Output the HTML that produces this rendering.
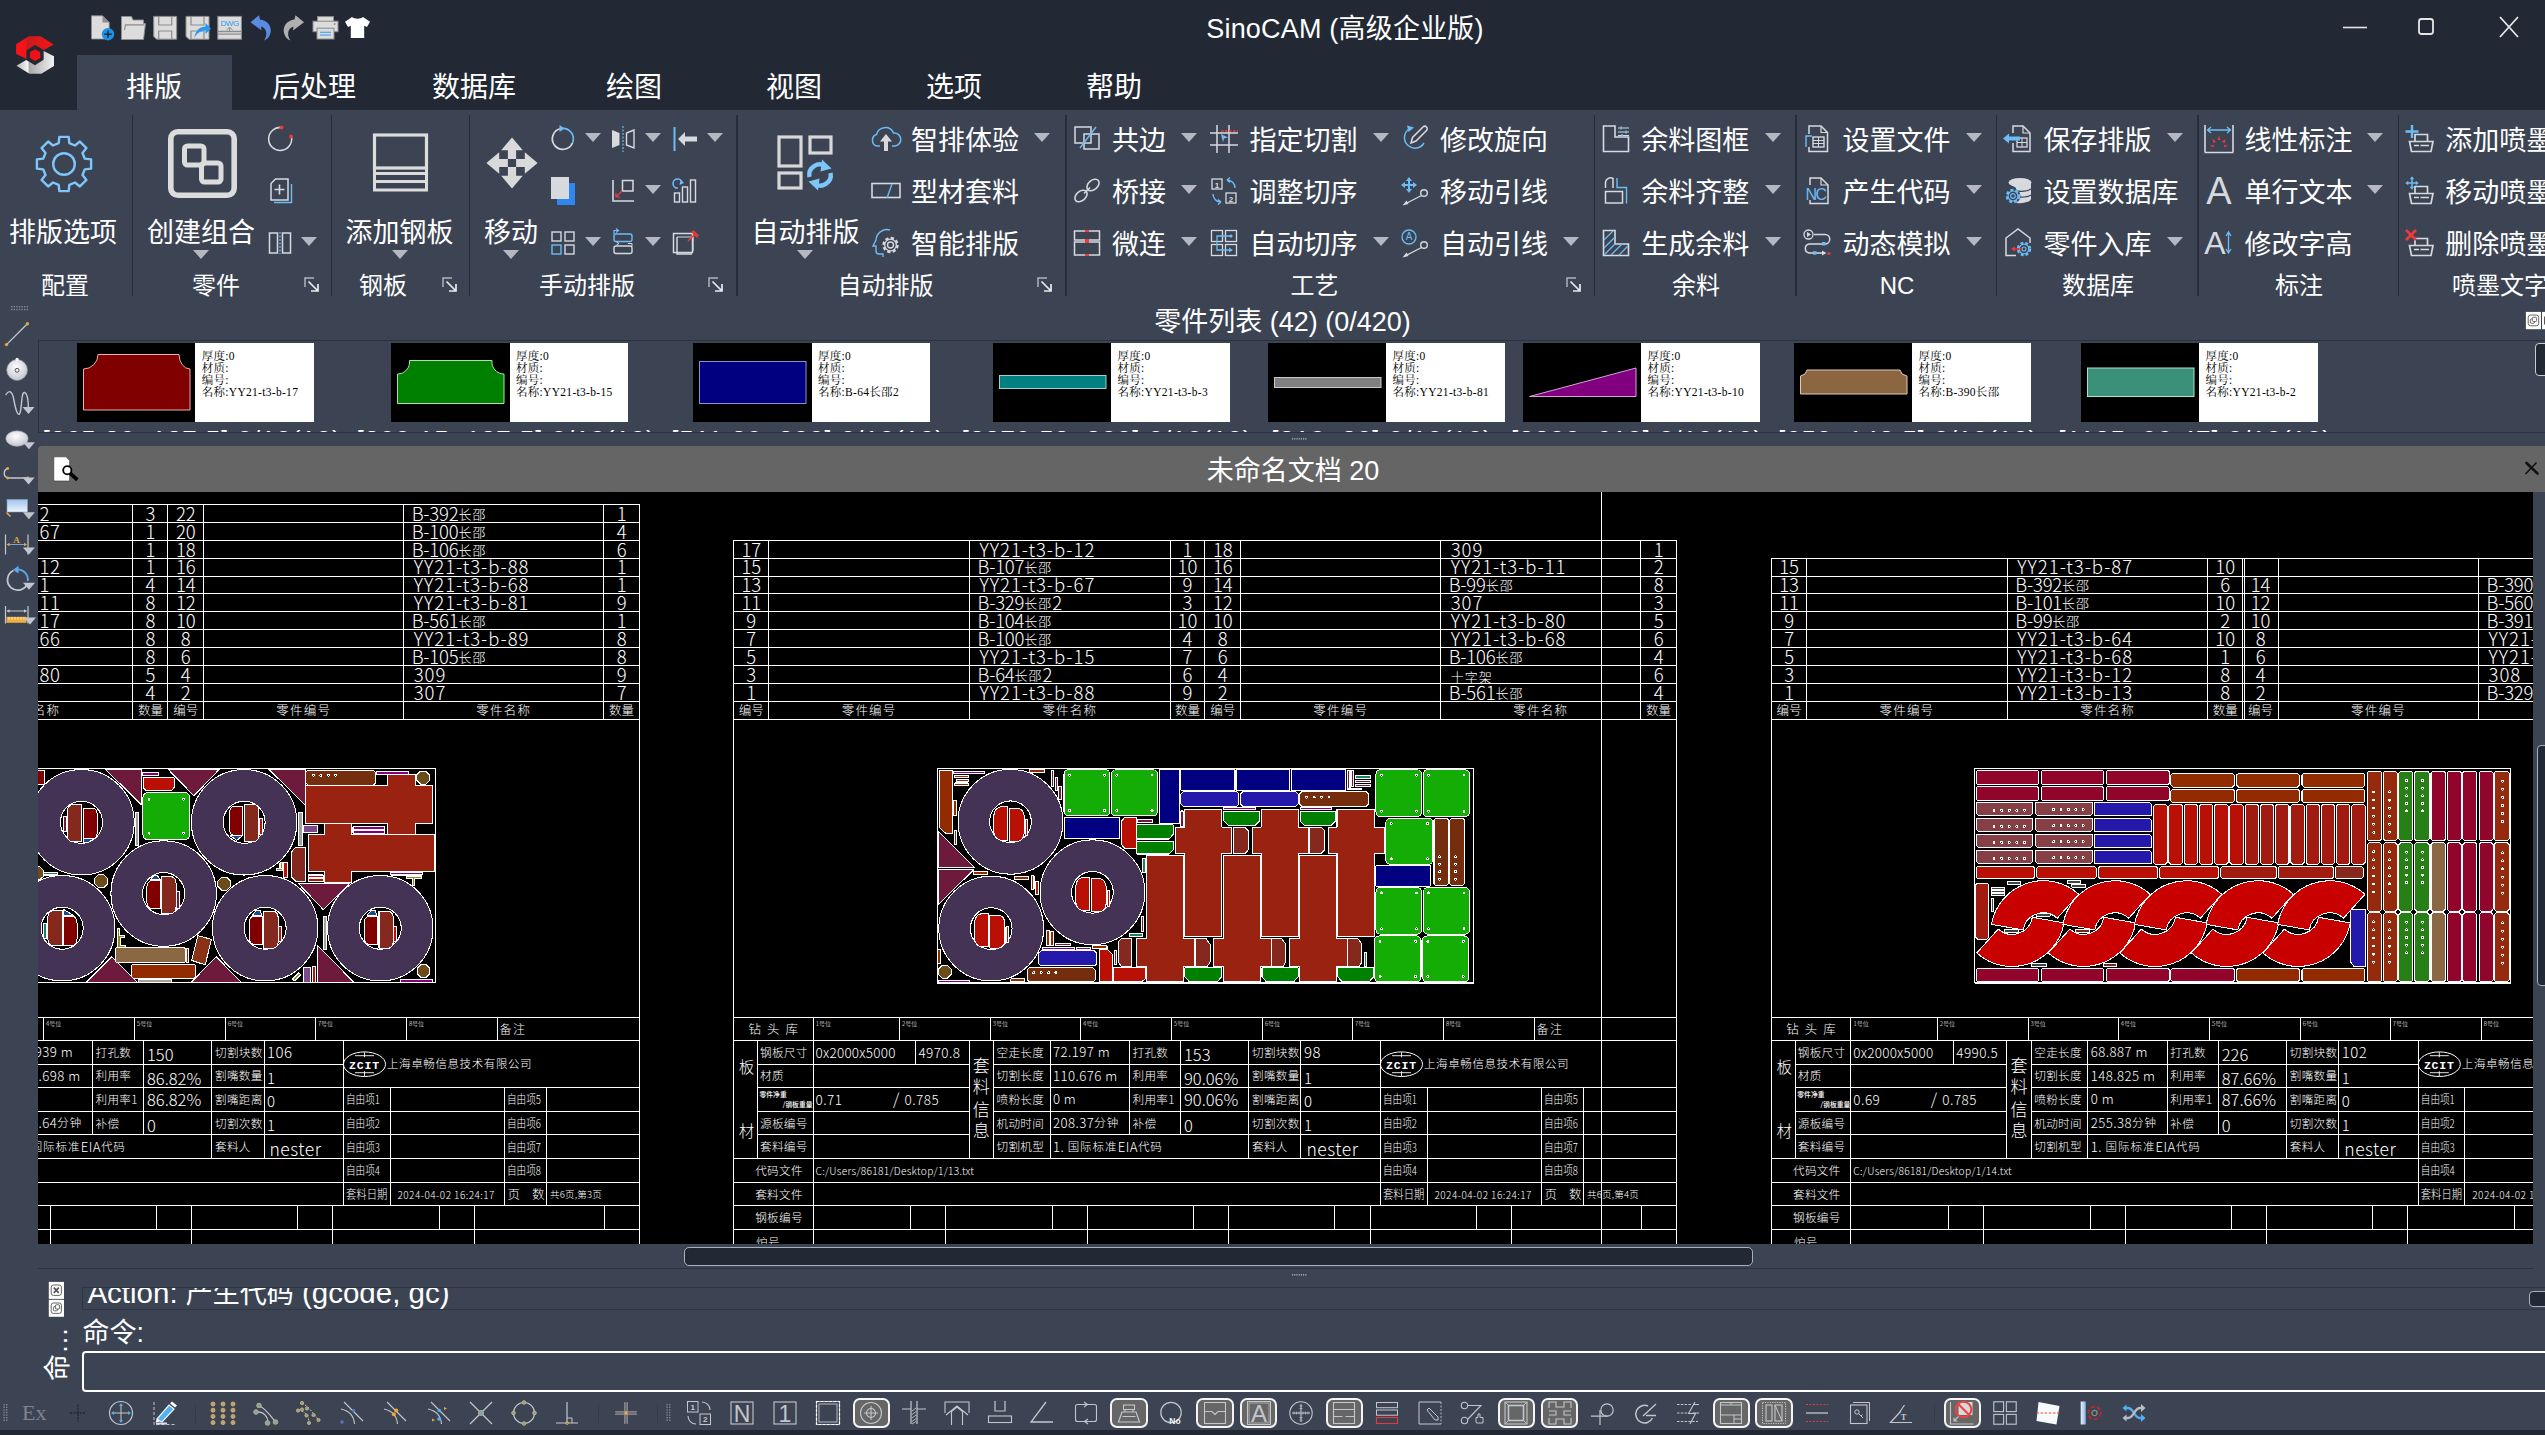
<!DOCTYPE html>
<html lang="zh"><head><meta charset="utf-8"><title>SinoCAM</title>
<style>
html,body{margin:0;padding:0;}
body{width:2545px;height:1435px;overflow:hidden;background:#3c4454;position:relative;font-family:"Liberation Sans","Noto Sans CJK SC",sans-serif;}
div,svg{position:absolute;box-sizing:border-box;}
.t{white-space:nowrap;color:#fff;}
svg{overflow:hidden;}
</style></head><body>
<!-- top -->
<div style="left:0px;top:0px;width:2545px;height:110px;background:#222934"></div>
<div style="left:0px;top:110px;width:2545px;height:190px;background:#3c4454"></div>
<div style="left:77px;top:55px;width:155px;height:56px;background:#3c4454"></div>
<svg style="left:0px;top:20px;" width="70" height="70" viewBox="0 0 70 70"><defs><linearGradient id="lgw" x1="0" y1="0" x2="1" y2="0"><stop offset="0" stop-color="#f2f2f2"/><stop offset="0.65" stop-color="#a9a9a9"/><stop offset="0.7" stop-color="#f4f4f4"/><stop offset="1" stop-color="#b5b5b5"/></linearGradient>
    <linearGradient id="lgr" x1="0" y1="0" x2="1" y2="0"><stop offset="0" stop-color="#ff1218"/><stop offset="0.27" stop-color="#f01418"/><stop offset="0.3" stop-color="#c81c1c"/><stop offset="1" stop-color="#fa1216"/></linearGradient></defs>
    <g transform="scale(0.07668711656441718)"><polygon points="210,315 375,212 530,212 700,318 572,392 458,325 345,395 345,510 210,440" fill="url(#lgr)"/><polygon points="210,315 375,212 530,212 700,318 572,392 458,325 345,395 345,510 210,440" fill="url(#lgw)" transform="rotate(180 457 457)"/><polygon points="457,380 525,420 525,495 457,535 390,495 390,420" fill="#f01015"/></g></svg>
<svg style="left:0px;top:0px;" width="400" height="50" viewBox="0 0 400 50"><path d="M91.5,15.8 H102.5 L109.2,22.5 V39 H91.5 Z" fill="#dcdcdc" stroke="#8c8c8c" stroke-width="0.8"/><path d="M102.5,15.8 V22.5 H109.2 Z" fill="#8c8c8c"/><circle cx="108" cy="34.2" r="6.2" fill="#1a93ea"/><path d="M104.2,34.2 H111.8 M108,30.4 V38" stroke="#222934" stroke-width="1.5"/><path d="M121.5,16.5 H131.5 L133,20 H143.5 V23.5 H145.5 L143.5,39.5 H121.5 Z" fill="#dcdcdc" stroke="#8c8c8c" stroke-width="0.9"/><path d="M124.5,30 L125.5,24.8 H144.5" fill="none" stroke="#8c8c8c" stroke-width="1.2"/><path d="M153.7,16.4 H176.7 V39.2 H156.7 L153.7,36.5 Z" fill="#dcdcdc" stroke="#8c8c8c" stroke-width="1"/><path d="M158.7,16.4 V25 H171.7 V16.4 M158.7,39.2 V31 H171.7 V39.2" fill="none" stroke="#8c8c8c" stroke-width="1.2"/><path d="M186,16.4 H209 V39.2 H189 L186,36.5 Z" fill="#dcdcdc" stroke="#8c8c8c" stroke-width="1"/><path d="M191,16.4 V25 H204 V16.4 M191,39.2 V31 H204 V39.2" fill="none" stroke="#8c8c8c" stroke-width="1.2"/><path d="M194,38 C196,30 200,26.5 205.5,26.5 V23 L211,28.5 L205.5,34 V30.5 C201,30.5 197,33 194,38 Z" fill="#2a98f0"/><rect x="217.8" y="16.4" width="23.6" height="22.8" fill="#dcdcdc" stroke="#8c8c8c" stroke-width="1"/><path d="M217.8,31.5 H241.4 M217.8,34.2 H241.4" stroke="#8c8c8c" stroke-width="1.3"/><text x="229.6" y="26" font-size="8" fill="#2a98f0" text-anchor="middle" font-family="Liberation Sans,sans-serif" letter-spacing="-0.5">DWG</text><path d="M229.6,27.5 V31 M226.5,30 L229.6,27.3 L232.7,30" stroke="#8c8c8c" stroke-width="1" fill="none"/><path d="M250.5,22.2 L259,15.3 L260,19.6 C268,20.5 272,27 270.5,33 C269.5,37 267,39.5 264,40.6 C267.5,36 267.5,28.5 261,26.6 L261.5,30.6 Z" fill="#5b8be0"/><path d="M304,22.2 L295.5,15.3 L294.5,19.6 C286.5,20.5 282.5,27 284,33 C285,37 287.5,39.5 290.5,40.6 C287,36 287,28.5 293.5,26.6 L293,30.6 Z" fill="#b0b0b0"/><rect x="317.5" y="16.6" width="16" height="5" fill="#dcdcdc" stroke="#8c8c8c" stroke-width="1"/><rect x="313" y="21.2" width="25" height="10.5" fill="#dcdcdc" stroke="#8c8c8c" stroke-width="1"/><rect x="317" y="28.2" width="17" height="10.8" fill="#dcdcdc" stroke="#8c8c8c" stroke-width="1"/><path d="M320,32.3 H331 M320,35 H331" stroke="#2a98f0" stroke-width="1.1"/><circle cx="334.6" cy="24" r="0.9" fill="#8c8c8c"/><path d="M352,17 C354.5,19.3 360.5,19.3 363,17 L370,21.8 L367,27 L364.2,25.8 V38 H350.8 V25.8 L348,27 L345,21.8 Z" fill="#ffffff"/></svg>
<div class="t" style="left:1045.0px;top:10.5px;width:600px;text-align:center;font-size:27px;line-height:37px;color:#ffffff;letter-spacing:0.2px">SinoCAM (高级企业版)</div>
<svg style="left:2330px;top:10px;" width="215" height="40" viewBox="0 0 215 40"><path d="M 13,17.5 H 37" stroke="#e6e6e6" stroke-width="1.6" fill="none" /><rect x="89" y="9" width="14" height="15" rx="2.5" stroke="#e6e6e6" stroke-width="1.8" fill="none"/><path d="M 170,7 L 188,27 M 188,7 L 170,27" stroke="#e6e6e6" stroke-width="1.8" fill="none" /></svg>
<div class="t" style="left:-146.0px;top:67.5px;width:600px;text-align:center;font-size:28px;line-height:39px;color:#ffffff;">排版</div>
<div class="t" style="left:14.0px;top:67.5px;width:600px;text-align:center;font-size:28px;line-height:39px;color:#ffffff;">后处理</div>
<div class="t" style="left:174.0px;top:67.5px;width:600px;text-align:center;font-size:28px;line-height:39px;color:#ffffff;">数据库</div>
<div class="t" style="left:334.0px;top:67.5px;width:600px;text-align:center;font-size:28px;line-height:39px;color:#ffffff;">绘图</div>
<div class="t" style="left:494.0px;top:67.5px;width:600px;text-align:center;font-size:28px;line-height:39px;color:#ffffff;">视图</div>
<div class="t" style="left:654.0px;top:67.5px;width:600px;text-align:center;font-size:28px;line-height:39px;color:#ffffff;">选项</div>
<div class="t" style="left:814.0px;top:67.5px;width:600px;text-align:center;font-size:28px;line-height:39px;color:#ffffff;">帮助</div>
<div style="left:131.9px;top:115px;width:1.5px;height:181px;background:#262c38"></div>
<div style="left:330.5px;top:115px;width:1.5px;height:181px;background:#262c38"></div>
<div style="left:468.5px;top:115px;width:1.5px;height:181px;background:#262c38"></div>
<div style="left:736.1px;top:115px;width:1.5px;height:181px;background:#262c38"></div>
<div style="left:1065.3px;top:115px;width:1.5px;height:181px;background:#262c38"></div>
<div style="left:1593.8px;top:115px;width:1.5px;height:181px;background:#262c38"></div>
<div style="left:1795.1px;top:115px;width:1.5px;height:181px;background:#262c38"></div>
<div style="left:1995.8px;top:115px;width:1.5px;height:181px;background:#262c38"></div>
<div style="left:2197.0px;top:115px;width:1.5px;height:181px;background:#262c38"></div>
<div style="left:2397.9px;top:115px;width:1.5px;height:181px;background:#262c38"></div>
<div class="t" style="left:-235.0px;top:269.2px;width:600px;text-align:center;font-size:24px;line-height:33px;color:#ffffff;">配置</div>
<div class="t" style="left:-84.0px;top:269.2px;width:600px;text-align:center;font-size:24px;line-height:33px;color:#ffffff;">零件</div>
<div class="t" style="left:83.0px;top:269.2px;width:600px;text-align:center;font-size:24px;line-height:33px;color:#ffffff;">钢板</div>
<div class="t" style="left:287.0px;top:269.2px;width:600px;text-align:center;font-size:24px;line-height:33px;color:#ffffff;">手动排版</div>
<div class="t" style="left:585.5px;top:269.2px;width:600px;text-align:center;font-size:24px;line-height:33px;color:#ffffff;">自动排版</div>
<div class="t" style="left:1014.5px;top:269.2px;width:600px;text-align:center;font-size:24px;line-height:33px;color:#ffffff;">工艺</div>
<div class="t" style="left:1396.0px;top:269.2px;width:600px;text-align:center;font-size:24px;line-height:33px;color:#ffffff;">余料</div>
<div class="t" style="left:1597.0px;top:269.2px;width:600px;text-align:center;font-size:24px;line-height:33px;color:#ffffff;">NC</div>
<div class="t" style="left:1798.0px;top:269.2px;width:600px;text-align:center;font-size:24px;line-height:33px;color:#ffffff;">数据库</div>
<div class="t" style="left:1999.0px;top:269.2px;width:600px;text-align:center;font-size:24px;line-height:33px;color:#ffffff;">标注</div>
<div class="t" style="left:2452px;top:269.2px;font-size:24px;line-height:33px;color:#ffffff;">喷墨文字</div>
<svg style="left:303.5px;top:277px;" width="16" height="16" viewBox="0 0 16 16"><path d="M 1,10 V 1 H 10" stroke="#aeb3bd" stroke-width="1.5" fill="none" /><path d="M 4.5,4.5 L 14,14 M 14,7 V 14 H 7" stroke="#e8eaee" stroke-width="1.7" fill="none" /></svg>
<svg style="left:442px;top:277px;" width="16" height="16" viewBox="0 0 16 16"><path d="M 1,10 V 1 H 10" stroke="#aeb3bd" stroke-width="1.5" fill="none" /><path d="M 4.5,4.5 L 14,14 M 14,7 V 14 H 7" stroke="#e8eaee" stroke-width="1.7" fill="none" /></svg>
<svg style="left:708.4px;top:277px;" width="16" height="16" viewBox="0 0 16 16"><path d="M 1,10 V 1 H 10" stroke="#aeb3bd" stroke-width="1.5" fill="none" /><path d="M 4.5,4.5 L 14,14 M 14,7 V 14 H 7" stroke="#e8eaee" stroke-width="1.7" fill="none" /></svg>
<svg style="left:1037.2px;top:277px;" width="16" height="16" viewBox="0 0 16 16"><path d="M 1,10 V 1 H 10" stroke="#aeb3bd" stroke-width="1.5" fill="none" /><path d="M 4.5,4.5 L 14,14 M 14,7 V 14 H 7" stroke="#e8eaee" stroke-width="1.7" fill="none" /></svg>
<svg style="left:1566.4px;top:277px;" width="16" height="16" viewBox="0 0 16 16"><path d="M 1,10 V 1 H 10" stroke="#aeb3bd" stroke-width="1.5" fill="none" /><path d="M 4.5,4.5 L 14,14 M 14,7 V 14 H 7" stroke="#e8eaee" stroke-width="1.7" fill="none" /></svg>
<div class="t" style="left:-237.0px;top:215.2px;width:600px;text-align:center;font-size:27px;line-height:37px;color:#ffffff;">排版选项</div>
<div class="t" style="left:-99.0px;top:215.2px;width:600px;text-align:center;font-size:27px;line-height:37px;color:#ffffff;">创建组合</div>
<div class="t" style="left:99.5px;top:215.2px;width:600px;text-align:center;font-size:27px;line-height:37px;color:#ffffff;">添加钢板</div>
<div class="t" style="left:211.0px;top:215.2px;width:600px;text-align:center;font-size:27px;line-height:37px;color:#ffffff;">移动</div>
<div class="t" style="left:505.5px;top:215.2px;width:600px;text-align:center;font-size:27px;line-height:37px;color:#ffffff;">自动排版</div>
<svg style="left:193.0px;top:250.0px" width="16" height="9"><path d="M0,0 H16 L8.0,9 Z" fill="#b4b8c2"/></svg>
<svg style="left:391.5px;top:250.0px" width="16" height="9"><path d="M0,0 H16 L8.0,9 Z" fill="#b4b8c2"/></svg>
<svg style="left:503.0px;top:250.0px" width="16" height="9"><path d="M0,0 H16 L8.0,9 Z" fill="#b4b8c2"/></svg>
<svg style="left:797.0px;top:250.0px" width="16" height="9"><path d="M0,0 H16 L8.0,9 Z" fill="#b4b8c2"/></svg>
<svg style="left:32px;top:131.5px;" width="64" height="64" viewBox="-32 -32 64 64"><polygon points="-5.32,-20.83 -4.65,-27.10 4.65,-27.10 5.32,-20.83 10.97,-18.49 15.88,-22.45 22.45,-15.88 18.49,-10.97 20.83,-5.32 27.10,-4.65 27.10,4.65 20.83,5.32 18.49,10.97 22.45,15.88 15.88,22.45 10.97,18.49 5.32,20.83 4.65,27.10 -4.65,27.10 -5.32,20.83 -10.97,18.49 -15.88,22.45 -22.45,15.88 -18.49,10.97 -20.83,5.32 -27.10,4.65 -27.10,-4.65 -20.83,-5.32 -18.49,-10.97 -22.45,-15.88 -15.88,-22.45 -10.97,-18.49" fill="none" stroke="#7cc6fa" stroke-width="2.4" stroke-linejoin="round"/><circle r="10.8" fill="none" stroke="#7cc6fa" stroke-width="2.4"/></svg>
<svg style="left:165px;top:126px;" width="76" height="76" viewBox="0 0 76 76"><rect x="5.8" y="5.8" width="63.4" height="63.4" rx="7" stroke="#dcdcdc" stroke-width="5.6" fill="none"/><rect x="19.5" y="20" width="19.5" height="19" rx="3" stroke="#dcdcdc" stroke-width="5" fill="none"/><rect x="36.5" y="37" width="19.5" height="19" rx="3" stroke="#dcdcdc" stroke-width="5" fill="none"/></svg>
<svg style="left:370px;top:130px;" width="60" height="66" viewBox="0 0 60 66"><rect x="4.5" y="5" width="52" height="33" rx="0" stroke="#dcdcdc" stroke-width="3.2" fill="none"/><path d="M 4.5,43.5 H 56.5 M 4.5,51.5 H 56.5 M 4.5,60 H 56.5 M 4.5,38 V 61.5 M 56.5,38 V 61.5" stroke="#dcdcdc" stroke-width="3" fill="none" /></svg>
<svg style="left:482px;top:133px;" width="60" height="60" viewBox="-30 -30 60 60"><path d="M0,-25.6 L10.8,-12.8 H4.1 V-4.1 H-4.1 V-12.8 H-10.8 Z" fill="#d9d9d9" transform="rotate(0)"/><path d="M0,-25.6 L10.8,-12.8 H4.1 V-4.1 H-4.1 V-12.8 H-10.8 Z" fill="#d9d9d9" transform="rotate(90)"/><path d="M0,-25.6 L10.8,-12.8 H4.1 V-4.1 H-4.1 V-12.8 H-10.8 Z" fill="#d9d9d9" transform="rotate(180)"/><path d="M0,-25.6 L10.8,-12.8 H4.1 V-4.1 H-4.1 V-12.8 H-10.8 Z" fill="#d9d9d9" transform="rotate(270)"/></svg>
<svg style="left:776px;top:134px;" width="62" height="60" viewBox="0 0 62 60"><rect x="3" y="3" width="22" height="29" rx="0" stroke="#d8d8d8" stroke-width="3.2" fill="none"/><rect x="34" y="3" width="21" height="16" rx="0" stroke="#d8d8d8" stroke-width="3.2" fill="none"/><rect x="3" y="39" width="22" height="15" rx="0" stroke="#d8d8d8" stroke-width="3.2" fill="none"/><g transform="translate(44,41)"><path d="M -10.5,2 A 10.5 10.5 0 0 1 6,-8.6" stroke="#7cc6fa" stroke-width="4.4" fill="none"/><path d="M 2,-15.5 L 11.5,-6.5 L 0.5,-3.5 Z" fill="#7cc6fa"/><path d="M 10.5,-2 A 10.5 10.5 0 0 1 -6,8.6" stroke="#7cc6fa" stroke-width="4.4" fill="none"/><path d="M -2,15.5 L -11.5,6.5 L -0.5,3.5 Z" fill="#7cc6fa"/></g></svg>
<svg style="left:264.0px;top:123.0px" width="32" height="32" viewBox="-16.0 -16.0 32 32"><path d="M 1.5,-11.5 A 11.5 11.5 0 1 0 11.5,-2" stroke="#d6d9de" stroke-width="1.6" fill="none" /><circle cx="1.5" cy="-11.5" r="2" stroke="#f03a3a" stroke-width="0" fill="#f03a3a"/><circle cx="11" cy="-2.5" r="2" stroke="#f03a3a" stroke-width="0" fill="#f03a3a"/></svg>
<svg style="left:264.0px;top:175.0px" width="32" height="32" viewBox="-16.0 -16.0 32 32"><path d="M -6,11.5 H 11.5 V -7" stroke="#6cbcf5" stroke-width="1.4" fill="none" /><path d="M -9,-7.5 L -4.5,-12 H 8 V 9 H -9 Z" stroke="#d6d9de" stroke-width="1.5" fill="none" /><path d="M -5.5,-1.5 H 4.5 M -0.5,-6.5 V 3.5" stroke="#d6d9de" stroke-width="1.6" fill="none" /></svg>
<svg style="left:264.0px;top:227.0px" width="32" height="32" viewBox="-16.0 -16.0 32 32"><rect x="-10.5" y="-10" width="8" height="20" rx="0" stroke="#d6d9de" stroke-width="1.5" fill="none"/><rect x="2.5" y="-10" width="8" height="20" rx="0" stroke="#d6d9de" stroke-width="1.5" fill="none"/><path d="M 0,-11 V 11" stroke="#6cbcf5" stroke-width="1.2" fill="none" stroke-dasharray="2 1.5"/></svg>
<svg style="left:301.3px;top:237.0px" width="16" height="9"><path d="M0,0 H16 L8.0,9 Z" fill="#b4b8c2"/></svg>
<svg style="left:546.7px;top:123.0px" width="32" height="32" viewBox="-16.0 -16.0 32 32"><path d="M -2,-10.5 A 10.5 10.5 0 1 0 9.5,4" stroke="#d6d9de" stroke-width="1.7" fill="none" /><path d="M 9.5,4 A 10.5 10.5 0 0 0 -2,-10.5" stroke="#6cbcf5" stroke-width="1.7" fill="none" /><path d="M -3.5,-14 L 1.5,-10.5 L -3.5,-7 Z" fill="#6cbcf5"/></svg>
<svg style="left:546.7px;top:175.0px" width="32" height="32" viewBox="-16.0 -16.0 32 32"><rect x="-6" y="-8" width="18" height="22" fill="#2f86f0"/><rect x="-12" y="-14" width="18" height="22" fill="#d6d9de"/></svg>
<svg style="left:546.7px;top:227.0px" width="32" height="32" viewBox="-16.0 -16.0 32 32"><rect x="-11" y="-11" width="9" height="9" rx="0" stroke="#d6d9de" stroke-width="1.4" fill="none"/><rect x="2" y="-11" width="9" height="9" rx="0" stroke="#d6d9de" stroke-width="1.4" fill="none"/><rect x="-11" y="2" width="9" height="9" rx="0" stroke="#6cbcf5" stroke-width="1.4" fill="none"/><rect x="2" y="2" width="9" height="9" rx="0" stroke="#d6d9de" stroke-width="1.4" fill="none"/></svg>
<svg style="left:607.2px;top:123.0px" width="32" height="32" viewBox="-16.0 -16.0 32 32"><path d="M -11,-9 L -3.5,-6 V 6 L -11,9 Z" fill="#d6d9de"/><path d="M 11,-9 L 3.5,-6 V 6 L 11,9 Z" stroke="#d6d9de" stroke-width="1.4" fill="none" /><path d="M 0,-13 V 13" stroke="#6cbcf5" stroke-width="1.2" fill="none" stroke-dasharray="2 1.5"/></svg>
<svg style="left:607.2px;top:175.0px" width="32" height="32" viewBox="-16.0 -16.0 32 32"><path d="M -10,-11 V 10 H 11" stroke="#d6d9de" stroke-width="1.6" fill="none" /><rect x="-0.5" y="-10.5" width="10.5" height="10.5" rx="0" stroke="#d6d9de" stroke-width="1.5" fill="none"/><path d="M -1,0 L -7,6 M -7,2 V 6 H -3" stroke="#f03a3a" stroke-width="1.2" fill="none" /></svg>
<svg style="left:607.2px;top:227.0px" width="32" height="32" viewBox="-16.0 -16.0 32 32"><rect x="-9" y="-9" width="18" height="7.5" rx="2" stroke="#6cbcf5" stroke-width="1.4" fill="none"/><rect x="-9" y="3" width="18" height="7.5" rx="2" stroke="#d6d9de" stroke-width="1.4" fill="none"/><path d="M -5,-12.5 H -9 V -9 M -7,-14.5 L -4.5,-12.5 L -7,-10.5" stroke="#6cbcf5" stroke-width="1.2" fill="none" /><path d="M 5,0.5 H 9 V 3 M -4,0.5 L -6.5,-1 M -4,0.5 L-6.5,2" stroke="#d6d9de" stroke-width="1.0" fill="none" /></svg>
<svg style="left:669.0px;top:123.0px" width="32" height="32" viewBox="-16.0 -16.0 32 32"><path d="M -10.5,-12 V 12" stroke="#6cbcf5" stroke-width="2" fill="none" /><path d="M -7,0 L 0,-7 V -2.5 H 12 V 2.5 H 0 V 7 Z" fill="#d6d9de"/></svg>
<svg style="left:669.0px;top:175.0px" width="32" height="32" viewBox="-16.0 -16.0 32 32"><rect x="-10.5" y="2" width="5" height="9" rx="0" stroke="#d6d9de" stroke-width="1.4" fill="none"/><rect x="-2.5" y="-4" width="5" height="15" rx="0" stroke="#d6d9de" stroke-width="1.4" fill="none"/><rect x="5.5" y="-11" width="5" height="22" rx="0" stroke="#d6d9de" stroke-width="1.4" fill="none"/><path d="M -3,-8 A 4.5 4.5 0 1 0 -7,-3" stroke="#6cbcf5" stroke-width="1.6" fill="none" /><path d="M -4.5,-11.5 L -1,-8 L -5.5,-6 Z" fill="#6cbcf5"/></svg>
<svg style="left:669.0px;top:227.0px" width="32" height="32" viewBox="-16.0 -16.0 32 32"><path d="M -8,-6 V 11 H 7" stroke="#d6d9de" stroke-width="1.5" fill="none" /><rect x="-11.5" y="-9.5" width="19" height="19" rx="0" stroke="#d6d9de" stroke-width="1.5" fill="none"/><path d="M -8,-6 H 8 V 8" stroke="#d6d9de" stroke-width="1.2" fill="none" /><path d="M 3,-2 L 9,-8 M 6.5,-11.5 L 12.5,-5.5 M 8,-12.5 L 13.5,-7" stroke="#f03a3a" stroke-width="1.6" fill="none" /></svg>
<svg style="left:584.6px;top:133.0px" width="16" height="9"><path d="M0,0 H16 L8.0,9 Z" fill="#b4b8c2"/></svg>
<svg style="left:584.6px;top:237.0px" width="16" height="9"><path d="M0,0 H16 L8.0,9 Z" fill="#b4b8c2"/></svg>
<svg style="left:645.4px;top:133.0px" width="16" height="9"><path d="M0,0 H16 L8.0,9 Z" fill="#b4b8c2"/></svg>
<svg style="left:645.4px;top:185.0px" width="16" height="9"><path d="M0,0 H16 L8.0,9 Z" fill="#b4b8c2"/></svg>
<svg style="left:645.4px;top:237.0px" width="16" height="9"><path d="M0,0 H16 L8.0,9 Z" fill="#b4b8c2"/></svg>
<svg style="left:706.5px;top:133.0px" width="16" height="9"><path d="M0,0 H16 L8.0,9 Z" fill="#b4b8c2"/></svg>
<svg style="left:870.0px;top:123.0px" width="32" height="32" viewBox="-16.0 -16.0 32 32"><path d="M -6,7 H -9 A 6 6 0 0 1 -9.5,-4.5 A 9 9 0 0 1 7.5,-6 A 6.5 6.5 0 0 1 9,7 H 6" stroke="#6cbcf5" stroke-width="1.5" fill="none" /><path d="M 0,-5 L 6,2.5 H 2 V 12 H -2 V 2.5 H -6 Z" fill="#d6d9de"/></svg>
<svg style="left:870.0px;top:175.0px" width="32" height="32" viewBox="-16.0 -16.0 32 32"><rect x="-14" y="-7.5" width="28" height="14" rx="0" stroke="#d6d9de" stroke-width="1.6" fill="none"/><path d="M 6,-7 L 1,7" stroke="#6cbcf5" stroke-width="1.4" fill="none" /></svg>
<svg style="left:870.0px;top:227.0px" width="32" height="32" viewBox="-16.0 -16.0 32 32"><path d="M 4,-13 A 11 11 0 0 0 -10,-3 L -13,3 H -10 V 8 A 3 3 0 0 0 -7,11 H -3 V 14" stroke="#6cbcf5" stroke-width="1.4" fill="none" /><circle cx="4.5" cy="2" r="3" stroke="#d6d9de" stroke-width="1.4" fill="none"/><circle cx="4.5" cy="2" r="7" stroke="#d6d9de" stroke-width="2.4" fill="none" stroke-dasharray="3.2 2.3"/><circle cx="4.5" cy="2" r="5.8" stroke="#d6d9de" stroke-width="1.3" fill="none"/></svg>
<div class="t" style="left:911px;top:123.0px;font-size:27px;line-height:37px;color:#ffffff;">智排体验</div>
<svg style="left:1034.4px;top:133.0px" width="16" height="9"><path d="M0,0 H16 L8.0,9 Z" fill="#b4b8c2"/></svg>
<div class="t" style="left:911px;top:175.0px;font-size:27px;line-height:37px;color:#ffffff;">型材套料</div>
<div class="t" style="left:911px;top:227.0px;font-size:27px;line-height:37px;color:#ffffff;">智能排版</div>
<svg style="left:1070.6px;top:123.0px" width="32" height="32" viewBox="-16.0 -16.0 32 32"><rect x="-12" y="-12" width="16" height="16" rx="0" stroke="#d6d9de" stroke-width="1.5" fill="none"/><rect x="-3" y="-5" width="15" height="15" rx="0" stroke="#d6d9de" stroke-width="1.5" fill="none"/><path d="M 9,-12 L -7,9" stroke="#6cbcf5" stroke-width="1.4" fill="none" /></svg>
<svg style="left:1070.6px;top:175.0px" width="32" height="32" viewBox="-16.0 -16.0 32 32"><ellipse cx="-6" cy="5" rx="7" ry="4.6" transform="rotate(-40 -6 5)" stroke="#d6d9de" stroke-width="1.6" fill="none"/><ellipse cx="6" cy="-6" rx="7" ry="4.6" transform="rotate(-40 6 -6)" stroke="#d6d9de" stroke-width="1.6" fill="none"/><path d="M -3,2.5 L 3,-3.5" stroke="#d6d9de" stroke-width="1.6" fill="none" /></svg>
<svg style="left:1070.6px;top:227.0px" width="32" height="32" viewBox="-16.0 -16.0 32 32"><rect x="-12.5" y="-12" width="25" height="9" rx="0" stroke="#d6d9de" stroke-width="1.5" fill="none"/><rect x="-12.5" y="-1" width="25" height="13" rx="0" stroke="#d6d9de" stroke-width="1.5" fill="none"/><path d="M -2,-12 H 2 M -2,-3 H 2 M -2,-1 H 2 M -2,12 H 2" stroke="#f03a3a" stroke-width="2.2" fill="none" /></svg>
<div class="t" style="left:1112px;top:123.0px;font-size:27px;line-height:37px;color:#ffffff;">共边</div>
<svg style="left:1181.2px;top:133.0px" width="16" height="9"><path d="M0,0 H16 L8.0,9 Z" fill="#b4b8c2"/></svg>
<div class="t" style="left:1112px;top:175.0px;font-size:27px;line-height:37px;color:#ffffff;">桥接</div>
<svg style="left:1181.2px;top:185.0px" width="16" height="9"><path d="M0,0 H16 L8.0,9 Z" fill="#b4b8c2"/></svg>
<div class="t" style="left:1112px;top:227.0px;font-size:27px;line-height:37px;color:#ffffff;">微连</div>
<svg style="left:1181.2px;top:237.0px" width="16" height="9"><path d="M0,0 H16 L8.0,9 Z" fill="#b4b8c2"/></svg>
<svg style="left:1208.0px;top:123.0px" width="32" height="32" viewBox="-16.0 -16.0 32 32"><path d="M -7,-14 V 14 M 5,-14 V 14 M -14,-6 H 14 M -14,6 H 14" stroke="#d6d9de" stroke-width="1.5" fill="none" /><path d="M -3,-8 H 14" stroke="#f03a3a" stroke-width="1.3" fill="none" stroke-dasharray="2.5 1.5"/><path d="M -3,-5 L 4,-1.5 L 0,-0.5 L -1,3.5 Z" fill="#6cbcf5"/></svg>
<svg style="left:1208.0px;top:175.0px" width="32" height="32" viewBox="-16.0 -16.0 32 32"><rect x="-12" y="-12" width="10" height="10" rx="0" stroke="#d6d9de" stroke-width="1.3" fill="none"/><rect x="2" y="2" width="10" height="10" rx="0" stroke="#d6d9de" stroke-width="1.3" fill="none"/><text x="-7" y="-3.5" font-size="8" fill="#d6d9de" text-anchor="middle" font-family="Liberation Sans,sans-serif" font-weight="bold">1</text><text x="7" y="10.5" font-size="8" fill="#d6d9de" text-anchor="middle" font-family="Liberation Sans,sans-serif" font-weight="bold">2</text><path d="M 3,-11 A 8 8 0 0 1 11,-3 M 3,-11 l 3,-2.5 M 3,-11 l 3,2.5" stroke="#6cbcf5" stroke-width="1.4" fill="none" /><path d="M -3,11 A 8 8 0 0 1 -11,3 M -3,11 l -3,-2.5 M -3,11 l -3,2.5" stroke="#6cbcf5" stroke-width="1.4" fill="none" /></svg>
<svg style="left:1208.0px;top:227.0px" width="32" height="32" viewBox="-16.0 -16.0 32 32"><rect x="-12.5" y="-12.5" width="11" height="11" rx="0" stroke="#d6d9de" stroke-width="1.3" fill="none"/><rect x="1.5" y="-12.5" width="11" height="11" rx="0" stroke="#d6d9de" stroke-width="1.3" fill="none"/><rect x="-12.5" y="1.5" width="11" height="11" rx="0" stroke="#d6d9de" stroke-width="1.3" fill="none"/><rect x="1.5" y="1.5" width="11" height="11" rx="0" stroke="#d6d9de" stroke-width="1.3" fill="none"/><path d="M 7,-7 H -7 V 7 H 6" stroke="#6cbcf5" stroke-width="1.3" fill="none" /><circle cx="7" cy="-7" r="1.6" stroke="#6cbcf5" stroke-width="0" fill="#6cbcf5"/><path d="M 5,4.5 L 9,7 L 5,9.5 Z" fill="#6cbcf5"/></svg>
<div class="t" style="left:1249.5px;top:123.0px;font-size:27px;line-height:37px;color:#ffffff;">指定切割</div>
<svg style="left:1372.6px;top:133.0px" width="16" height="9"><path d="M0,0 H16 L8.0,9 Z" fill="#b4b8c2"/></svg>
<div class="t" style="left:1249.5px;top:175.0px;font-size:27px;line-height:37px;color:#ffffff;">调整切序</div>
<div class="t" style="left:1249.5px;top:227.0px;font-size:27px;line-height:37px;color:#ffffff;">自动切序</div>
<svg style="left:1372.6px;top:237.0px" width="16" height="9"><path d="M0,0 H16 L8.0,9 Z" fill="#b4b8c2"/></svg>
<svg style="left:1399.3px;top:123.0px" width="32" height="32" viewBox="-16.0 -16.0 32 32"><path d="M 9,4 A 10.5 10.5 0 1 1 -6,-10" stroke="#6cbcf5" stroke-width="1.5" fill="none" /><path d="M -8,-13.5 L -1,-11.5 L -6.5,-7 Z" fill="#6cbcf5"/><path d="M -4,4 L -2.5,-1.5 L 8,-12 A 2.4 2.4 0 0 1 11.5,-8.5 L 1,2 Z" stroke="#d6d9de" stroke-width="1.5" fill="none" /></svg>
<svg style="left:1399.3px;top:175.0px" width="32" height="32" viewBox="-16.0 -16.0 32 32"><circle cx="9" cy="2" r="3.3" stroke="#d6d9de" stroke-width="1.4" fill="none"/><path d="M 6.5,4.5 L -10,13" stroke="#d6d9de" stroke-width="1.4" fill="none" /><path d="M -12.5,14.5 L -8.5,9.5 L -6.5,13 Z" fill="#d6d9de"/><path d="M -6,-14 l 3,4 h-2 v3 h3 v-2 l4,3 l-4,3 v-2 h-3 v3 h2 l-3,4 l-3,-4 h2 v-3 h-3 v2 l-4,-3 l4,-3 v2 h3 v-3 h-2 Z" fill="#6cbcf5"/></svg>
<svg style="left:1399.3px;top:227.0px" width="32" height="32" viewBox="-16.0 -16.0 32 32"><circle cx="9" cy="2" r="3.3" stroke="#d6d9de" stroke-width="1.4" fill="none"/><path d="M 6.5,4.5 L -10,13" stroke="#d6d9de" stroke-width="1.4" fill="none" /><path d="M -12.5,14.5 L -8.5,9.5 L -6.5,13 Z" fill="#d6d9de"/><circle cx="-6" cy="-6" r="7" stroke="#6cbcf5" stroke-width="1.3" fill="none"/><text x="-6" y="-2.6" font-size="10" fill="#6cbcf5" text-anchor="middle" font-family="Liberation Sans,sans-serif">A</text></svg>
<div class="t" style="left:1440px;top:123.0px;font-size:27px;line-height:37px;color:#ffffff;">修改旋向</div>
<div class="t" style="left:1440px;top:175.0px;font-size:27px;line-height:37px;color:#ffffff;">移动引线</div>
<div class="t" style="left:1440px;top:227.0px;font-size:27px;line-height:37px;color:#ffffff;">自动引线</div>
<svg style="left:1563.1px;top:237.0px" width="16" height="9"><path d="M0,0 H16 L8.0,9 Z" fill="#b4b8c2"/></svg>
<svg style="left:1600.0px;top:123.0px" width="32" height="32" viewBox="-16.0 -16.0 32 32"><path d="M -12.5,-13 H -1 V -2 H 12.5 V 12.5 H -12.5 Z" stroke="#d6d9de" stroke-width="1.6" fill="none" /><path d="M 2,-11 H 13 M 2,-7 H 13 M 2,-3.5 H 13" stroke="#d6d9de" stroke-width="1.2" fill="none" /><path d="M 5,-12.5 v3 M 10,-8.5 v3 M 6,-5 v3" stroke="#6cbcf5" stroke-width="1.6" fill="none" /></svg>
<svg style="left:1600.0px;top:175.0px" width="32" height="32" viewBox="-16.0 -16.0 32 32"><path d="M -10.5,-3 V -8 A 5 5 0 0 1 -3,-12.5 V -3" stroke="#d6d9de" stroke-width="1.5" fill="none" /><rect x="-10.5" y="0.5" width="17" height="11.5" rx="0" stroke="#d6d9de" stroke-width="1.5" fill="none"/><path d="M 1,-13 V -3.5 H 10.5 V 12.5" stroke="#6cbcf5" stroke-width="1.4" fill="none" /></svg>
<svg style="left:1600.0px;top:227.0px" width="32" height="32" viewBox="-16.0 -16.0 32 32"><path d="M -12.5,-12.5 H -1 V 1 H 12.5 V 12.5 H -12.5 Z" stroke="#d6d9de" stroke-width="1.6" fill="none" /><path d="M -12,-3 L -3,-12 M -12,5 L -1.5,-5.5 M -12,12 L -1,1 M -5,12 L 6,1 M 3,12 L 12,3" stroke="#6cbcf5" stroke-width="1.3" fill="none" /></svg>
<div class="t" style="left:1641.2px;top:123.0px;font-size:27px;line-height:37px;color:#ffffff;">余料图框</div>
<svg style="left:1764.7px;top:133.0px" width="16" height="9"><path d="M0,0 H16 L8.0,9 Z" fill="#b4b8c2"/></svg>
<div class="t" style="left:1641.2px;top:175.0px;font-size:27px;line-height:37px;color:#ffffff;">余料齐整</div>
<svg style="left:1764.7px;top:185.0px" width="16" height="9"><path d="M0,0 H16 L8.0,9 Z" fill="#b4b8c2"/></svg>
<div class="t" style="left:1641.2px;top:227.0px;font-size:27px;line-height:37px;color:#ffffff;">生成余料</div>
<svg style="left:1764.7px;top:237.0px" width="16" height="9"><path d="M0,0 H16 L8.0,9 Z" fill="#b4b8c2"/></svg>
<svg style="left:1800.8px;top:123.0px" width="32" height="32" viewBox="-16.0 -16.0 32 32"><path d="M -8,-5 V -13 H 4 L 10.5,-6.5 V 12.5 H -8 V 8" stroke="#d6d9de" stroke-width="1.5" fill="none" /><path d="M 4,-13 V -6.5 H 10.5" stroke="#d6d9de" stroke-width="1.2" fill="none" /><rect x="-4" y="-2" width="11" height="10" rx="0" stroke="#d6d9de" stroke-width="1.4" fill="none"/><path d="M -4,1.5 H 7 M -4,4.5 H 7 M 1.5,-2 V 8" stroke="#d6d9de" stroke-width="1.0" fill="none" /><path d="M -11,8 V -3 H -5" stroke="#6cbcf5" stroke-width="1.4" fill="none" /></svg>
<svg style="left:1800.8px;top:175.0px" width="32" height="32" viewBox="-16.0 -16.0 32 32"><path d="M -7,-6 V -13 H 4 L 11,-6 V 12.5 H -7 V 9" stroke="#d6d9de" stroke-width="1.5" fill="none" /><path d="M 4,-13 V -6 H 11" stroke="#d6d9de" stroke-width="1.2" fill="none" /><text x="-1.5" y="8.5" font-size="16" fill="#6cbcf5" text-anchor="middle" font-family="Liberation Sans,sans-serif" letter-spacing="-1.5">NC</text></svg>
<svg style="left:1800.8px;top:227.0px" width="32" height="32" viewBox="-16.0 -16.0 32 32"><circle cx="-8.5" cy="-8.5" r="4.5" stroke="#d6d9de" stroke-width="1.3" fill="none"/><path d="M -10,-11 L -6,-8.5 L -10,-6 Z" fill="#d6d9de"/><path d="M -3,-8.5 H 8 A 4.6 4.6 0 0 1 8,1 H -8 A 4.6 4.6 0 0 0 -8,10 H 5" stroke="#d6d9de" stroke-width="1.5" fill="none" /><path d="M 5,7.5 L 9.5,10 L 5,12.5 Z" fill="#d6d9de"/><circle cx="12" cy="10.5" r="1.5" stroke="#f03a3a" stroke-width="0" fill="#f03a3a"/><rect x="5" y="-1" width="3.5" height="3.5" fill="#6cbcf5"/><rect x="-4" y="8.2" width="3.5" height="3.5" fill="#6cbcf5"/></svg>
<div class="t" style="left:1842.5px;top:123.0px;font-size:27px;line-height:37px;color:#ffffff;">设置文件</div>
<svg style="left:1965.6px;top:133.0px" width="16" height="9"><path d="M0,0 H16 L8.0,9 Z" fill="#b4b8c2"/></svg>
<div class="t" style="left:1842.5px;top:175.0px;font-size:27px;line-height:37px;color:#ffffff;">产生代码</div>
<svg style="left:1965.6px;top:185.0px" width="16" height="9"><path d="M0,0 H16 L8.0,9 Z" fill="#b4b8c2"/></svg>
<div class="t" style="left:1842.5px;top:227.0px;font-size:27px;line-height:37px;color:#ffffff;">动态模拟</div>
<svg style="left:1965.6px;top:237.0px" width="16" height="9"><path d="M0,0 H16 L8.0,9 Z" fill="#b4b8c2"/></svg>
<svg style="left:2002.0px;top:123.0px" width="32" height="32" viewBox="-16.0 -16.0 32 32"><path d="M -5,-6 V -13 H 5 L 12,-6 V 12.5 H -5 V 4" stroke="#d6d9de" stroke-width="1.5" fill="none" /><path d="M 5,-13 V -6 H 12" stroke="#d6d9de" stroke-width="1.2" fill="none" /><rect x="-1" y="-1" width="10" height="9" rx="0" stroke="#d6d9de" stroke-width="1.3" fill="none"/><path d="M -1,3.5 H 9 M 4,-1 V 8" stroke="#d6d9de" stroke-width="1.0" fill="none" /><path d="M -15,-0.5 L -9,-5.5 V -2.5 H 2 V 1.5 H -9 V 4.5 Z" fill="#6cbcf5"/></svg>
<svg style="left:2002.0px;top:175.0px" width="32" height="32" viewBox="-16.0 -16.0 32 32"><path d="M -9,-8 A 12 4.5 0 0 1 13,-8 V 8 A 12 4.5 0 0 1 -2,12 L -2,-3 Z" fill="#d6d9de"/><ellipse cx="2" cy="-8.5" rx="11.5" ry="4.5" fill="#d6d9de"/><path d="M -2,0 A 12 4 0 0 0 13,-2 M 0,6 A 12 4 0 0 0 13,4" stroke="#3c4454" stroke-width="1.4" fill="none" /><circle cx="-5" cy="5" r="7.5" fill="#3c4454"/><circle cx="-5" cy="5" r="6" stroke="#6cbcf5" stroke-width="2.6" fill="none" stroke-dasharray="3 2"/><circle cx="-5" cy="5" r="5" stroke="#6cbcf5" stroke-width="1.2" fill="none"/><circle cx="-5" cy="5" r="2.3" stroke="#6cbcf5" stroke-width="1.2" fill="none"/></svg>
<svg style="left:2002.0px;top:227.0px" width="32" height="32" viewBox="-16.0 -16.0 32 32"><path d="M 12,0 V -5 L 0,-14 L -12,-5 V 12.5 H -2" stroke="#d6d9de" stroke-width="1.5" fill="none" /><circle cx="6" cy="6" r="6" stroke="#6cbcf5" stroke-width="2.4" fill="none" stroke-dasharray="2.8 2"/><circle cx="6" cy="6" r="4.8" stroke="#6cbcf5" stroke-width="1.2" fill="none"/><circle cx="6" cy="6" r="2" stroke="#6cbcf5" stroke-width="1.1" fill="none"/><path d="M 4,6 H -4" stroke="#f03a3a" stroke-width="1.4" fill="none" /><path d="M -7,6 L -3,3.5 V 8.5 Z" fill="#f03a3a"/></svg>
<div class="t" style="left:2043.6px;top:123.0px;font-size:27px;line-height:37px;color:#ffffff;">保存排版</div>
<svg style="left:2166.7px;top:133.0px" width="16" height="9"><path d="M0,0 H16 L8.0,9 Z" fill="#b4b8c2"/></svg>
<div class="t" style="left:2043.6px;top:175.0px;font-size:27px;line-height:37px;color:#ffffff;">设置数据库</div>
<div class="t" style="left:2043.6px;top:227.0px;font-size:27px;line-height:37px;color:#ffffff;">零件入库</div>
<svg style="left:2166.7px;top:237.0px" width="16" height="9"><path d="M0,0 H16 L8.0,9 Z" fill="#b4b8c2"/></svg>
<svg style="left:2203.0px;top:123.0px" width="32" height="32" viewBox="-16.0 -16.0 32 32"><path d="M -14,-14 V 13 M 14,-14 V 13 M -14.5,13.5 H 14.5" stroke="#d6d9de" stroke-width="1.6" fill="none" /><path d="M -11,-9 H 11 M -8,-12 L -11.5,-9 L -8,-6 M 8,-12 L 11.5,-9 L 8,-6" stroke="#6cbcf5" stroke-width="1.4" fill="none" /><path d="M 0,-3 l1.5,4 h-3 Z M -6.5,0 l3.5,2.5 l-2.5,1.8 Z M 6.5,0 l-3.5,2.5 l2.5,1.8 Z M -9,6.5 l4,-0.5 l-0.5,2.5 Z M 9,6.5 l-4,-0.5 l0.5,2.5 Z" fill="#f03a3a"/></svg>
<svg style="left:2203.0px;top:175.0px" width="32" height="32" viewBox="-16.0 -16.0 32 32"><text x="0" y="12.5" font-size="38" fill="#d6d9de" text-anchor="middle" font-family="Liberation Sans,sans-serif">A</text></svg>
<svg style="left:2203.0px;top:227.0px" width="32" height="32" viewBox="-16.0 -16.0 32 32"><text x="-4" y="11" font-size="32" fill="#d6d9de" text-anchor="middle" font-family="Liberation Sans,sans-serif">A</text><path d="M 9.5,-10 V 9 M 7,-7 L 9.5,-11 L 12,-7 M 7,6 L 9.5,10 L 12,6" stroke="#6cbcf5" stroke-width="1.3" fill="none" /></svg>
<div class="t" style="left:2244.5px;top:123.0px;font-size:27px;line-height:37px;color:#ffffff;">线性标注</div>
<svg style="left:2367.3px;top:133.0px" width="16" height="9"><path d="M0,0 H16 L8.0,9 Z" fill="#b4b8c2"/></svg>
<div class="t" style="left:2244.5px;top:175.0px;font-size:27px;line-height:37px;color:#ffffff;">单行文本</div>
<svg style="left:2367.3px;top:185.0px" width="16" height="9"><path d="M0,0 H16 L8.0,9 Z" fill="#b4b8c2"/></svg>
<div class="t" style="left:2244.5px;top:227.0px;font-size:27px;line-height:37px;color:#ffffff;">修改字高</div>
<svg style="left:2404.2px;top:123.0px" width="32" height="32" viewBox="-16.0 -16.0 32 32"><path d="M -10.5,2.5 H 13 L 11,12.5 H -8.5 Z" stroke="#d6d9de" stroke-width="1.7" fill="none" /><path d="M -5,2.5 V -4.5 H 7.5 V 2.5" stroke="#d6d9de" stroke-width="1.7" fill="none" /><path d="M -6,6.5 H -1 M 0.5,6.5 H 9" stroke="#d6d9de" stroke-width="1.3" fill="none" /><path d="M -14.5,-7.5 H -1.5 M -8,-14 V -1" stroke="#6cbcf5" stroke-width="2.4" fill="none" /></svg>
<svg style="left:2404.2px;top:175.0px" width="32" height="32" viewBox="-16.0 -16.0 32 32"><path d="M -10.5,2.5 H 13 L 11,12.5 H -8.5 Z" stroke="#d6d9de" stroke-width="1.7" fill="none" /><path d="M -5,2.5 V -4.5 H 7.5 V 2.5" stroke="#d6d9de" stroke-width="1.7" fill="none" /><path d="M -6,6.5 H -1 M 0.5,6.5 H 9" stroke="#d6d9de" stroke-width="1.3" fill="none" /><path transform="translate(-8,-8) scale(0.75)" d="M 0,-9 l 3,4 h-2 v4 h4 v-2 l4,3 l-4,3 v-2 h-4 v4 h2 l-3,4 l-3,-4 h2 v-4 h-4 v2 l-4,-3 l4,-3 v2 h4 v-4 h-2 Z" fill="#6cbcf5"/></svg>
<svg style="left:2404.2px;top:227.0px" width="32" height="32" viewBox="-16.0 -16.0 32 32"><path d="M -10.5,2.5 H 13 L 11,12.5 H -8.5 Z" stroke="#d6d9de" stroke-width="1.7" fill="none" /><path d="M -5,2.5 V -4.5 H 7.5 V 2.5" stroke="#d6d9de" stroke-width="1.7" fill="none" /><path d="M -6,6.5 H -1 M 0.5,6.5 H 9" stroke="#d6d9de" stroke-width="1.3" fill="none" /><path d="M -14,-13 L -4,-3 M -4,-13 L -14,-3" stroke="#f03a3a" stroke-width="2.6" fill="none" /></svg>
<div class="t" style="left:2445.3px;top:123.0px;font-size:27px;line-height:37px;color:#ffffff;">添加喷墨</div>
<div class="t" style="left:2445.3px;top:175.0px;font-size:27px;line-height:37px;color:#ffffff;">移动喷墨</div>
<div class="t" style="left:2445.3px;top:227.0px;font-size:27px;line-height:37px;color:#ffffff;">删除喷墨</div>
<!-- mid -->
<div class="t" style="left:982.5px;top:304.0px;width:600px;text-align:center;font-size:27px;line-height:37px;color:#ffffff;">零件列表 (42) (0/420)</div>
<svg style="left:10.5px;top:306px;" width="20" height="6" viewBox="0 0 20 6"><rect x="0.0" y="0.0" width="1.5" height="1.4" fill="#7d8594"/><rect x="0.0" y="2.8" width="1.5" height="1.4" fill="#7d8594"/><rect x="2.6" y="0.0" width="1.5" height="1.4" fill="#7d8594"/><rect x="2.6" y="2.8" width="1.5" height="1.4" fill="#7d8594"/><rect x="5.2" y="0.0" width="1.5" height="1.4" fill="#7d8594"/><rect x="5.2" y="2.8" width="1.5" height="1.4" fill="#7d8594"/><rect x="7.800000000000001" y="0.0" width="1.5" height="1.4" fill="#7d8594"/><rect x="7.800000000000001" y="2.8" width="1.5" height="1.4" fill="#7d8594"/><rect x="10.4" y="0.0" width="1.5" height="1.4" fill="#7d8594"/><rect x="10.4" y="2.8" width="1.5" height="1.4" fill="#7d8594"/><rect x="13.0" y="0.0" width="1.5" height="1.4" fill="#7d8594"/><rect x="13.0" y="2.8" width="1.5" height="1.4" fill="#7d8594"/><rect x="15.600000000000001" y="0.0" width="1.5" height="1.4" fill="#7d8594"/><rect x="15.600000000000001" y="2.8" width="1.5" height="1.4" fill="#7d8594"/></svg>
<svg style="left:2525px;top:310px;" width="20" height="22" viewBox="0 0 20 22"><rect x="0.9" y="1.9" width="15.1" height="17.3" fill="#fff"/><rect x="3.2" y="5" width="10.5" height="10.8" rx="2.4" fill="none" stroke="#5a5550" stroke-width="0.9"/><rect x="5.3" y="9" width="4.3" height="4.3" rx="1.2" fill="none" stroke="#5a5550" stroke-width="0.9"/><rect x="7.3" y="7.2" width="4.3" height="4.3" rx="1.2" fill="#fff" stroke="#5a5550" stroke-width="0.9"/><rect x="17" y="1.9" width="3" height="17.3" fill="#fff"/><rect x="19" y="6.5" width="1" height="8" fill="#5a5550"/></svg>
<div style="left:37.5px;top:340px;width:2510px;height:92.5px;border:1.3px solid #2b323f;border-right:none"></div>
<div style="left:2535.2px;top:343.2px;width:14px;height:33px;background:#222934;border:1.3px solid #c8ccd2;border-radius:4px"></div>
<div style="left:76.7px;top:343px;width:118.5px;height:79px;background:#000"></div>
<svg style="left:76.7px;top:343px;" width="118.5" height="79" viewBox="0 0 118.5 79"><path d="M 6.5,67 V 26 A 14.5 14.5 0 0 0 21,11.5 H 102 A 11 14.5 0 0 0 113,26 V 67 Z" fill="#800000" stroke="#e8b0b0" stroke-width="1"/></svg>
<div style="left:195.2px;top:343px;width:118.5px;height:79px;background:#fff"></div>
<div class="t" style="left:201.7px;top:349.5px;font-size:11.5px;line-height:12px;color:#000;font-family:'Liberation Serif','Noto Serif CJK SC',serif;letter-spacing:0.3px">厚度:0</div>
<div class="t" style="left:201.7px;top:361.5px;font-size:11.5px;line-height:12px;color:#000;font-family:'Liberation Serif','Noto Serif CJK SC',serif;letter-spacing:0.3px">材质:</div>
<div class="t" style="left:201.7px;top:373.5px;font-size:11.5px;line-height:12px;color:#000;font-family:'Liberation Serif','Noto Serif CJK SC',serif;letter-spacing:0.3px">编号:</div>
<div class="t" style="left:201.7px;top:385.5px;font-size:11.5px;line-height:12px;color:#000;font-family:'Liberation Serif','Noto Serif CJK SC',serif;letter-spacing:0.3px">名称:YY21-t3-b-17</div>
<div style="left:391px;top:343px;width:118.5px;height:79px;background:#000"></div>
<svg style="left:391px;top:343px;" width="118.5" height="79" viewBox="0 0 118.5 79"><path d="M 6.5,60.5 V 31 A 12 12 0 0 0 18.5,17.5 H 101 A 12 12 0 0 0 113,31 V 60.5 Z" fill="#008000" stroke="#b0e0b0" stroke-width="1"/></svg>
<div style="left:509.5px;top:343px;width:118.5px;height:79px;background:#fff"></div>
<div class="t" style="left:516px;top:349.5px;font-size:11.5px;line-height:12px;color:#000;font-family:'Liberation Serif','Noto Serif CJK SC',serif;letter-spacing:0.3px">厚度:0</div>
<div class="t" style="left:516px;top:361.5px;font-size:11.5px;line-height:12px;color:#000;font-family:'Liberation Serif','Noto Serif CJK SC',serif;letter-spacing:0.3px">材质:</div>
<div class="t" style="left:516px;top:373.5px;font-size:11.5px;line-height:12px;color:#000;font-family:'Liberation Serif','Noto Serif CJK SC',serif;letter-spacing:0.3px">编号:</div>
<div class="t" style="left:516px;top:385.5px;font-size:11.5px;line-height:12px;color:#000;font-family:'Liberation Serif','Noto Serif CJK SC',serif;letter-spacing:0.3px">名称:YY21-t3-b-15</div>
<div style="left:693px;top:343px;width:118.5px;height:79px;background:#000"></div>
<svg style="left:693px;top:343px;" width="118.5" height="79" viewBox="0 0 118.5 79"><rect x="6.5" y="18.5" width="106.5" height="42" fill="#000080" stroke="#9090d0" stroke-width="1"/></svg>
<div style="left:811.5px;top:343px;width:118.5px;height:79px;background:#fff"></div>
<div class="t" style="left:818px;top:349.5px;font-size:11.5px;line-height:12px;color:#000;font-family:'Liberation Serif','Noto Serif CJK SC',serif;letter-spacing:0.3px">厚度:0</div>
<div class="t" style="left:818px;top:361.5px;font-size:11.5px;line-height:12px;color:#000;font-family:'Liberation Serif','Noto Serif CJK SC',serif;letter-spacing:0.3px">材质:</div>
<div class="t" style="left:818px;top:373.5px;font-size:11.5px;line-height:12px;color:#000;font-family:'Liberation Serif','Noto Serif CJK SC',serif;letter-spacing:0.3px">编号:</div>
<div class="t" style="left:818px;top:385.5px;font-size:11.5px;line-height:12px;color:#000;font-family:'Liberation Serif','Noto Serif CJK SC',serif;letter-spacing:0.3px">名称:B-64长邵2</div>
<div style="left:992.5px;top:343px;width:118.5px;height:79px;background:#000"></div>
<svg style="left:992.5px;top:343px;" width="118.5" height="79" viewBox="0 0 118.5 79"><rect x="6.5" y="32.5" width="106.5" height="13" fill="#008080" stroke="#a0d0d0" stroke-width="1"/></svg>
<div style="left:1111.0px;top:343px;width:118.5px;height:79px;background:#fff"></div>
<div class="t" style="left:1117.5px;top:349.5px;font-size:11.5px;line-height:12px;color:#000;font-family:'Liberation Serif','Noto Serif CJK SC',serif;letter-spacing:0.3px">厚度:0</div>
<div class="t" style="left:1117.5px;top:361.5px;font-size:11.5px;line-height:12px;color:#000;font-family:'Liberation Serif','Noto Serif CJK SC',serif;letter-spacing:0.3px">材质:</div>
<div class="t" style="left:1117.5px;top:373.5px;font-size:11.5px;line-height:12px;color:#000;font-family:'Liberation Serif','Noto Serif CJK SC',serif;letter-spacing:0.3px">编号:</div>
<div class="t" style="left:1117.5px;top:385.5px;font-size:11.5px;line-height:12px;color:#000;font-family:'Liberation Serif','Noto Serif CJK SC',serif;letter-spacing:0.3px">名称:YY21-t3-b-3</div>
<div style="left:1267.5px;top:343px;width:118.5px;height:79px;background:#000"></div>
<svg style="left:1267.5px;top:343px;" width="118.5" height="79" viewBox="0 0 118.5 79"><rect x="6.5" y="34.5" width="106.5" height="10" fill="#808080" stroke="#c8c8c8" stroke-width="1"/></svg>
<div style="left:1386.0px;top:343px;width:118.5px;height:79px;background:#fff"></div>
<div class="t" style="left:1392.5px;top:349.5px;font-size:11.5px;line-height:12px;color:#000;font-family:'Liberation Serif','Noto Serif CJK SC',serif;letter-spacing:0.3px">厚度:0</div>
<div class="t" style="left:1392.5px;top:361.5px;font-size:11.5px;line-height:12px;color:#000;font-family:'Liberation Serif','Noto Serif CJK SC',serif;letter-spacing:0.3px">材质:</div>
<div class="t" style="left:1392.5px;top:373.5px;font-size:11.5px;line-height:12px;color:#000;font-family:'Liberation Serif','Noto Serif CJK SC',serif;letter-spacing:0.3px">编号:</div>
<div class="t" style="left:1392.5px;top:385.5px;font-size:11.5px;line-height:12px;color:#000;font-family:'Liberation Serif','Noto Serif CJK SC',serif;letter-spacing:0.3px">名称:YY21-t3-b-81</div>
<div style="left:1522.5px;top:343px;width:118.5px;height:79px;background:#000"></div>
<svg style="left:1522.5px;top:343px;" width="118.5" height="79" viewBox="0 0 118.5 79"><path d="M 6.5,53.5 H 113 V 25 Z" fill="#800080" stroke="#d8a0d8" stroke-width="1"/></svg>
<div style="left:1641.0px;top:343px;width:118.5px;height:79px;background:#fff"></div>
<div class="t" style="left:1647.5px;top:349.5px;font-size:11.5px;line-height:12px;color:#000;font-family:'Liberation Serif','Noto Serif CJK SC',serif;letter-spacing:0.3px">厚度:0</div>
<div class="t" style="left:1647.5px;top:361.5px;font-size:11.5px;line-height:12px;color:#000;font-family:'Liberation Serif','Noto Serif CJK SC',serif;letter-spacing:0.3px">材质:</div>
<div class="t" style="left:1647.5px;top:373.5px;font-size:11.5px;line-height:12px;color:#000;font-family:'Liberation Serif','Noto Serif CJK SC',serif;letter-spacing:0.3px">编号:</div>
<div class="t" style="left:1647.5px;top:385.5px;font-size:11.5px;line-height:12px;color:#000;font-family:'Liberation Serif','Noto Serif CJK SC',serif;letter-spacing:0.3px">名称:YY21-t3-b-10</div>
<div style="left:1793.5px;top:343px;width:118.5px;height:79px;background:#000"></div>
<svg style="left:1793.5px;top:343px;" width="118.5" height="79" viewBox="0 0 118.5 79"><path d="M 6.5,51 V 33 L 11,31 L 13,27 H 106 L 108,31 L 113,33 V 51 Z" fill="#8b6640" stroke="#e0cdb4" stroke-width="1"/></svg>
<div style="left:1912.0px;top:343px;width:118.5px;height:79px;background:#fff"></div>
<div class="t" style="left:1918.5px;top:349.5px;font-size:11.5px;line-height:12px;color:#000;font-family:'Liberation Serif','Noto Serif CJK SC',serif;letter-spacing:0.3px">厚度:0</div>
<div class="t" style="left:1918.5px;top:361.5px;font-size:11.5px;line-height:12px;color:#000;font-family:'Liberation Serif','Noto Serif CJK SC',serif;letter-spacing:0.3px">材质:</div>
<div class="t" style="left:1918.5px;top:373.5px;font-size:11.5px;line-height:12px;color:#000;font-family:'Liberation Serif','Noto Serif CJK SC',serif;letter-spacing:0.3px">编号:</div>
<div class="t" style="left:1918.5px;top:385.5px;font-size:11.5px;line-height:12px;color:#000;font-family:'Liberation Serif','Noto Serif CJK SC',serif;letter-spacing:0.3px">名称:B-390长邵</div>
<div style="left:2080.5px;top:343px;width:118.5px;height:79px;background:#000"></div>
<svg style="left:2080.5px;top:343px;" width="118.5" height="79" viewBox="0 0 118.5 79"><rect x="6.5" y="25" width="106.5" height="28.5" fill="#3a9079" stroke="#b4dcd0" stroke-width="1"/></svg>
<div style="left:2199.0px;top:343px;width:118.5px;height:79px;background:#fff"></div>
<div class="t" style="left:2205.5px;top:349.5px;font-size:11.5px;line-height:12px;color:#000;font-family:'Liberation Serif','Noto Serif CJK SC',serif;letter-spacing:0.3px">厚度:0</div>
<div class="t" style="left:2205.5px;top:361.5px;font-size:11.5px;line-height:12px;color:#000;font-family:'Liberation Serif','Noto Serif CJK SC',serif;letter-spacing:0.3px">材质:</div>
<div class="t" style="left:2205.5px;top:373.5px;font-size:11.5px;line-height:12px;color:#000;font-family:'Liberation Serif','Noto Serif CJK SC',serif;letter-spacing:0.3px">编号:</div>
<div class="t" style="left:2205.5px;top:385.5px;font-size:11.5px;line-height:12px;color:#000;font-family:'Liberation Serif','Noto Serif CJK SC',serif;letter-spacing:0.3px">名称:YY21-t3-b-2</div>
<div style="left:38px;top:341px;width:2500px;height:90.5px;overflow:hidden"><div class="t" style="left:-46px;width:400px;text-align:center;top:84px;font-size:26px;line-height:30px;letter-spacing:0.9px">[265.89×187.5] 0/10(10)</div><div class="t" style="left:268px;width:400px;text-align:center;top:84px;font-size:26px;line-height:30px;letter-spacing:0.9px">[290.15×187.5] 0/10(10)</div><div class="t" style="left:570px;width:400px;text-align:center;top:84px;font-size:26px;line-height:30px;letter-spacing:0.9px">[511.29×300] 0/10(10)</div><div class="t" style="left:869px;width:400px;text-align:center;top:84px;font-size:26px;line-height:30px;letter-spacing:0.9px">[2879.53×200] 0/10(10)</div><div class="t" style="left:1144px;width:400px;text-align:center;top:84px;font-size:26px;line-height:30px;letter-spacing:0.9px">[310×20] 0/10(10)</div><div class="t" style="left:1399px;width:400px;text-align:center;top:84px;font-size:26px;line-height:30px;letter-spacing:0.9px">[2200×610] 0/10(10)</div><div class="t" style="left:1670px;width:400px;text-align:center;top:84px;font-size:26px;line-height:30px;letter-spacing:0.9px">[650×142.5] 0/10(10)</div><div class="t" style="left:1957px;width:400px;text-align:center;top:84px;font-size:26px;line-height:30px;letter-spacing:0.9px">[1185×96.47] 0/10(10)</div></div>
<svg style="left:1291.5px;top:437.5px;" width="18" height="3" viewBox="0 0 18 3"><rect x="0.0" y="0" width="1.2" height="1.6" fill="#9aa1ad"/><rect x="2.2" y="0" width="1.2" height="1.6" fill="#9aa1ad"/><rect x="4.4" y="0" width="1.2" height="1.6" fill="#9aa1ad"/><rect x="6.6000000000000005" y="0" width="1.2" height="1.6" fill="#9aa1ad"/><rect x="8.8" y="0" width="1.2" height="1.6" fill="#9aa1ad"/><rect x="11.0" y="0" width="1.2" height="1.6" fill="#9aa1ad"/><rect x="13.200000000000001" y="0" width="1.2" height="1.6" fill="#9aa1ad"/></svg>
<div style="left:38px;top:446px;width:2507px;height:46px;background:#656565;border-top-left-radius:4px;z-index:2"></div>
<div class="t" style="left:993.0px;top:452.5px;width:600px;text-align:center;font-size:27px;line-height:37px;color:#ffffff;z-index:3">未命名文档 20</div>
<svg style="left:50px;top:452px;z-index:3" width="34" height="34" viewBox="0 0 34 34"><path d="M3.8,4.8 H16 L19.6,8.5 V29 H3.8 Z" fill="#fff" stroke="#333" stroke-width="0.6"/><circle cx="17.3" cy="18.3" r="4.1" fill="#fff" stroke="#000" stroke-width="1.8"/><path d="M20.3,21.3 L27.4,27.8" stroke="#000" stroke-width="3.6"/></svg>
<svg style="left:2522px;top:458px;z-index:3" width="20" height="20" viewBox="0 0 20 20"><path d="M3.5,16 L14.5,4.5" stroke="#111" stroke-width="1.6"/><path d="M4.5,5 L15.5,15.5" stroke="#111" stroke-width="2.6" stroke-linecap="round"/></svg>
<svg style="left:0px;top:300px;" width="38" height="340" viewBox="0 300 38 340"><defs><radialGradient id="gc" cx="0.45" cy="0.35" r="0.8"><stop offset="0" stop-color="#ffffff"/><stop offset="1" stop-color="#b4b8c2"/></radialGradient><linearGradient id="gb" x1="0" y1="0" x2="0" y2="1"><stop offset="0" stop-color="#9fc3ee"/><stop offset="1" stop-color="#eef3fa"/></linearGradient></defs><path d="M6.5,344.6 L27.4,323.7" stroke="#c4c7cc" stroke-width="1.3" fill="none" /><circle cx="6.5" cy="344.6" r="1.7" stroke="#e8a540" stroke-width="0" fill="#e8a540"/><circle cx="27.4" cy="323.7" r="1.7" stroke="#e8a540" stroke-width="0" fill="#e8a540"/><circle cx="17.1" cy="370" r="10.4" fill="url(#gc)" stroke="#8d929c" stroke-width="0.6"/><circle cx="17.1" cy="370.3" r="2" stroke="#555" stroke-width="1" fill="#e8e8e8"/><circle cx="17.1" cy="359.4" r="1.6" stroke="#fff" stroke-width="0" fill="#fff"/><path d="M5.6,395 C 9,389.5 12,391 13.5,398 C 15.5,409 17.5,416 19.5,414 C 22,411 21,391.5 24.5,392.5 C 27.5,393.5 28.5,402 28.3,408" stroke="#c4c7cc" stroke-width="1.4" fill="none" /><path d="M22.5,407.0 H34.5 L28.5,414.0 Z" fill="#c2c6cf"/><ellipse cx="17" cy="438.6" rx="11.2" ry="7.8" fill="url(#gc)" stroke="#8d929c" stroke-width="0.6"/><path d="M22.9,442.3 H34.9 L28.9,449.3 Z" fill="#c2c6cf"/><path d="M7.7,468.5 A 5 5 0 0 0 7.7,478 H 28" stroke="#c4c7cc" stroke-width="1.4" fill="none" /><circle cx="7.7" cy="468.5" r="1.4" stroke="#e8a540" stroke-width="0" fill="#e8a540"/><circle cx="7.7" cy="478" r="1.4" stroke="#e8a540" stroke-width="0" fill="#e8a540"/><circle cx="27.8" cy="478" r="1.4" stroke="#e8a540" stroke-width="0" fill="#e8a540"/><path d="M22.6,477.5 H34.6 L28.6,484.5 Z" fill="#c2c6cf"/><rect x="7" y="499.4" width="20.6" height="12.6" fill="url(#gb)" stroke="#8a9bb4" stroke-width="0.6"/><path d="M6.5,512.5 L10.5,516.5" stroke="#e8a540" stroke-width="1.6" fill="none" /><path d="M22.9,512.3 H34.9 L28.9,519.3 Z" fill="#c2c6cf"/><path d="M5.5,534.5 V554.6 M28,534.5 V554.6" stroke="#c4c7cc" stroke-width="1.2" fill="none" /><path d="M7,544.5 H26.5" stroke="#7aa0d8" stroke-width="1" fill="none" /><path d="M6.5,544.5 l3,-1.8 v3.6 Z M27,544.5 l-3,-1.8 v3.6 Z" fill="#e8a540"/><text x="16.5" y="542.5" font-size="9" fill="#e8a540" text-anchor="middle" font-weight="bold" font-family="Liberation Serif,serif">A</text><path d="M22.9,547.5 H34.9 L28.9,554.5 Z" fill="#c2c6cf"/><path d="M 13.5,570.5 A 10.3 10.3 0 1 0 27.6,583" stroke="#c4c7cc" stroke-width="1.8" fill="none" /><path d="M 27.8,581 A 10.4 10.4 0 0 0 17,569.4" stroke="#5aaaf0" stroke-width="1.8" fill="none" /><path d="M13,569.8 L18.5,565.8 V573.5 Z" fill="#5aaaf0"/><path d="M23.0,582.8 H35.0 L29,589.8 Z" fill="#c2c6cf"/><path d="M5.5,606 V623.5 M28,606 V623.5" stroke="#c4c7cc" stroke-width="1.2" fill="none" /><path d="M7,611 H26.5" stroke="#c4c7cc" stroke-width="1" fill="none" /><path d="M6.5,611 l3,-1.8 v3.6 Z M27,611 l-3,-1.8 v3.6 Z" fill="#c4c7cc"/><rect x="6.5" y="616.8" width="20" height="6" fill="#f0b040"/><path d="M9,617 v2.5 M12,617 v2.5 M15,617 v2.5 M18,617 v2.5 M21,617 v2.5 M24,617 v2.5" stroke="#fff" stroke-width="0.7" fill="none" /><path d="M24.0,617.5 H36.0 L30,624.5 Z" fill="#c2c6cf"/></svg>
<!-- canvas -->
<svg style="left:38px;top:491px;background:#000" width="2495" height="753" viewBox="38 491 2495 753"><g shape-rendering="crispEdges"><g transform="translate(30,750) scale(0.24752)" stroke="#fff" stroke-width="4.161" stroke-linejoin="round"><path fill-rule="evenodd" d="M-5,292 a213,213 0 1,0 426,0 a213,213 0 1,0 -426,0 Z M123,292 a85,85 0 1,0 170,0 a85,85 0 1,0 -170,0 Z" fill="#443355"/><path fill-rule="evenodd" d="M652,292 a213,213 0 1,0 426,0 a213,213 0 1,0 -426,0 Z M780,292 a85,85 0 1,0 170,0 a85,85 0 1,0 -170,0 Z" fill="#443355"/><path fill-rule="evenodd" d="M327,580 a213,213 0 1,0 426,0 a213,213 0 1,0 -426,0 Z M455,580 a85,85 0 1,0 170,0 a85,85 0 1,0 -170,0 Z" fill="#443355"/><path fill-rule="evenodd" d="M-83,720 a213,213 0 1,0 426,0 a213,213 0 1,0 -426,0 Z M45,720 a85,85 0 1,0 170,0 a85,85 0 1,0 -170,0 Z" fill="#443355"/><path fill-rule="evenodd" d="M737,720 a213,213 0 1,0 426,0 a213,213 0 1,0 -426,0 Z M865,720 a85,85 0 1,0 170,0 a85,85 0 1,0 -170,0 Z" fill="#443355"/><path fill-rule="evenodd" d="M1202,720 a213,213 0 1,0 426,0 a213,213 0 1,0 -426,0 Z M1330,720 a85,85 0 1,0 170,0 a85,85 0 1,0 -170,0 Z" fill="#443355"/><path d="M210,222 V370 H166 Q152,366 150,344 V248 Q152,226 166,222 Z" fill="#85291f" /><path d="M215,235 V360 H256 Q270,356 272,334 V261 Q270,239 256,235 Z" fill="#800000" /><rect x="135" y="270" width="12" height="60" fill="#6e1a3c"/><polygon points="215.0,356.0 262.0,356.0 235.0,374.0 215.0,374.0" fill="#1c4a90"/><path d="M860,228 V345 H821 Q807,341 805,319 V254 Q807,232 821,228 Z" fill="#800000" /><path d="M866,220 V370 H909 Q923,366 925,344 V246 Q923,224 909,220 Z" fill="#85291f" /><rect x="928" y="278" width="12" height="62" fill="#b81004"/><polygon points="810.0,347.0 858.0,347.0 835.0,365.0" fill="#1c4a90"/><path d="M528,528 V640 H488 Q474,636 472,614 V554 Q474,532 488,528 Z" fill="#800000" /><path d="M533,512 V660 H574 Q588,656 590,634 V538 Q588,516 574,512 Z" fill="#85291f" /><rect x="593" y="572" width="12" height="68" fill="#6e1a3c"/><polygon points="485.0,525.0 527.0,525.0 515.0,508.0 500.0,508.0" fill="#1c4a90"/><path d="M130,650 V790 H88 Q74,786 72,764 V676 Q74,654 88,650 Z" fill="#85291f" /><path d="M137,672 V790 H174 Q188,786 190,764 V698 Q188,676 174,672 Z" fill="#800000" /><rect x="55" y="700" width="11" height="60" fill="#1a8060"/><polygon points="137.0,645.0 137.0,670.0 178.0,670.0" fill="#1c4a90"/><path d="M938,672 V785 H901 Q887,781 885,759 V698 Q887,676 901,672 Z" fill="#800000" /><path d="M943,652 V800 H987 Q1001,796 1003,774 V678 Q1001,656 987,652 Z" fill="#85291f" /><rect x="1005" y="712" width="12" height="63" fill="#b81004"/><polygon points="898.0,668.0 937.0,668.0 930.0,650.0 912.0,650.0" fill="#1c4a90"/><path d="M1403,672 V785 H1366 Q1352,781 1350,759 V698 Q1352,676 1366,672 Z" fill="#800000" /><path d="M1410,652 V800 H1452 Q1466,796 1468,774 V678 Q1466,656 1452,652 Z" fill="#85291f" /><rect x="1470" y="712" width="12" height="63" fill="#b81004"/><polygon points="1362.0,668.0 1402.0,668.0 1395.0,650.0 1377.0,650.0" fill="#1c4a90"/><rect x="456" y="172" width="189" height="190" rx="20" fill="#14ad06"/><circle cx="481" cy="199" r="4.04" fill="#000"/><circle cx="620" cy="199" r="4.04" fill="#000"/><circle cx="481" cy="336" r="4.04" fill="#000"/><circle cx="620" cy="336" r="4.04" fill="#000"/><polygon points="458.0,112.0 582.0,112.0 582.0,152.0 570.0,165.0 470.0,165.0 458.0,152.0" fill="#b81004"/><polygon points="305.0,78.0 450.0,78.0 450.0,222.0" fill="#6e1a3c"/><polygon points="558.0,78.0 765.0,78.0 662.0,185.0" fill="#6e1a3c"/><polygon points="965.0,78.0 1112.0,78.0 1112.0,222.0" fill="#6e1a3c"/><polygon points="1085.0,540.0 1290.0,540.0 1185.0,645.0" fill="#6e1a3c"/><polygon points="225.0,940.0 435.0,940.0 330.0,835.0" fill="#6e1a3c"/><polygon points="650.0,940.0 855.0,940.0 752.0,835.0" fill="#6e1a3c"/><polygon points="1162.0,790.0 1162.0,940.0 1310.0,940.0" fill="#6e1a3c"/><rect x="455" y="92" width="63" height="12" fill="#800080"/><rect x="428" y="252" width="12" height="133" fill="#a0a0a0"/><rect x="1085" y="252" width="15" height="133" fill="#a0a0a0"/><rect x="1185" y="672" width="12" height="133" fill="#a0a0a0"/><rect x="1400" y="88" width="128" height="10" fill="#800080"/><rect x="1305" y="310" width="127" height="12" fill="#800080"/><rect x="1305" y="325" width="127" height="12" fill="#800080"/><rect x="1103" y="305" width="57" height="30" fill="#7a4a8a"/><rect x="1125" y="505" width="60" height="10" fill="#b81004"/><rect x="1125" y="520" width="60" height="10" fill="#b81004"/><rect x="1025" y="455" width="17" height="60" fill="#b81004"/><rect x="1458" y="495" width="127" height="10" fill="#800080"/><rect x="440" y="928" width="130" height="10" fill="#a0a0a0"/><rect x="1497" y="928" width="128" height="10" fill="#800080"/><rect x="1105" y="880" width="30" height="58" fill="#7a4a8a"/><rect x="1140" y="875" width="12" height="63" fill="#b81004"/><rect x="50" y="495" width="60" height="10" fill="#1a8060"/><rect x="32" y="82" width="26" height="58" fill="#800000"/><rect x="632" y="800" width="10" height="58" fill="#b81004"/><polygon points="1123.0,82.0 1387.0,82.0 1395.0,90.0 1395.0,134.0 1387.0,142.0 1123.0,142.0 1115.0,134.0 1115.0,90.0" fill="#742e0e"/><circle cx="1145" cy="102" r="4.04" fill="#000"/><circle cx="1175" cy="102" r="4.04" fill="#000"/><circle cx="1205" cy="102" r="4.04" fill="#000"/><circle cx="1235" cy="102" r="4.04" fill="#000"/><polygon points="1613.9,122.7 1598.7,137.9 1577.3,137.9 1562.1,122.7 1562.1,101.3 1577.3,86.1 1598.7,86.1 1613.9,101.3" fill="#6b4c1a"/><polygon points="312.9,540.7 297.7,555.9 276.3,555.9 261.1,540.7 261.1,519.3 276.3,504.1 297.7,504.1 312.9,519.3" fill="#6b4c1a"/><polygon points="810.9,550.7 795.7,565.9 774.3,565.9 759.1,550.7 759.1,529.3 774.3,514.1 795.7,514.1 810.9,529.3" fill="#6b4c1a"/><polygon points="1615.9,903.7 1600.7,918.9 1579.3,918.9 1564.1,903.7 1564.1,882.3 1579.3,867.1 1600.7,867.1 1615.9,882.3" fill="#6b4c1a"/><polygon points="55.9,508.7 40.7,523.9 19.3,523.9 4.1,508.7 4.1,487.3 19.3,472.1 40.7,472.1 55.9,487.3" fill="#6b4c1a"/><polygon points="1115.0,143.0 1445.0,143.0 1445.0,100.0 1557.0,100.0 1557.0,143.0 1625.0,143.0 1625.0,297.0 1557.0,297.0 1557.0,340.0 1445.0,340.0 1445.0,297.0 1115.0,297.0" fill="#992211"/><polygon points="1125.0,340.0 1190.0,340.0 1190.0,297.0 1300.0,297.0 1300.0,340.0 1635.0,340.0 1635.0,490.0 1300.0,490.0 1300.0,535.0 1190.0,535.0 1190.0,490.0 1125.0,490.0" fill="#992211"/><polygon points="1075.0,392.0 1115.0,392.0 1115.0,532.0 1075.0,532.0 1058.0,515.0 1058.0,410.0" fill="#85291f"/><polygon points="351.0,797.0 622.0,797.0 628.0,803.0 628.0,854.0 622.0,860.0 351.0,860.0 345.0,854.0 345.0,803.0" fill="#8b6844"/><polygon points="416.0,865.0 664.0,865.0 670.0,871.0 670.0,916.0 664.0,922.0 416.0,922.0 410.0,916.0 410.0,871.0" fill="#932b00"/><polygon points="678.0,750.0 733.0,765.0 708.0,868.0 653.0,850.0" fill="#8a3215"/><path d="M352,720 h10 v30 h18 v8 h-14 v30 h18 v8 h-32 Z" fill="#8a8a20" /><path d="M1010,455 h10 v25 h-10 Z M995,478 h25 v8 h-25 Z" fill="#8a8a20" /><path d="M1520,510 h60 v10 h-25 v28 h-10 v-28 h-25 Z" fill="#8a8a20" /><path d="M1060,925 l25,-25 l8,8 l-25,25 Z" fill="#8a8a20" /><rect x="-529" y="73" width="2167" height="867" fill="none"/></g><g transform="translate(920,755) scale(0.22396)" stroke="#fff" stroke-width="4.599" stroke-linejoin="round"><polygon points="88.0,68.0 147.0,68.0 147.0,350.0 115.0,350.0 88.0,325.0" fill="#932b00"/><polygon points="82.0,340.0 245.0,503.0 82.0,503.0" fill="#6e1a3c"/><polygon points="82.0,512.0 240.0,512.0 82.0,668.0" fill="#6e1a3c"/><rect x="150" y="72" width="140" height="12" fill="#800080"/><rect x="155" y="92" width="60" height="10" fill="#932b00"/><rect x="165" y="108" width="50" height="10" fill="#932b00"/><rect x="155" y="125" width="60" height="13" fill="#932b00"/><rect x="150" y="205" width="12" height="65" fill="#932b00"/><rect x="152" y="335" width="11" height="65" fill="#932b00"/><rect x="490" y="65" width="65" height="13" fill="#932b00"/><rect x="585" y="68" width="12" height="72" fill="#6e1a3c"/><rect x="603" y="100" width="12" height="60" fill="#6e1a3c"/><rect x="620" y="140" width="12" height="60" fill="#6e1a3c"/><rect x="240" y="522" width="60" height="12" fill="#932b00"/><rect x="420" y="542" width="65" height="12" fill="#932b00"/><rect x="497" y="540" width="12" height="60" fill="#932b00"/><rect x="517" y="565" width="12" height="60" fill="#932b00"/><rect x="80" y="870" width="12" height="60" fill="#932b00"/><rect x="82" y="1005" width="140" height="10" fill="#800080"/><rect x="405" y="1000" width="63" height="12" fill="#932b00"/><rect x="565" y="785" width="12" height="65" fill="#932b00"/><rect x="583" y="790" width="12" height="60" fill="#932b00"/><rect x="548" y="858" width="142" height="10" fill="#800080"/><rect x="605" y="842" width="65" height="10" fill="#6e1a3c"/><rect x="698" y="858" width="62" height="10" fill="#6e1a3c"/><rect x="770" y="852" width="65" height="12" fill="#932b00"/><rect x="1907" y="68" width="13" height="82" fill="#6e1a3c"/><rect x="1925" y="70" width="10" height="70" fill="#6e1a3c"/><rect x="1945" y="92" width="65" height="12" fill="#1a8060"/><rect x="1945" y="112" width="65" height="12" fill="#6e1a3c"/><rect x="1945" y="130" width="65" height="12" fill="#6e1a3c"/><rect x="1910" y="148" width="60" height="8" fill="#6e1a3c"/><rect x="1357" y="235" width="140" height="10" fill="#800080"/><rect x="1697" y="235" width="140" height="10" fill="#800080"/><rect x="970" y="290" width="70" height="12" fill="#6e1a3c"/><rect x="995" y="462" width="12" height="63" fill="#1a8060"/><rect x="990" y="720" width="10" height="70" fill="#6e1a3c"/><rect x="935" y="798" width="60" height="12" fill="#1a8060"/><rect x="1985" y="880" width="10" height="65" fill="#1a8060"/><rect x="1165" y="250" width="10" height="68" fill="#6e1a3c"/><rect x="868" y="875" width="10" height="60" fill="#6e1a3c"/><path fill-rule="evenodd" d="M170,298 a234,234 0 1,0 468,0 a234,234 0 1,0 -468,0 Z M311,298 a93,93 0 1,0 186,0 a93,93 0 1,0 -186,0 Z" fill="#443355"/><path d="M392,232 V380 H358 Q332,372 330,345 V268 Q332,240 358,232 Z" fill="#b81004" /><path d="M398,238 V385 H440 Q463,378 465,350 V272 Q463,246 440,238 Z" fill="#b81004" /><rect x="470" y="290" width="12" height="70" fill="#b81004"/><path fill-rule="evenodd" d="M536,613 a234,234 0 1,0 468,0 a234,234 0 1,0 -468,0 Z M677,613 a93,93 0 1,0 186,0 a93,93 0 1,0 -186,0 Z" fill="#443355"/><path d="M758,547 V695 H724 Q698,687 696,660 V583 Q698,555 724,547 Z" fill="#b81004" /><path d="M764,553 V700 H806 Q829,693 831,665 V587 Q829,561 806,553 Z" fill="#b81004" /><rect x="836" y="605" width="12" height="70" fill="#b81004"/><path fill-rule="evenodd" d="M84,775 a234,234 0 1,0 468,0 a234,234 0 1,0 -468,0 Z M225,775 a93,93 0 1,0 186,0 a93,93 0 1,0 -186,0 Z" fill="#443355"/><path d="M306,709 V857 H272 Q246,849 244,822 V745 Q246,717 272,709 Z" fill="#b81004" /><path d="M312,715 V862 H354 Q377,855 379,827 V749 Q377,723 354,715 Z" fill="#b81004" /><rect x="384" y="767" width="12" height="70" fill="#b81004"/><rect x="643" y="66" width="205" height="206" rx="20" fill="#14ad06"/><circle cx="667" cy="90" r="4.46" fill="#000"/><circle cx="824" cy="90" r="4.46" fill="#000"/><circle cx="667" cy="248" r="4.46" fill="#000"/><circle cx="824" cy="248" r="4.46" fill="#000"/><rect x="855" y="66" width="205" height="206" rx="20" fill="#14ad06"/><circle cx="879" cy="90" r="4.46" fill="#000"/><circle cx="1036" cy="90" r="4.46" fill="#000"/><circle cx="879" cy="248" r="4.46" fill="#000"/><circle cx="1036" cy="248" r="4.46" fill="#000"/><rect x="2036" y="66" width="204" height="209" rx="20" fill="#14ad06"/><circle cx="2060" cy="90" r="4.46" fill="#000"/><circle cx="2216" cy="90" r="4.46" fill="#000"/><circle cx="2060" cy="251" r="4.46" fill="#000"/><circle cx="2216" cy="251" r="4.46" fill="#000"/><rect x="2247" y="66" width="206" height="209" rx="20" fill="#14ad06"/><circle cx="2271" cy="90" r="4.46" fill="#000"/><circle cx="2429" cy="90" r="4.46" fill="#000"/><circle cx="2271" cy="251" r="4.46" fill="#000"/><circle cx="2429" cy="251" r="4.46" fill="#000"/><rect x="2080" y="282" width="210" height="206" rx="20" fill="#14ad06"/><circle cx="2104" cy="306" r="4.46" fill="#000"/><circle cx="2266" cy="306" r="4.46" fill="#000"/><circle cx="2104" cy="464" r="4.46" fill="#000"/><circle cx="2266" cy="464" r="4.46" fill="#000"/><rect x="2036" y="592" width="204" height="208" rx="20" fill="#14ad06"/><circle cx="2060" cy="616" r="4.46" fill="#000"/><circle cx="2216" cy="616" r="4.46" fill="#000"/><circle cx="2060" cy="776" r="4.46" fill="#000"/><circle cx="2216" cy="776" r="4.46" fill="#000"/><rect x="2247" y="592" width="206" height="208" rx="20" fill="#14ad06"/><circle cx="2271" cy="616" r="4.46" fill="#000"/><circle cx="2429" cy="616" r="4.46" fill="#000"/><circle cx="2271" cy="776" r="4.46" fill="#000"/><circle cx="2429" cy="776" r="4.46" fill="#000"/><rect x="2030" y="808" width="207" height="205" rx="20" fill="#14ad06"/><circle cx="2054" cy="832" r="4.46" fill="#000"/><circle cx="2213" cy="832" r="4.46" fill="#000"/><circle cx="2054" cy="989" r="4.46" fill="#000"/><circle cx="2213" cy="989" r="4.46" fill="#000"/><rect x="2244" y="808" width="206" height="205" rx="20" fill="#14ad06"/><circle cx="2268" cy="832" r="4.46" fill="#000"/><circle cx="2426" cy="832" r="4.46" fill="#000"/><circle cx="2268" cy="989" r="4.46" fill="#000"/><circle cx="2426" cy="989" r="4.46" fill="#000"/><rect x="1068" y="66" width="89" height="242" fill="#000080"/><rect x="1165" y="66" width="240" height="91" fill="#000080"/><rect x="1411" y="66" width="241" height="91" fill="#000080"/><rect x="1660" y="66" width="242" height="91" fill="#000080"/><rect x="647" y="277" width="243" height="95" fill="#000080"/><rect x="2036" y="495" width="242" height="90" fill="#000080"/><polygon points="1175.0,165.0 1414.0,165.0 1424.0,175.0 1424.0,218.0 1414.0,228.0 1175.0,228.0 1165.0,218.0 1165.0,175.0" fill="#2419ab"/><polygon points="1440.0,165.0 1678.0,165.0 1688.0,175.0 1688.0,218.0 1678.0,228.0 1440.0,228.0 1430.0,218.0 1430.0,175.0" fill="#2419ab"/><polygon points="540.0,875.0 780.0,875.0 790.0,885.0 790.0,932.0 780.0,942.0 540.0,942.0 530.0,932.0 530.0,885.0" fill="#2419ab"/><polygon points="1703.0,165.0 1993.0,165.0 2003.0,175.0 2003.0,218.0 1993.0,228.0 1703.0,228.0 1693.0,218.0 1693.0,175.0" fill="#742e0e"/><circle cx="1725" cy="188" r="4.46" fill="#000"/><circle cx="1760" cy="188" r="4.46" fill="#000"/><circle cx="1793" cy="188" r="4.46" fill="#000"/><circle cx="1826" cy="188" r="4.46" fill="#000"/><polygon points="488.0,950.0 772.0,950.0 782.0,960.0 782.0,1003.0 772.0,1013.0 488.0,1013.0 478.0,1003.0 478.0,960.0" fill="#742e0e"/><circle cx="507" cy="972" r="4.46" fill="#000"/><circle cx="541" cy="972" r="4.46" fill="#000"/><circle cx="574" cy="972" r="4.46" fill="#000"/><circle cx="607" cy="972" r="4.46" fill="#000"/><polygon points="2303.0,282.0 2351.0,282.0 2359.0,290.0 2359.0,575.0 2351.0,583.0 2303.0,583.0 2295.0,575.0 2295.0,290.0" fill="#742e0e"/><circle cx="2320" cy="455" r="4.46" fill="#000"/><circle cx="2320" cy="488" r="4.46" fill="#000"/><circle cx="2320" cy="521" r="4.46" fill="#000"/><circle cx="2320" cy="554" r="4.46" fill="#000"/><polygon points="2374.0,282.0 2422.0,282.0 2430.0,290.0 2430.0,575.0 2422.0,583.0 2374.0,583.0 2366.0,575.0 2366.0,290.0" fill="#742e0e"/><circle cx="2391" cy="455" r="4.46" fill="#000"/><circle cx="2391" cy="488" r="4.46" fill="#000"/><circle cx="2391" cy="521" r="4.46" fill="#000"/><circle cx="2391" cy="554" r="4.46" fill="#000"/><polygon points="1357.0,253.0 1515.0,253.0 1515.0,295.0 1497.0,313.0 1375.0,313.0 1357.0,295.0" fill="#008000"/><polygon points="1697.0,253.0 1855.0,253.0 1855.0,295.0 1837.0,313.0 1715.0,313.0 1697.0,295.0" fill="#008000"/><polygon points="968.0,312.0 1130.0,312.0 1130.0,355.0 1112.0,375.0 968.0,375.0" fill="#008000"/><polygon points="968.0,385.0 1130.0,385.0 1130.0,425.0 1112.0,442.0 968.0,442.0" fill="#008000"/><polygon points="1183.0,950.0 1347.0,950.0 1347.0,990.0 1327.0,1013.0 1203.0,1013.0 1183.0,990.0" fill="#008000"/><polygon points="1527.0,950.0 1688.0,950.0 1688.0,990.0 1668.0,1013.0 1547.0,1013.0 1527.0,990.0" fill="#008000"/><polygon points="1865.0,950.0 2025.0,950.0 2025.0,990.0 2005.0,1013.0 1885.0,1013.0 1865.0,990.0" fill="#008000"/><polygon points="915.0,278.0 965.0,278.0 965.0,418.0 915.0,418.0 900.0,400.0 900.0,295.0" fill="#b81004"/><polygon points="800.0,870.0 840.0,870.0 858.0,890.0 858.0,1013.0 800.0,1013.0" fill="#b81004"/><polygon points="865.0,950.0 1005.0,950.0 1005.0,1000.0 990.0,1013.0 865.0,1013.0" fill="#b81004"/><polygon points="1400.0,322.0 1450.0,322.0 1465.0,337.0 1465.0,425.0 1450.0,440.0 1400.0,440.0" fill="#85291f"/><polygon points="1740.0,322.0 1790.0,322.0 1805.0,337.0 1805.0,425.0 1790.0,440.0 1740.0,440.0" fill="#85291f"/><polygon points="1232.0,820.0 1277.0,820.0 1295.0,845.0 1295.0,925.0 1282.0,945.0 1232.0,945.0" fill="#85291f"/><polygon points="1570.0,820.0 1615.0,820.0 1633.0,845.0 1633.0,925.0 1620.0,945.0 1570.0,945.0" fill="#85291f"/><polygon points="1910.0,820.0 1955.0,820.0 1973.0,845.0 1973.0,925.0 1960.0,945.0 1910.0,945.0" fill="#85291f"/><polygon points="900.0,820.0 945.0,820.0 945.0,945.0 900.0,945.0 885.0,925.0 885.0,835.0" fill="#85291f"/><polygon points="1180.0,243.0 1348.0,243.0 1348.0,322.0 1393.0,322.0 1393.0,440.0 1348.0,440.0 1348.0,810.0 1180.0,810.0 1180.0,440.0 1140.0,440.0 1140.0,322.0 1180.0,322.0" fill="#992211"/><polygon points="1523.0,243.0 1691.0,243.0 1691.0,322.0 1736.0,322.0 1736.0,440.0 1691.0,440.0 1691.0,810.0 1523.0,810.0 1523.0,440.0 1483.0,440.0 1483.0,322.0 1523.0,322.0" fill="#992211"/><polygon points="1862.0,243.0 2030.0,243.0 2030.0,322.0 2075.0,322.0 2075.0,440.0 2030.0,440.0 2030.0,810.0 1862.0,810.0 1862.0,440.0 1822.0,440.0 1822.0,322.0 1862.0,322.0" fill="#992211"/><polygon points="1012.0,450.0 1178.0,450.0 1178.0,818.0 1225.0,818.0 1225.0,945.0 1178.0,945.0 1178.0,1013.0 1012.0,1013.0 1012.0,945.0 968.0,945.0 968.0,818.0 1012.0,818.0" fill="#992211"/><polygon points="1355.0,450.0 1521.0,450.0 1521.0,818.0 1568.0,818.0 1568.0,945.0 1521.0,945.0 1521.0,1013.0 1355.0,1013.0 1355.0,945.0 1311.0,945.0 1311.0,818.0 1355.0,818.0" fill="#992211"/><polygon points="1695.0,450.0 1861.0,450.0 1861.0,818.0 1908.0,818.0 1908.0,945.0 1861.0,945.0 1861.0,1013.0 1695.0,1013.0 1695.0,945.0 1651.0,945.0 1651.0,818.0 1695.0,818.0" fill="#992211"/><polygon points="138.6,979.9 121.9,996.6 98.1,996.6 81.4,979.9 81.4,956.1 98.1,939.4 121.9,939.4 138.6,956.1" fill="#6b4c1a"/><rect x="78" y="60" width="2395" height="958" fill="none"/></g><g transform="translate(1960,755) scale(0.22396)" stroke="#fff" stroke-width="4.599" stroke-linejoin="round"><polygon points="80.0,68.0 344.0,68.0 352.0,76.0 352.0,125.0 344.0,133.0 80.0,133.0 72.0,125.0 72.0,76.0" fill="#91052c"/><polygon points="370.0,68.0 634.0,68.0 642.0,76.0 642.0,125.0 634.0,133.0 370.0,133.0 362.0,125.0 362.0,76.0" fill="#91052c"/><polygon points="660.0,68.0 927.0,68.0 935.0,76.0 935.0,125.0 927.0,133.0 660.0,133.0 652.0,125.0 652.0,76.0" fill="#91052c"/><polygon points="80.0,140.0 344.0,140.0 352.0,148.0 352.0,197.0 344.0,205.0 80.0,205.0 72.0,197.0 72.0,148.0" fill="#91052c"/><polygon points="370.0,140.0 634.0,140.0 642.0,148.0 642.0,197.0 634.0,205.0 370.0,205.0 362.0,197.0 362.0,148.0" fill="#91052c"/><polygon points="660.0,140.0 927.0,140.0 935.0,148.0 935.0,197.0 927.0,205.0 660.0,205.0 652.0,197.0 652.0,148.0" fill="#91052c"/><polygon points="950.0,82.0 1217.0,82.0 1225.0,90.0 1225.0,135.0 1217.0,143.0 950.0,143.0 942.0,135.0 942.0,90.0" fill="#932b00"/><polygon points="1243.0,82.0 1507.0,82.0 1515.0,90.0 1515.0,135.0 1507.0,143.0 1243.0,143.0 1235.0,135.0 1235.0,90.0" fill="#932b00"/><polygon points="1535.0,82.0 1800.0,82.0 1808.0,90.0 1808.0,135.0 1800.0,143.0 1535.0,143.0 1527.0,135.0 1527.0,90.0" fill="#932b00"/><polygon points="950.0,152.0 1217.0,152.0 1225.0,160.0 1225.0,205.0 1217.0,213.0 950.0,213.0 942.0,205.0 942.0,160.0" fill="#932b00"/><polygon points="1243.0,152.0 1507.0,152.0 1515.0,160.0 1515.0,205.0 1507.0,213.0 1243.0,213.0 1235.0,205.0 1235.0,160.0" fill="#932b00"/><polygon points="1535.0,152.0 1800.0,152.0 1808.0,160.0 1808.0,205.0 1800.0,213.0 1535.0,213.0 1527.0,205.0 1527.0,160.0" fill="#932b00"/><polygon points="72.0,210.0 325.0,210.0 325.0,260.0 313.0,272.0 84.0,272.0 72.0,260.0" fill="#864045"/><polygon points="335.0,210.0 593.0,210.0 593.0,260.0 581.0,272.0 347.0,272.0 335.0,260.0" fill="#864045"/><circle cx="152" cy="247.0" r="4.46" fill="#000"/><circle cx="186" cy="247.0" r="4.46" fill="#000"/><circle cx="220" cy="247.0" r="4.46" fill="#000"/><circle cx="254" cy="247.0" r="4.46" fill="#000"/><circle cx="288" cy="247.0" r="4.46" fill="#000"/><circle cx="418" cy="244.0" r="4.46" fill="#000"/><circle cx="451" cy="244.0" r="4.46" fill="#000"/><circle cx="484" cy="244.0" r="4.46" fill="#000"/><circle cx="517" cy="244.0" r="4.46" fill="#000"/><circle cx="550" cy="244.0" r="4.46" fill="#000"/><polygon points="600.0,210.0 845.0,210.0 857.0,222.0 857.0,270.0 600.0,270.0" fill="#2419ab"/><polygon points="72.0,281.5 325.0,281.5 325.0,331.5 313.0,343.5 84.0,343.5 72.0,331.5" fill="#864045"/><polygon points="335.0,281.5 593.0,281.5 593.0,331.5 581.0,343.5 347.0,343.5 335.0,331.5" fill="#864045"/><circle cx="152" cy="318.5" r="4.46" fill="#000"/><circle cx="186" cy="318.5" r="4.46" fill="#000"/><circle cx="220" cy="318.5" r="4.46" fill="#000"/><circle cx="254" cy="318.5" r="4.46" fill="#000"/><circle cx="288" cy="318.5" r="4.46" fill="#000"/><circle cx="418" cy="315.5" r="4.46" fill="#000"/><circle cx="451" cy="315.5" r="4.46" fill="#000"/><circle cx="484" cy="315.5" r="4.46" fill="#000"/><circle cx="517" cy="315.5" r="4.46" fill="#000"/><circle cx="550" cy="315.5" r="4.46" fill="#000"/><polygon points="600.0,281.5 845.0,281.5 857.0,293.5 857.0,341.5 600.0,341.5" fill="#2419ab"/><polygon points="72.0,353.0 325.0,353.0 325.0,403.0 313.0,415.0 84.0,415.0 72.0,403.0" fill="#864045"/><polygon points="335.0,353.0 593.0,353.0 593.0,403.0 581.0,415.0 347.0,415.0 335.0,403.0" fill="#864045"/><circle cx="152" cy="390.0" r="4.46" fill="#000"/><circle cx="186" cy="390.0" r="4.46" fill="#000"/><circle cx="220" cy="390.0" r="4.46" fill="#000"/><circle cx="254" cy="390.0" r="4.46" fill="#000"/><circle cx="288" cy="390.0" r="4.46" fill="#000"/><circle cx="418" cy="387.0" r="4.46" fill="#000"/><circle cx="451" cy="387.0" r="4.46" fill="#000"/><circle cx="484" cy="387.0" r="4.46" fill="#000"/><circle cx="517" cy="387.0" r="4.46" fill="#000"/><circle cx="550" cy="387.0" r="4.46" fill="#000"/><polygon points="600.0,353.0 845.0,353.0 857.0,365.0 857.0,413.0 600.0,413.0" fill="#2419ab"/><polygon points="72.0,424.5 325.0,424.5 325.0,474.5 313.0,486.5 84.0,486.5 72.0,474.5" fill="#864045"/><polygon points="335.0,424.5 593.0,424.5 593.0,474.5 581.0,486.5 347.0,486.5 335.0,474.5" fill="#864045"/><circle cx="152" cy="461.5" r="4.46" fill="#000"/><circle cx="186" cy="461.5" r="4.46" fill="#000"/><circle cx="220" cy="461.5" r="4.46" fill="#000"/><circle cx="254" cy="461.5" r="4.46" fill="#000"/><circle cx="288" cy="461.5" r="4.46" fill="#000"/><circle cx="418" cy="458.5" r="4.46" fill="#000"/><circle cx="451" cy="458.5" r="4.46" fill="#000"/><circle cx="484" cy="458.5" r="4.46" fill="#000"/><circle cx="517" cy="458.5" r="4.46" fill="#000"/><circle cx="550" cy="458.5" r="4.46" fill="#000"/><polygon points="600.0,424.5 845.0,424.5 857.0,436.5 857.0,484.5 600.0,484.5" fill="#2419ab"/><polygon points="873.0,220.0 917.0,220.0 925.0,228.0 925.0,480.0 917.0,488.0 873.0,488.0 865.0,480.0 865.0,228.0" fill="#b81004"/><polygon points="941.0,220.0 985.0,220.0 993.0,228.0 993.0,480.0 985.0,488.0 941.0,488.0 933.0,480.0 933.0,228.0" fill="#b81004"/><polygon points="1009.0,220.0 1053.0,220.0 1061.0,228.0 1061.0,480.0 1053.0,488.0 1009.0,488.0 1001.0,480.0 1001.0,228.0" fill="#b81004"/><polygon points="1077.0,220.0 1121.0,220.0 1129.0,228.0 1129.0,480.0 1121.0,488.0 1077.0,488.0 1069.0,480.0 1069.0,228.0" fill="#b81004"/><polygon points="1145.0,220.0 1189.0,220.0 1197.0,228.0 1197.0,480.0 1189.0,488.0 1145.0,488.0 1137.0,480.0 1137.0,228.0" fill="#b81004"/><polygon points="1213.0,220.0 1257.0,220.0 1265.0,228.0 1265.0,480.0 1257.0,488.0 1213.0,488.0 1205.0,480.0 1205.0,228.0" fill="#b81004"/><polygon points="1281.0,220.0 1325.0,220.0 1333.0,228.0 1333.0,480.0 1325.0,488.0 1281.0,488.0 1273.0,480.0 1273.0,228.0" fill="#a21b10"/><polygon points="1349.0,220.0 1393.0,220.0 1401.0,228.0 1401.0,480.0 1393.0,488.0 1349.0,488.0 1341.0,480.0 1341.0,228.0" fill="#a21b10"/><polygon points="1417.0,220.0 1461.0,220.0 1469.0,228.0 1469.0,480.0 1461.0,488.0 1417.0,488.0 1409.0,480.0 1409.0,228.0" fill="#a21b10"/><polygon points="1485.0,220.0 1529.0,220.0 1537.0,228.0 1537.0,480.0 1529.0,488.0 1485.0,488.0 1477.0,480.0 1477.0,228.0" fill="#a21b10"/><polygon points="1553.0,220.0 1597.0,220.0 1605.0,228.0 1605.0,480.0 1597.0,488.0 1553.0,488.0 1545.0,480.0 1545.0,228.0" fill="#a21b10"/><polygon points="1621.0,220.0 1665.0,220.0 1673.0,228.0 1673.0,480.0 1665.0,488.0 1621.0,488.0 1613.0,480.0 1613.0,228.0" fill="#a21b10"/><polygon points="1689.0,220.0 1733.0,220.0 1741.0,228.0 1741.0,480.0 1733.0,488.0 1689.0,488.0 1681.0,480.0 1681.0,228.0" fill="#a21b10"/><polygon points="1757.0,220.0 1801.0,220.0 1809.0,228.0 1809.0,480.0 1801.0,488.0 1757.0,488.0 1749.0,480.0 1749.0,228.0" fill="#a21b10"/><polygon points="80.0,497.0 325.0,497.0 333.0,505.0 333.0,545.0 325.0,553.0 80.0,553.0 72.0,545.0 72.0,505.0" fill="#b81004"/><polygon points="351.0,497.0 600.0,497.0 608.0,505.0 608.0,545.0 600.0,553.0 351.0,553.0 343.0,545.0 343.0,505.0" fill="#b81004"/><polygon points="626.0,497.0 875.0,497.0 883.0,505.0 883.0,545.0 875.0,553.0 626.0,553.0 618.0,545.0 618.0,505.0" fill="#b81004"/><polygon points="900.0,497.0 1147.0,497.0 1155.0,505.0 1155.0,545.0 1147.0,553.0 900.0,553.0 892.0,545.0 892.0,505.0" fill="#b81004"/><polygon points="1173.0,497.0 1405.0,497.0 1413.0,505.0 1413.0,545.0 1405.0,553.0 1173.0,553.0 1165.0,545.0 1165.0,505.0" fill="#a21b10"/><polygon points="1428.0,497.0 1660.0,497.0 1668.0,505.0 1668.0,545.0 1660.0,553.0 1428.0,553.0 1420.0,545.0 1420.0,505.0" fill="#a21b10"/><polygon points="1683.0,497.0 1792.0,497.0 1800.0,505.0 1800.0,545.0 1792.0,553.0 1683.0,553.0 1675.0,545.0 1675.0,505.0" fill="#85291f"/><polygon points="80.0,952.0 344.0,952.0 352.0,960.0 352.0,1005.0 344.0,1013.0 80.0,1013.0 72.0,1005.0 72.0,960.0" fill="#91052c"/><polygon points="370.0,952.0 634.0,952.0 642.0,960.0 642.0,1005.0 634.0,1013.0 370.0,1013.0 362.0,1005.0 362.0,960.0" fill="#91052c"/><polygon points="660.0,952.0 927.0,952.0 935.0,960.0 935.0,1005.0 927.0,1013.0 660.0,1013.0 652.0,1005.0 652.0,960.0" fill="#91052c"/><polygon points="950.0,952.0 1217.0,952.0 1225.0,960.0 1225.0,1005.0 1217.0,1013.0 950.0,1013.0 942.0,1005.0 942.0,960.0" fill="#91052c"/><polygon points="1243.0,952.0 1507.0,952.0 1515.0,960.0 1515.0,1005.0 1507.0,1013.0 1243.0,1013.0 1235.0,1005.0 1235.0,960.0" fill="#932b00"/><polygon points="1535.0,952.0 1800.0,952.0 1808.0,960.0 1808.0,1005.0 1800.0,1013.0 1535.0,1013.0 1527.0,1005.0 1527.0,960.0" fill="#932b00"/><polygon points="78.0,572.0 120.0,572.0 128.0,580.0 128.0,814.0 120.0,822.0 78.0,822.0 70.0,814.0 70.0,580.0" fill="#a21b10"/><polygon points="1745.0,688.0 1812.0,688.0 1812.0,945.0 1760.0,945.0 1745.0,925.0" fill="#2419ab"/><rect x="140" y="590" width="60" height="10" fill="#3c4444"/><rect x="140" y="605" width="60" height="10" fill="#3c4444"/><rect x="140" y="618" width="60" height="10" fill="#3c4444"/><rect x="210" y="565" width="60" height="12" fill="#3c4444"/><rect x="478" y="562" width="62" height="12" fill="#3c4444"/><rect x="500" y="578" width="62" height="12" fill="#3c4444"/><rect x="140" y="640" width="10" height="60" fill="#3c4444"/><rect x="340" y="708" width="62" height="12" fill="#3c4444"/><rect x="198" y="780" width="64" height="14" fill="#3c4444"/><rect x="320" y="932" width="65" height="12" fill="#3c4444"/><rect x="515" y="780" width="65" height="14" fill="#6e2a1e"/><rect x="640" y="932" width="60" height="12" fill="#6e2a1e"/><path d="M464.7,749.7 A235.7755775577558,235.7755775577558 0 0 1 74.8,883.9 L170.9,777.2 A92.09983498349835,92.09983498349835 0 0 0 323.2,724.7 Z" fill="#c80000"/><path d="M140.3,756.2 A235.7755775577558,235.7755775577558 0 0 1 530.3,621.9 L434.2,728.7 A92.09983498349835,92.09983498349835 0 0 0 281.8,781.1 Z" fill="#c80000"/><path d="M784.2,749.7 A235.7755775577558,235.7755775577558 0 0 1 394.2,883.9 L490.4,777.2 A92.09983498349835,92.09983498349835 0 0 0 642.7,724.7 Z" fill="#c80000"/><path d="M459.8,756.2 A235.7755775577558,235.7755775577558 0 0 1 849.8,621.9 L753.6,728.7 A92.09983498349835,92.09983498349835 0 0 0 601.3,781.1 Z" fill="#c80000"/><path d="M1103.7,749.7 A235.7755775577558,235.7755775577558 0 0 1 713.7,883.9 L809.9,777.2 A92.09983498349835,92.09983498349835 0 0 0 962.2,724.7 Z" fill="#c80000"/><path d="M779.3,756.2 A235.7755775577558,235.7755775577558 0 0 1 1169.2,621.9 L1073.1,728.7 A92.09983498349835,92.09983498349835 0 0 0 920.8,781.1 Z" fill="#c80000"/><path d="M1423.2,749.7 A235.7755775577558,235.7755775577558 0 0 1 1033.2,883.9 L1129.3,777.2 A92.09983498349835,92.09983498349835 0 0 0 1281.7,724.7 Z" fill="#c80000"/><path d="M1098.8,756.2 A235.7755775577558,235.7755775577558 0 0 1 1488.7,621.9 L1392.6,728.7 A92.09983498349835,92.09983498349835 0 0 0 1240.3,781.1 Z" fill="#c80000"/><path d="M1742.6,749.7 A235.7755775577558,235.7755775577558 0 0 1 1352.7,883.9 L1448.8,777.2 A92.09983498349835,92.09983498349835 0 0 0 1601.1,724.7 Z" fill="#c80000"/><path d="M1418.2,756.2 A235.7755775577558,235.7755775577558 0 0 1 1808.2,621.9 L1712.1,728.7 A92.09983498349835,92.09983498349835 0 0 0 1559.7,781.1 Z" fill="#c80000"/><polygon points="1826.0,72.0 1875.0,72.0 1883.0,80.0 1883.0,375.0 1875.0,383.0 1826.0,383.0 1818.0,375.0 1818.0,80.0" fill="#962a0c"/><circle cx="1847.5" cy="165" r="4.46" fill="#000"/><circle cx="1847.5" cy="201" r="4.46" fill="#000"/><circle cx="1847.5" cy="237" r="4.46" fill="#000"/><circle cx="1847.5" cy="273" r="4.46" fill="#000"/><circle cx="1847.5" cy="309" r="4.46" fill="#000"/><circle cx="1847.5" cy="345" r="4.46" fill="#000"/><polygon points="1826.0,392.0 1875.0,392.0 1883.0,400.0 1883.0,689.0 1875.0,697.0 1826.0,697.0 1818.0,689.0 1818.0,400.0" fill="#962a0c"/><circle cx="1847.5" cy="432" r="4.46" fill="#000"/><circle cx="1847.5" cy="468" r="4.46" fill="#000"/><circle cx="1847.5" cy="504" r="4.46" fill="#000"/><circle cx="1847.5" cy="540" r="4.46" fill="#000"/><circle cx="1847.5" cy="576" r="4.46" fill="#000"/><circle cx="1847.5" cy="612" r="4.46" fill="#000"/><polygon points="1826.0,705.0 1875.0,705.0 1883.0,713.0 1883.0,1005.0 1875.0,1013.0 1826.0,1013.0 1818.0,1005.0 1818.0,713.0" fill="#962a0c"/><circle cx="1847.5" cy="745" r="4.46" fill="#000"/><circle cx="1847.5" cy="781" r="4.46" fill="#000"/><circle cx="1847.5" cy="817" r="4.46" fill="#000"/><circle cx="1847.5" cy="853" r="4.46" fill="#000"/><circle cx="1847.5" cy="889" r="4.46" fill="#000"/><circle cx="1847.5" cy="925" r="4.46" fill="#000"/><polygon points="1898.0,72.0 1944.0,72.0 1952.0,80.0 1952.0,375.0 1944.0,383.0 1898.0,383.0 1890.0,375.0 1890.0,80.0" fill="#962a0c"/><circle cx="1918.0" cy="165" r="4.46" fill="#000"/><circle cx="1918.0" cy="201" r="4.46" fill="#000"/><circle cx="1918.0" cy="237" r="4.46" fill="#000"/><circle cx="1918.0" cy="273" r="4.46" fill="#000"/><circle cx="1918.0" cy="309" r="4.46" fill="#000"/><circle cx="1918.0" cy="345" r="4.46" fill="#000"/><polygon points="1898.0,392.0 1944.0,392.0 1952.0,400.0 1952.0,689.0 1944.0,697.0 1898.0,697.0 1890.0,689.0 1890.0,400.0" fill="#962a0c"/><circle cx="1918.0" cy="432" r="4.46" fill="#000"/><circle cx="1918.0" cy="468" r="4.46" fill="#000"/><circle cx="1918.0" cy="504" r="4.46" fill="#000"/><circle cx="1918.0" cy="540" r="4.46" fill="#000"/><circle cx="1918.0" cy="576" r="4.46" fill="#000"/><circle cx="1918.0" cy="612" r="4.46" fill="#000"/><polygon points="1898.0,705.0 1944.0,705.0 1952.0,713.0 1952.0,1005.0 1944.0,1013.0 1898.0,1013.0 1890.0,1005.0 1890.0,713.0" fill="#962a0c"/><circle cx="1918.0" cy="745" r="4.46" fill="#000"/><circle cx="1918.0" cy="781" r="4.46" fill="#000"/><circle cx="1918.0" cy="817" r="4.46" fill="#000"/><circle cx="1918.0" cy="853" r="4.46" fill="#000"/><circle cx="1918.0" cy="889" r="4.46" fill="#000"/><circle cx="1918.0" cy="925" r="4.46" fill="#000"/><polygon points="1968.0,72.0 2014.0,72.0 2022.0,80.0 2022.0,375.0 2014.0,383.0 1968.0,383.0 1960.0,375.0 1960.0,80.0" fill="#268015"/><circle cx="1994.0" cy="114" r="4.46" fill="#000"/><circle cx="1994.0" cy="148" r="4.46" fill="#000"/><circle cx="1994.0" cy="182" r="4.46" fill="#000"/><circle cx="1994.0" cy="216" r="4.46" fill="#000"/><circle cx="1994.0" cy="250" r="4.46" fill="#000"/><polygon points="1968.0,392.0 2014.0,392.0 2022.0,400.0 2022.0,689.0 2014.0,697.0 1968.0,697.0 1960.0,689.0 1960.0,400.0" fill="#268015"/><circle cx="1994.0" cy="434" r="4.46" fill="#000"/><circle cx="1994.0" cy="468" r="4.46" fill="#000"/><circle cx="1994.0" cy="502" r="4.46" fill="#000"/><circle cx="1994.0" cy="536" r="4.46" fill="#000"/><circle cx="1994.0" cy="570" r="4.46" fill="#000"/><polygon points="1968.0,705.0 2014.0,705.0 2022.0,713.0 2022.0,1005.0 2014.0,1013.0 1968.0,1013.0 1960.0,1005.0 1960.0,713.0" fill="#268015"/><circle cx="1994.0" cy="747" r="4.46" fill="#000"/><circle cx="1994.0" cy="781" r="4.46" fill="#000"/><circle cx="1994.0" cy="815" r="4.46" fill="#000"/><circle cx="1994.0" cy="849" r="4.46" fill="#000"/><circle cx="1994.0" cy="883" r="4.46" fill="#000"/><polygon points="2038.0,72.0 2087.0,72.0 2095.0,80.0 2095.0,375.0 2087.0,383.0 2038.0,383.0 2030.0,375.0 2030.0,80.0" fill="#268015"/><circle cx="2065.5" cy="114" r="4.46" fill="#000"/><circle cx="2065.5" cy="148" r="4.46" fill="#000"/><circle cx="2065.5" cy="182" r="4.46" fill="#000"/><circle cx="2065.5" cy="216" r="4.46" fill="#000"/><circle cx="2065.5" cy="250" r="4.46" fill="#000"/><polygon points="2038.0,392.0 2087.0,392.0 2095.0,400.0 2095.0,689.0 2087.0,697.0 2038.0,697.0 2030.0,689.0 2030.0,400.0" fill="#268015"/><circle cx="2065.5" cy="434" r="4.46" fill="#000"/><circle cx="2065.5" cy="468" r="4.46" fill="#000"/><circle cx="2065.5" cy="502" r="4.46" fill="#000"/><circle cx="2065.5" cy="536" r="4.46" fill="#000"/><circle cx="2065.5" cy="570" r="4.46" fill="#000"/><polygon points="2038.0,705.0 2087.0,705.0 2095.0,713.0 2095.0,1005.0 2087.0,1013.0 2038.0,1013.0 2030.0,1005.0 2030.0,713.0" fill="#268015"/><circle cx="2065.5" cy="747" r="4.46" fill="#000"/><circle cx="2065.5" cy="781" r="4.46" fill="#000"/><circle cx="2065.5" cy="815" r="4.46" fill="#000"/><circle cx="2065.5" cy="849" r="4.46" fill="#000"/><circle cx="2065.5" cy="883" r="4.46" fill="#000"/><polygon points="2111.0,72.0 2159.0,72.0 2167.0,80.0 2167.0,375.0 2159.0,383.0 2111.0,383.0 2103.0,375.0 2103.0,80.0" fill="#91052c"/><polygon points="2111.0,392.0 2159.0,392.0 2167.0,400.0 2167.0,689.0 2159.0,697.0 2111.0,697.0 2103.0,689.0 2103.0,400.0" fill="#8b6844"/><polygon points="2111.0,705.0 2159.0,705.0 2167.0,713.0 2167.0,1005.0 2159.0,1013.0 2111.0,1013.0 2103.0,1005.0 2103.0,713.0" fill="#8b6844"/><polygon points="2183.0,72.0 2230.0,72.0 2238.0,80.0 2238.0,375.0 2230.0,383.0 2183.0,383.0 2175.0,375.0 2175.0,80.0" fill="#91052c"/><polygon points="2183.0,392.0 2230.0,392.0 2238.0,400.0 2238.0,689.0 2230.0,697.0 2183.0,697.0 2175.0,689.0 2175.0,400.0" fill="#91052c"/><polygon points="2183.0,705.0 2230.0,705.0 2238.0,713.0 2238.0,1005.0 2230.0,1013.0 2183.0,1013.0 2175.0,1005.0 2175.0,713.0" fill="#91052c"/><polygon points="2253.0,72.0 2300.0,72.0 2308.0,80.0 2308.0,375.0 2300.0,383.0 2253.0,383.0 2245.0,375.0 2245.0,80.0" fill="#91052c"/><polygon points="2253.0,392.0 2300.0,392.0 2308.0,400.0 2308.0,689.0 2300.0,697.0 2253.0,697.0 2245.0,689.0 2245.0,400.0" fill="#91052c"/><polygon points="2253.0,705.0 2300.0,705.0 2308.0,713.0 2308.0,1005.0 2300.0,1013.0 2253.0,1013.0 2245.0,1005.0 2245.0,713.0" fill="#91052c"/><polygon points="2326.0,72.0 2372.0,72.0 2380.0,80.0 2380.0,375.0 2372.0,383.0 2326.0,383.0 2318.0,375.0 2318.0,80.0" fill="#91052c"/><polygon points="2326.0,392.0 2372.0,392.0 2380.0,400.0 2380.0,689.0 2372.0,697.0 2326.0,697.0 2318.0,689.0 2318.0,400.0" fill="#91052c"/><polygon points="2326.0,705.0 2372.0,705.0 2380.0,713.0 2380.0,1005.0 2372.0,1013.0 2326.0,1013.0 2318.0,1005.0 2318.0,713.0" fill="#91052c"/><polygon points="2393.0,72.0 2444.0,72.0 2452.0,80.0 2452.0,375.0 2444.0,383.0 2393.0,383.0 2385.0,375.0 2385.0,80.0" fill="#962a0c"/><circle cx="2422.5" cy="117" r="4.46" fill="#000"/><circle cx="2422.5" cy="153" r="4.46" fill="#000"/><circle cx="2422.5" cy="189" r="4.46" fill="#000"/><circle cx="2422.5" cy="225" r="4.46" fill="#000"/><circle cx="2422.5" cy="261" r="4.46" fill="#000"/><circle cx="2422.5" cy="297" r="4.46" fill="#000"/><polygon points="2393.0,392.0 2444.0,392.0 2452.0,400.0 2452.0,689.0 2444.0,697.0 2393.0,697.0 2385.0,689.0 2385.0,400.0" fill="#962a0c"/><circle cx="2422.5" cy="437" r="4.46" fill="#000"/><circle cx="2422.5" cy="473" r="4.46" fill="#000"/><circle cx="2422.5" cy="509" r="4.46" fill="#000"/><circle cx="2422.5" cy="545" r="4.46" fill="#000"/><circle cx="2422.5" cy="581" r="4.46" fill="#000"/><circle cx="2422.5" cy="617" r="4.46" fill="#000"/><polygon points="2393.0,705.0 2444.0,705.0 2452.0,713.0 2452.0,1005.0 2444.0,1013.0 2393.0,1013.0 2385.0,1005.0 2385.0,713.0" fill="#962a0c"/><circle cx="2422.5" cy="750" r="4.46" fill="#000"/><circle cx="2422.5" cy="786" r="4.46" fill="#000"/><circle cx="2422.5" cy="822" r="4.46" fill="#000"/><circle cx="2422.5" cy="858" r="4.46" fill="#000"/><circle cx="2422.5" cy="894" r="4.46" fill="#000"/><circle cx="2422.5" cy="930" r="4.46" fill="#000"/><rect x="65" y="60" width="2394" height="958" fill="none"/></g></g><path d="M-303.5,504.5L-303.5,1249.0M639.5,504.5L639.5,1249.0M733.5,540.7L733.5,1249.0M1676.5,540.7L1676.5,1249.0M1771.5,558.7L1771.5,1249.0M2714.5,558.7L2714.5,1249.0M1601.5,491.0L1601.5,1244.0M-303.2,504.5L639.4,504.5M-303.2,522.5L639.4,522.5M-303.2,540.5L639.4,540.5M-303.2,558.5L639.4,558.5M-303.2,576.5L639.4,576.5M-303.2,593.5L639.4,593.5M-303.2,611.5L639.4,611.5M-303.2,629.5L639.4,629.5M-303.2,647.5L639.4,647.5M-303.2,665.5L639.4,665.5M-303.2,683.5L639.4,683.5M-303.2,701.5L639.4,701.5M-303.2,719.5L639.4,719.5M-303.5,504.4L-303.5,719.2M-268.5,504.4L-268.5,719.2M-67.5,504.4L-67.5,719.2M132.5,504.4L132.5,719.2M167.5,504.4L167.5,719.2M203.5,504.4L203.5,719.2M403.5,504.4L403.5,719.2M603.5,504.4L603.5,719.2M639.5,504.4L639.5,719.2M733.8,540.5L1676.4,540.5M733.8,558.5L1676.4,558.5M733.8,576.5L1676.4,576.5M733.8,593.5L1676.4,593.5M733.8,611.5L1676.4,611.5M733.8,629.5L1676.4,629.5M733.8,647.5L1676.4,647.5M733.8,665.5L1676.4,665.5M733.8,683.5L1676.4,683.5M733.8,701.5L1676.4,701.5M733.8,719.5L1676.4,719.5M733.5,540.2L733.5,719.2M768.5,540.2L768.5,719.2M969.5,540.2L969.5,719.2M1170.5,540.2L1170.5,719.2M1204.5,540.2L1204.5,719.2M1240.5,540.2L1240.5,719.2M1440.5,540.2L1440.5,719.2M1640.5,540.2L1640.5,719.2M1676.5,540.2L1676.5,719.2M1771.6,558.5L2714.2,558.5M1771.6,576.5L2714.2,576.5M1771.6,593.5L2714.2,593.5M1771.6,611.5L2714.2,611.5M1771.6,629.5L2714.2,629.5M1771.6,647.5L2714.2,647.5M1771.6,665.5L2714.2,665.5M1771.6,683.5L2714.2,683.5M1771.6,701.5L2714.2,701.5M1771.6,719.5L2714.2,719.5M1771.5,558.1L1771.5,719.2M1806.5,558.1L1806.5,719.2M2007.5,558.1L2007.5,719.2M2207.5,558.1L2207.5,719.2M2242.5,558.1L2242.5,719.2M2278.5,558.1L2278.5,719.2M2478.5,558.1L2478.5,719.2M2678.5,558.1L2678.5,719.2M2714.5,558.1L2714.5,719.2M2244.5,558.1L2244.5,719.2M-303.2,1017.5L639.4,1017.5M-303.2,1040.5L639.4,1040.5M-303.2,1158.5L639.4,1158.5M-303.2,1182.5L639.4,1182.5M-303.2,1205.5L639.4,1205.5M-303.2,1229.5L639.4,1229.5M-279.4,1064.5L-67.8,1064.5M-279.4,1087.5L-67.8,1087.5M-279.4,1111.5L-67.8,1111.5M-279.4,1134.5L-67.8,1134.5M-43.6,1064.5L343.5,1064.5M-43.6,1087.5L639.4,1087.5M-43.6,1111.5L639.4,1111.5M-43.6,1134.5L639.4,1134.5M-279.5,1040.4L-279.5,1158.2M-223.5,1017.6L-223.5,1252.8M-121.5,1040.4L-121.5,1064.0M-67.5,1040.4L-67.5,1158.2M-43.5,1040.4L-43.5,1158.2M12.5,1040.4L12.5,1158.2M92.5,1040.4L92.5,1134.6M143.5,1040.4L143.5,1134.6M211.5,1040.4L211.5,1158.2M264.5,1040.4L264.5,1158.2M343.5,1040.4L343.5,1205.4M390.5,1087.2L390.5,1205.4M504.5,1087.2L504.5,1205.4M546.5,1087.2L546.5,1205.4M-137.5,1017.6L-137.5,1040.4M-46.5,1017.6L-46.5,1040.4M43.5,1017.6L43.5,1040.4M134.5,1017.6L134.5,1040.4M225.5,1017.6L225.5,1040.4M315.5,1017.6L315.5,1040.4M406.5,1017.6L406.5,1040.4M497.5,1017.6L497.5,1040.4M-126.5,1205.4L-126.5,1229.1M-91.5,1205.4L-91.5,1229.1M15.5,1205.4L15.5,1229.1M50.5,1205.4L50.5,1229.1M156.5,1205.4L156.5,1229.1M191.5,1205.4L191.5,1229.1M297.5,1205.4L297.5,1229.1M332.5,1205.4L332.5,1229.1M439.5,1205.4L439.5,1229.1M474.5,1205.4L474.5,1229.1M604.5,1205.4L604.5,1229.1M-91.5,1229.1L-91.5,1252.8M50.5,1229.1L50.5,1252.8M191.5,1229.1L191.5,1252.8M332.5,1229.1L332.5,1252.8M474.5,1229.1L474.5,1252.8M733.8,1017.5L1676.4,1017.5M733.8,1040.5L1676.4,1040.5M733.8,1158.5L1676.4,1158.5M733.8,1182.5L1676.4,1182.5M733.8,1205.5L1676.4,1205.5M733.8,1229.5L1676.4,1229.5M757.6,1064.5L969.2,1064.5M757.6,1087.5L969.2,1087.5M757.6,1111.5L969.2,1111.5M757.6,1134.5L969.2,1134.5M993.4,1064.5L1380.5,1064.5M993.4,1087.5L1676.4,1087.5M993.4,1111.5L1676.4,1111.5M993.4,1134.5L1676.4,1134.5M757.5,1040.4L757.5,1158.2M813.5,1017.6L813.5,1252.8M915.5,1040.4L915.5,1064.0M969.5,1040.4L969.5,1158.2M993.5,1040.4L993.5,1158.2M1050.5,1040.4L1050.5,1158.2M1129.5,1040.4L1129.5,1134.6M1180.5,1040.4L1180.5,1134.6M1248.5,1040.4L1248.5,1158.2M1300.5,1040.4L1300.5,1158.2M1380.5,1040.4L1380.5,1205.4M1427.5,1087.2L1427.5,1205.4M1541.5,1087.2L1541.5,1205.4M1583.5,1087.2L1583.5,1205.4M899.5,1017.6L899.5,1040.4M990.5,1017.6L990.5,1040.4M1080.5,1017.6L1080.5,1040.4M1171.5,1017.6L1171.5,1040.4M1262.5,1017.6L1262.5,1040.4M1352.5,1017.6L1352.5,1040.4M1443.5,1017.6L1443.5,1040.4M1534.5,1017.6L1534.5,1040.4M910.5,1205.4L910.5,1229.1M945.5,1205.4L945.5,1229.1M1052.5,1205.4L1052.5,1229.1M1087.5,1205.4L1087.5,1229.1M1193.5,1205.4L1193.5,1229.1M1228.5,1205.4L1228.5,1229.1M1334.5,1205.4L1334.5,1229.1M1370.5,1205.4L1370.5,1229.1M1476.5,1205.4L1476.5,1229.1M1511.5,1205.4L1511.5,1229.1M1641.5,1205.4L1641.5,1229.1M945.5,1229.1L945.5,1252.8M1087.5,1229.1L1087.5,1252.8M1228.5,1229.1L1228.5,1252.8M1370.5,1229.1L1370.5,1252.8M1511.5,1229.1L1511.5,1252.8M1771.6,1017.5L2714.2,1017.5M1771.6,1040.5L2714.2,1040.5M1771.6,1158.5L2714.2,1158.5M1771.6,1182.5L2714.2,1182.5M1771.6,1205.5L2714.2,1205.5M1771.6,1229.5L2714.2,1229.5M1795.4,1064.5L2007.0,1064.5M1795.4,1087.5L2007.0,1087.5M1795.4,1111.5L2007.0,1111.5M1795.4,1134.5L2007.0,1134.5M2031.2,1064.5L2418.3,1064.5M2031.2,1087.5L2714.2,1087.5M2031.2,1111.5L2714.2,1111.5M2031.2,1134.5L2714.2,1134.5M1795.5,1040.4L1795.5,1158.2M1850.5,1017.6L1850.5,1252.8M1953.5,1040.4L1953.5,1064.0M2006.5,1040.4L2006.5,1158.2M2031.5,1040.4L2031.5,1158.2M2087.5,1040.4L2087.5,1158.2M2167.5,1040.4L2167.5,1134.6M2218.5,1040.4L2218.5,1134.6M2286.5,1040.4L2286.5,1158.2M2338.5,1040.4L2338.5,1158.2M2418.5,1040.4L2418.5,1205.4M2464.5,1087.2L2464.5,1205.4M2578.5,1087.2L2578.5,1205.4M2621.5,1087.2L2621.5,1205.4M1937.5,1017.6L1937.5,1040.4M2028.5,1017.6L2028.5,1040.4M2118.5,1017.6L2118.5,1040.4M2209.5,1017.6L2209.5,1040.4M2300.5,1017.6L2300.5,1040.4M2390.5,1017.6L2390.5,1040.4M2481.5,1017.6L2481.5,1040.4M2572.5,1017.6L2572.5,1040.4M1948.5,1205.4L1948.5,1229.1M1983.5,1205.4L1983.5,1229.1M2090.5,1205.4L2090.5,1229.1M2125.5,1205.4L2125.5,1229.1M2231.5,1205.4L2231.5,1229.1M2266.5,1205.4L2266.5,1229.1M2372.5,1205.4L2372.5,1229.1M2407.5,1205.4L2407.5,1229.1M2514.5,1205.4L2514.5,1229.1M2549.5,1205.4L2549.5,1229.1M2678.5,1205.4L2678.5,1229.1M1983.5,1229.1L1983.5,1252.8M2125.5,1229.1L2125.5,1252.8M2266.5,1229.1L2266.5,1252.8M2407.5,1229.1L2407.5,1252.8M2549.5,1229.1L2549.5,1252.8" stroke="#fff" stroke-width="1" fill="none" shape-rendering="crispEdges"/><g fill="#fff" font-family="'Noto Sans CJK SC','Liberation Sans',sans-serif" font-weight="300"><text x="-285.7" y="710.5" font-size="12.5" text-anchor="middle" dy="0.35em" font-weight="300">编号</text><text x="-167.9" y="710.5" font-size="12.5" text-anchor="middle" dy="0.35em" font-weight="300" letter-spacing="1.2">零件编号</text><text x="32.8" y="710.5" font-size="12.5" text-anchor="middle" dy="0.35em" font-weight="300" letter-spacing="1.2">零件名称</text><text x="150.5" y="710.5" font-size="12.5" text-anchor="middle" dy="0.35em" font-weight="300">数量</text><text x="185.8" y="710.5" font-size="12.5" text-anchor="middle" dy="0.35em" font-weight="300">编号</text><text x="303.7" y="710.5" font-size="12.5" text-anchor="middle" dy="0.35em" font-weight="300" letter-spacing="1.2">零件编号</text><text x="503.7" y="710.5" font-size="12.5" text-anchor="middle" dy="0.35em" font-weight="300" letter-spacing="1.2">零件名称</text><text x="621.6" y="710.5" font-size="12.5" text-anchor="middle" dy="0.35em" font-weight="300">数量</text><text x="185.8" y="514.4" font-size="18.5" text-anchor="middle" dy="0.35em" font-weight="300">22</text><text x="411.7" y="514.4" font-size="18.5" text-anchor="start" dy="0.35em" font-weight="300" letter-spacing="-0.2">B-392<tspan font-size="13" letter-spacing="1" dy="-2">长邵</tspan></text><text x="621.6" y="514.4" font-size="18.5" text-anchor="middle" dy="0.35em" font-weight="300">1</text><text x="185.8" y="532.2" font-size="18.5" text-anchor="middle" dy="0.35em" font-weight="300">20</text><text x="411.7" y="532.2" font-size="18.5" text-anchor="start" dy="0.35em" font-weight="300" letter-spacing="-0.2">B-100<tspan font-size="13" letter-spacing="1" dy="-2">长邵</tspan></text><text x="621.6" y="532.2" font-size="18.5" text-anchor="middle" dy="0.35em" font-weight="300">4</text><text x="185.8" y="550.1" font-size="18.5" text-anchor="middle" dy="0.35em" font-weight="300">18</text><text x="411.7" y="550.1" font-size="18.5" text-anchor="start" dy="0.35em" font-weight="300" letter-spacing="-0.2">B-106<tspan font-size="13" letter-spacing="1" dy="-2">长邵</tspan></text><text x="621.6" y="550.1" font-size="18.5" text-anchor="middle" dy="0.35em" font-weight="300">6</text><text x="185.8" y="568.0" font-size="18.5" text-anchor="middle" dy="0.35em" font-weight="300">16</text><text x="413.7" y="568.0" font-size="18.5" text-anchor="start" dy="0.35em" font-weight="300" letter-spacing="1.0">YY21-t3-b-88</text><text x="621.6" y="568.0" font-size="18.5" text-anchor="middle" dy="0.35em" font-weight="300">1</text><text x="185.8" y="586.0" font-size="18.5" text-anchor="middle" dy="0.35em" font-weight="300">14</text><text x="413.7" y="586.0" font-size="18.5" text-anchor="start" dy="0.35em" font-weight="300" letter-spacing="1.0">YY21-t3-b-68</text><text x="621.6" y="586.0" font-size="18.5" text-anchor="middle" dy="0.35em" font-weight="300">1</text><text x="185.8" y="603.9" font-size="18.5" text-anchor="middle" dy="0.35em" font-weight="300">12</text><text x="413.7" y="603.9" font-size="18.5" text-anchor="start" dy="0.35em" font-weight="300" letter-spacing="1.0">YY21-t3-b-81</text><text x="621.6" y="603.9" font-size="18.5" text-anchor="middle" dy="0.35em" font-weight="300">9</text><text x="185.8" y="621.8" font-size="18.5" text-anchor="middle" dy="0.35em" font-weight="300">10</text><text x="411.7" y="621.8" font-size="18.5" text-anchor="start" dy="0.35em" font-weight="300" letter-spacing="-0.2">B-561<tspan font-size="13" letter-spacing="1" dy="-2">长邵</tspan></text><text x="621.6" y="621.8" font-size="18.5" text-anchor="middle" dy="0.35em" font-weight="300">1</text><text x="185.8" y="639.6" font-size="18.5" text-anchor="middle" dy="0.35em" font-weight="300">8</text><text x="413.7" y="639.6" font-size="18.5" text-anchor="start" dy="0.35em" font-weight="300" letter-spacing="1.0">YY21-t3-b-89</text><text x="621.6" y="639.6" font-size="18.5" text-anchor="middle" dy="0.35em" font-weight="300">8</text><text x="185.8" y="657.5" font-size="18.5" text-anchor="middle" dy="0.35em" font-weight="300">6</text><text x="411.7" y="657.5" font-size="18.5" text-anchor="start" dy="0.35em" font-weight="300" letter-spacing="-0.2">B-105<tspan font-size="13" letter-spacing="1" dy="-2">长邵</tspan></text><text x="621.6" y="657.5" font-size="18.5" text-anchor="middle" dy="0.35em" font-weight="300">8</text><text x="185.8" y="675.5" font-size="18.5" text-anchor="middle" dy="0.35em" font-weight="300">4</text><text x="413.7" y="675.5" font-size="18.5" text-anchor="start" dy="0.35em" font-weight="300" letter-spacing="1.0">309</text><text x="621.6" y="675.5" font-size="18.5" text-anchor="middle" dy="0.35em" font-weight="300">9</text><text x="185.8" y="693.4" font-size="18.5" text-anchor="middle" dy="0.35em" font-weight="300">2</text><text x="413.7" y="693.4" font-size="18.5" text-anchor="start" dy="0.35em" font-weight="300" letter-spacing="1.0">307</text><text x="621.6" y="693.4" font-size="18.5" text-anchor="middle" dy="0.35em" font-weight="300">7</text><text x="150.5" y="514.4" font-size="18.5" text-anchor="middle" dy="0.35em" font-weight="300">3</text><text x="39.5" y="514.4" font-size="18.5" text-anchor="start" dy="0.35em" font-weight="300" letter-spacing="0.5">2</text><text x="150.5" y="532.2" font-size="18.5" text-anchor="middle" dy="0.35em" font-weight="300">1</text><text x="39.5" y="532.2" font-size="18.5" text-anchor="start" dy="0.35em" font-weight="300" letter-spacing="0.5">67</text><text x="150.5" y="550.1" font-size="18.5" text-anchor="middle" dy="0.35em" font-weight="300">1</text><text x="150.5" y="568.0" font-size="18.5" text-anchor="middle" dy="0.35em" font-weight="300">1</text><text x="39.5" y="568.0" font-size="18.5" text-anchor="start" dy="0.35em" font-weight="300" letter-spacing="0.5">12</text><text x="150.5" y="586.0" font-size="18.5" text-anchor="middle" dy="0.35em" font-weight="300">4</text><text x="39.5" y="586.0" font-size="18.5" text-anchor="start" dy="0.35em" font-weight="300" letter-spacing="0.5">1</text><text x="150.5" y="603.9" font-size="18.5" text-anchor="middle" dy="0.35em" font-weight="300">8</text><text x="39.5" y="603.9" font-size="18.5" text-anchor="start" dy="0.35em" font-weight="300" letter-spacing="0.5">11</text><text x="150.5" y="621.8" font-size="18.5" text-anchor="middle" dy="0.35em" font-weight="300">8</text><text x="39.5" y="621.8" font-size="18.5" text-anchor="start" dy="0.35em" font-weight="300" letter-spacing="0.5">17</text><text x="150.5" y="639.6" font-size="18.5" text-anchor="middle" dy="0.35em" font-weight="300">8</text><text x="39.5" y="639.6" font-size="18.5" text-anchor="start" dy="0.35em" font-weight="300" letter-spacing="0.5">66</text><text x="150.5" y="657.5" font-size="18.5" text-anchor="middle" dy="0.35em" font-weight="300">8</text><text x="150.5" y="675.5" font-size="18.5" text-anchor="middle" dy="0.35em" font-weight="300">5</text><text x="39.5" y="675.5" font-size="18.5" text-anchor="start" dy="0.35em" font-weight="300" letter-spacing="0.5">80</text><text x="150.5" y="693.4" font-size="18.5" text-anchor="middle" dy="0.35em" font-weight="300">4</text><text x="751.3" y="710.5" font-size="12.5" text-anchor="middle" dy="0.35em" font-weight="300">编号</text><text x="869.1" y="710.5" font-size="12.5" text-anchor="middle" dy="0.35em" font-weight="300" letter-spacing="1.2">零件编号</text><text x="1069.8" y="710.5" font-size="12.5" text-anchor="middle" dy="0.35em" font-weight="300" letter-spacing="1.2">零件名称</text><text x="1187.5" y="710.5" font-size="12.5" text-anchor="middle" dy="0.35em" font-weight="300">数量</text><text x="1222.8" y="710.5" font-size="12.5" text-anchor="middle" dy="0.35em" font-weight="300">编号</text><text x="1340.7" y="710.5" font-size="12.5" text-anchor="middle" dy="0.35em" font-weight="300" letter-spacing="1.2">零件编号</text><text x="1540.7" y="710.5" font-size="12.5" text-anchor="middle" dy="0.35em" font-weight="300" letter-spacing="1.2">零件名称</text><text x="1658.6" y="710.5" font-size="12.5" text-anchor="middle" dy="0.35em" font-weight="300">数量</text><text x="751.3" y="550.1" font-size="18.5" text-anchor="middle" dy="0.35em" font-weight="300">17</text><text x="979.5" y="550.1" font-size="18.5" text-anchor="start" dy="0.35em" font-weight="300" letter-spacing="1.0">YY21-t3-b-12</text><text x="1187.5" y="550.1" font-size="18.5" text-anchor="middle" dy="0.35em" font-weight="300">1</text><text x="751.3" y="568.0" font-size="18.5" text-anchor="middle" dy="0.35em" font-weight="300">15</text><text x="977.5" y="568.0" font-size="18.5" text-anchor="start" dy="0.35em" font-weight="300" letter-spacing="-0.2">B-107<tspan font-size="13" letter-spacing="1" dy="-2">长邵</tspan></text><text x="1187.5" y="568.0" font-size="18.5" text-anchor="middle" dy="0.35em" font-weight="300">10</text><text x="751.3" y="586.0" font-size="18.5" text-anchor="middle" dy="0.35em" font-weight="300">13</text><text x="979.5" y="586.0" font-size="18.5" text-anchor="start" dy="0.35em" font-weight="300" letter-spacing="1.0">YY21-t3-b-67</text><text x="1187.5" y="586.0" font-size="18.5" text-anchor="middle" dy="0.35em" font-weight="300">9</text><text x="751.3" y="603.9" font-size="18.5" text-anchor="middle" dy="0.35em" font-weight="300">11</text><text x="977.5" y="603.9" font-size="18.5" text-anchor="start" dy="0.35em" font-weight="300" letter-spacing="-0.2">B-329<tspan font-size="13" letter-spacing="1" dy="-2">长邵</tspan><tspan dy="2">2</tspan></text><text x="1187.5" y="603.9" font-size="18.5" text-anchor="middle" dy="0.35em" font-weight="300">3</text><text x="751.3" y="621.8" font-size="18.5" text-anchor="middle" dy="0.35em" font-weight="300">9</text><text x="977.5" y="621.8" font-size="18.5" text-anchor="start" dy="0.35em" font-weight="300" letter-spacing="-0.2">B-104<tspan font-size="13" letter-spacing="1" dy="-2">长邵</tspan></text><text x="1187.5" y="621.8" font-size="18.5" text-anchor="middle" dy="0.35em" font-weight="300">10</text><text x="751.3" y="639.6" font-size="18.5" text-anchor="middle" dy="0.35em" font-weight="300">7</text><text x="977.5" y="639.6" font-size="18.5" text-anchor="start" dy="0.35em" font-weight="300" letter-spacing="-0.2">B-100<tspan font-size="13" letter-spacing="1" dy="-2">长邵</tspan></text><text x="1187.5" y="639.6" font-size="18.5" text-anchor="middle" dy="0.35em" font-weight="300">4</text><text x="751.3" y="657.5" font-size="18.5" text-anchor="middle" dy="0.35em" font-weight="300">5</text><text x="979.5" y="657.5" font-size="18.5" text-anchor="start" dy="0.35em" font-weight="300" letter-spacing="1.0">YY21-t3-b-15</text><text x="1187.5" y="657.5" font-size="18.5" text-anchor="middle" dy="0.35em" font-weight="300">7</text><text x="751.3" y="675.5" font-size="18.5" text-anchor="middle" dy="0.35em" font-weight="300">3</text><text x="977.5" y="675.5" font-size="18.5" text-anchor="start" dy="0.35em" font-weight="300" letter-spacing="-0.2">B-64<tspan font-size="13" letter-spacing="1" dy="-2">长邵</tspan><tspan dy="2">2</tspan></text><text x="1187.5" y="675.5" font-size="18.5" text-anchor="middle" dy="0.35em" font-weight="300">6</text><text x="751.3" y="693.4" font-size="18.5" text-anchor="middle" dy="0.35em" font-weight="300">1</text><text x="979.5" y="693.4" font-size="18.5" text-anchor="start" dy="0.35em" font-weight="300" letter-spacing="1.0">YY21-t3-b-88</text><text x="1187.5" y="693.4" font-size="18.5" text-anchor="middle" dy="0.35em" font-weight="300">9</text><text x="1222.8" y="550.1" font-size="18.5" text-anchor="middle" dy="0.35em" font-weight="300">18</text><text x="1450.7" y="550.1" font-size="18.5" text-anchor="start" dy="0.35em" font-weight="300" letter-spacing="1.0">309</text><text x="1658.6" y="550.1" font-size="18.5" text-anchor="middle" dy="0.35em" font-weight="300">1</text><text x="1222.8" y="568.0" font-size="18.5" text-anchor="middle" dy="0.35em" font-weight="300">16</text><text x="1450.7" y="568.0" font-size="18.5" text-anchor="start" dy="0.35em" font-weight="300" letter-spacing="1.0">YY21-t3-b-11</text><text x="1658.6" y="568.0" font-size="18.5" text-anchor="middle" dy="0.35em" font-weight="300">2</text><text x="1222.8" y="586.0" font-size="18.5" text-anchor="middle" dy="0.35em" font-weight="300">14</text><text x="1448.7" y="586.0" font-size="18.5" text-anchor="start" dy="0.35em" font-weight="300" letter-spacing="-0.2">B-99<tspan font-size="13" letter-spacing="1" dy="-2">长邵</tspan></text><text x="1658.6" y="586.0" font-size="18.5" text-anchor="middle" dy="0.35em" font-weight="300">8</text><text x="1222.8" y="603.9" font-size="18.5" text-anchor="middle" dy="0.35em" font-weight="300">12</text><text x="1450.7" y="603.9" font-size="18.5" text-anchor="start" dy="0.35em" font-weight="300" letter-spacing="1.0">307</text><text x="1658.6" y="603.9" font-size="18.5" text-anchor="middle" dy="0.35em" font-weight="300">3</text><text x="1222.8" y="621.8" font-size="18.5" text-anchor="middle" dy="0.35em" font-weight="300">10</text><text x="1450.7" y="621.8" font-size="18.5" text-anchor="start" dy="0.35em" font-weight="300" letter-spacing="1.0">YY21-t3-b-80</text><text x="1658.6" y="621.8" font-size="18.5" text-anchor="middle" dy="0.35em" font-weight="300">5</text><text x="1222.8" y="639.6" font-size="18.5" text-anchor="middle" dy="0.35em" font-weight="300">8</text><text x="1450.7" y="639.6" font-size="18.5" text-anchor="start" dy="0.35em" font-weight="300" letter-spacing="1.0">YY21-t3-b-68</text><text x="1658.6" y="639.6" font-size="18.5" text-anchor="middle" dy="0.35em" font-weight="300">6</text><text x="1222.8" y="657.5" font-size="18.5" text-anchor="middle" dy="0.35em" font-weight="300">6</text><text x="1448.7" y="657.5" font-size="18.5" text-anchor="start" dy="0.35em" font-weight="300" letter-spacing="-0.2">B-106<tspan font-size="13" letter-spacing="1" dy="-2">长邵</tspan></text><text x="1658.6" y="657.5" font-size="18.5" text-anchor="middle" dy="0.35em" font-weight="300">4</text><text x="1222.8" y="675.5" font-size="18.5" text-anchor="middle" dy="0.35em" font-weight="300">4</text><text x="1450.7" y="675.5" font-size="18.5" text-anchor="start" dy="0.35em" font-weight="300" letter-spacing="1.0"><tspan font-size="13" letter-spacing="1">十字架</tspan></text><text x="1658.6" y="675.5" font-size="18.5" text-anchor="middle" dy="0.35em" font-weight="300">6</text><text x="1222.8" y="693.4" font-size="18.5" text-anchor="middle" dy="0.35em" font-weight="300">2</text><text x="1448.7" y="693.4" font-size="18.5" text-anchor="start" dy="0.35em" font-weight="300" letter-spacing="-0.2">B-561<tspan font-size="13" letter-spacing="1" dy="-2">长邵</tspan></text><text x="1658.6" y="693.4" font-size="18.5" text-anchor="middle" dy="0.35em" font-weight="300">4</text><text x="1789.1" y="710.5" font-size="12.5" text-anchor="middle" dy="0.35em" font-weight="300">编号</text><text x="1906.9" y="710.5" font-size="12.5" text-anchor="middle" dy="0.35em" font-weight="300" letter-spacing="1.2">零件编号</text><text x="2107.6" y="710.5" font-size="12.5" text-anchor="middle" dy="0.35em" font-weight="300" letter-spacing="1.2">零件名称</text><text x="2225.2" y="710.5" font-size="12.5" text-anchor="middle" dy="0.35em" font-weight="300">数量</text><text x="2260.6" y="710.5" font-size="12.5" text-anchor="middle" dy="0.35em" font-weight="300">编号</text><text x="2378.5" y="710.5" font-size="12.5" text-anchor="middle" dy="0.35em" font-weight="300" letter-spacing="1.2">零件编号</text><text x="2578.5" y="710.5" font-size="12.5" text-anchor="middle" dy="0.35em" font-weight="300" letter-spacing="1.2">零件名称</text><text x="2696.3" y="710.5" font-size="12.5" text-anchor="middle" dy="0.35em" font-weight="300">数量</text><text x="1789.1" y="568.0" font-size="18.5" text-anchor="middle" dy="0.35em" font-weight="300">15</text><text x="2017.3" y="568.0" font-size="18.5" text-anchor="start" dy="0.35em" font-weight="300" letter-spacing="1.0">YY21-t3-b-87</text><text x="2225.2" y="568.0" font-size="18.5" text-anchor="middle" dy="0.35em" font-weight="300">10</text><text x="1789.1" y="586.0" font-size="18.5" text-anchor="middle" dy="0.35em" font-weight="300">13</text><text x="2015.3" y="586.0" font-size="18.5" text-anchor="start" dy="0.35em" font-weight="300" letter-spacing="-0.2">B-392<tspan font-size="13" letter-spacing="1" dy="-2">长邵</tspan></text><text x="2225.2" y="586.0" font-size="18.5" text-anchor="middle" dy="0.35em" font-weight="300">6</text><text x="1789.1" y="603.9" font-size="18.5" text-anchor="middle" dy="0.35em" font-weight="300">11</text><text x="2015.3" y="603.9" font-size="18.5" text-anchor="start" dy="0.35em" font-weight="300" letter-spacing="-0.2">B-101<tspan font-size="13" letter-spacing="1" dy="-2">长邵</tspan></text><text x="2225.2" y="603.9" font-size="18.5" text-anchor="middle" dy="0.35em" font-weight="300">10</text><text x="1789.1" y="621.8" font-size="18.5" text-anchor="middle" dy="0.35em" font-weight="300">9</text><text x="2015.3" y="621.8" font-size="18.5" text-anchor="start" dy="0.35em" font-weight="300" letter-spacing="-0.2">B-99<tspan font-size="13" letter-spacing="1" dy="-2">长邵</tspan></text><text x="2225.2" y="621.8" font-size="18.5" text-anchor="middle" dy="0.35em" font-weight="300">2</text><text x="1789.1" y="639.6" font-size="18.5" text-anchor="middle" dy="0.35em" font-weight="300">7</text><text x="2017.3" y="639.6" font-size="18.5" text-anchor="start" dy="0.35em" font-weight="300" letter-spacing="1.0">YY21-t3-b-64</text><text x="2225.2" y="639.6" font-size="18.5" text-anchor="middle" dy="0.35em" font-weight="300">10</text><text x="1789.1" y="657.5" font-size="18.5" text-anchor="middle" dy="0.35em" font-weight="300">5</text><text x="2017.3" y="657.5" font-size="18.5" text-anchor="start" dy="0.35em" font-weight="300" letter-spacing="1.0">YY21-t3-b-68</text><text x="2225.2" y="657.5" font-size="18.5" text-anchor="middle" dy="0.35em" font-weight="300">1</text><text x="1789.1" y="675.5" font-size="18.5" text-anchor="middle" dy="0.35em" font-weight="300">3</text><text x="2017.3" y="675.5" font-size="18.5" text-anchor="start" dy="0.35em" font-weight="300" letter-spacing="1.0">YY21-t3-b-12</text><text x="2225.2" y="675.5" font-size="18.5" text-anchor="middle" dy="0.35em" font-weight="300">8</text><text x="1789.1" y="693.4" font-size="18.5" text-anchor="middle" dy="0.35em" font-weight="300">1</text><text x="2017.3" y="693.4" font-size="18.5" text-anchor="start" dy="0.35em" font-weight="300" letter-spacing="1.0">YY21-t3-b-13</text><text x="2225.2" y="693.4" font-size="18.5" text-anchor="middle" dy="0.35em" font-weight="300">8</text><text x="2260.6" y="568.0" font-size="18.5" text-anchor="middle" dy="0.35em" font-weight="300"></text><text x="2488.5" y="568.0" font-size="18.5" text-anchor="start" dy="0.35em" font-weight="300" letter-spacing="1.0"></text><text x="2696.3" y="568.0" font-size="18.5" text-anchor="middle" dy="0.35em" font-weight="300"></text><text x="2260.6" y="586.0" font-size="18.5" text-anchor="middle" dy="0.35em" font-weight="300">14</text><text x="2486.5" y="586.0" font-size="18.5" text-anchor="start" dy="0.35em" font-weight="300" letter-spacing="-0.2">B-390<tspan font-size="13" letter-spacing="1" dy="-2">长邵</tspan></text><text x="2696.3" y="586.0" font-size="18.5" text-anchor="middle" dy="0.35em" font-weight="300">5</text><text x="2260.6" y="603.9" font-size="18.5" text-anchor="middle" dy="0.35em" font-weight="300">12</text><text x="2486.5" y="603.9" font-size="18.5" text-anchor="start" dy="0.35em" font-weight="300" letter-spacing="-0.2">B-560<tspan font-size="13" letter-spacing="1" dy="-2">长邵</tspan></text><text x="2696.3" y="603.9" font-size="18.5" text-anchor="middle" dy="0.35em" font-weight="300">4</text><text x="2260.6" y="621.8" font-size="18.5" text-anchor="middle" dy="0.35em" font-weight="300">10</text><text x="2486.5" y="621.8" font-size="18.5" text-anchor="start" dy="0.35em" font-weight="300" letter-spacing="-0.2">B-391-<tspan font-size="13" letter-spacing="1" dy="-2">长邵</tspan></text><text x="2696.3" y="621.8" font-size="18.5" text-anchor="middle" dy="0.35em" font-weight="300">3</text><text x="2260.6" y="639.6" font-size="18.5" text-anchor="middle" dy="0.35em" font-weight="300">8</text><text x="2488.5" y="639.6" font-size="18.5" text-anchor="start" dy="0.35em" font-weight="300" letter-spacing="1.0">YY21-t3-b-3</text><text x="2696.3" y="639.6" font-size="18.5" text-anchor="middle" dy="0.35em" font-weight="300">10</text><text x="2260.6" y="657.5" font-size="18.5" text-anchor="middle" dy="0.35em" font-weight="300">6</text><text x="2488.5" y="657.5" font-size="18.5" text-anchor="start" dy="0.35em" font-weight="300" letter-spacing="1.0">YY21-t3-b-2</text><text x="2696.3" y="657.5" font-size="18.5" text-anchor="middle" dy="0.35em" font-weight="300">10</text><text x="2260.6" y="675.5" font-size="18.5" text-anchor="middle" dy="0.35em" font-weight="300">4</text><text x="2488.5" y="675.5" font-size="18.5" text-anchor="start" dy="0.35em" font-weight="300" letter-spacing="1.0">308</text><text x="2696.3" y="675.5" font-size="18.5" text-anchor="middle" dy="0.35em" font-weight="300">6</text><text x="2260.6" y="693.4" font-size="18.5" text-anchor="middle" dy="0.35em" font-weight="300">2</text><text x="2486.5" y="693.4" font-size="18.5" text-anchor="start" dy="0.35em" font-weight="300" letter-spacing="-0.2">B-329<tspan font-size="13" letter-spacing="1" dy="-2">长邵</tspan><tspan dy="2">2</tspan></text><text x="2696.3" y="693.4" font-size="18.5" text-anchor="middle" dy="0.35em" font-weight="300">3</text><text x="-263.0" y="1029.5" font-size="12.5" text-anchor="middle" dy="0.35em" font-weight="300" letter-spacing="1.6">钻 头 库</text><text x="-221.3" y="1023.6" font-size="6" text-anchor="start" dy="0.35em" font-weight="300">1号位</text><text x="-135.0" y="1023.6" font-size="6" text-anchor="start" dy="0.35em" font-weight="300">2号位</text><text x="-44.2" y="1023.6" font-size="6" text-anchor="start" dy="0.35em" font-weight="300">3号位</text><text x="46.0" y="1023.6" font-size="6" text-anchor="start" dy="0.35em" font-weight="300">4号位</text><text x="137.1" y="1023.6" font-size="6" text-anchor="start" dy="0.35em" font-weight="300">5号位</text><text x="227.9" y="1023.6" font-size="6" text-anchor="start" dy="0.35em" font-weight="300">6号位</text><text x="317.9" y="1023.6" font-size="6" text-anchor="start" dy="0.35em" font-weight="300">7号位</text><text x="408.9" y="1023.6" font-size="6" text-anchor="start" dy="0.35em" font-weight="300">8号位</text><text x="499.5" y="1030.0" font-size="12" text-anchor="start" dy="0.35em" font-weight="300" letter-spacing="1.5">备注</text><text x="-290.5" y="1067.5" font-size="15.5" text-anchor="middle" dy="0.35em" font-weight="300">板</text><text x="-290.5" y="1131.5" font-size="15.5" text-anchor="middle" dy="0.35em" font-weight="300">材</text><text x="-55.7" y="1066.5" font-size="17" text-anchor="middle" dy="0.35em" font-weight="300">套</text><text x="-55.7" y="1087.5" font-size="17" text-anchor="middle" dy="0.35em" font-weight="300">料</text><text x="-55.7" y="1110.0" font-size="17" text-anchor="middle" dy="0.35em" font-weight="300">信</text><text x="-55.7" y="1131.0" font-size="17" text-anchor="middle" dy="0.35em" font-weight="300">息</text><text x="-277.0" y="1053.0" font-size="11.6" text-anchor="start" dy="0.35em" font-weight="300" letter-spacing="0.3">钢板尺寸</text><text x="-277.0" y="1076.4" font-size="11.6" text-anchor="start" dy="0.35em" font-weight="300" letter-spacing="0.3">材质</text><text x="-277.0" y="1123.6" font-size="11.6" text-anchor="start" dy="0.35em" font-weight="300" letter-spacing="0.3">源板编号</text><text x="-277.0" y="1147.2" font-size="11.6" text-anchor="start" dy="0.35em" font-weight="300" letter-spacing="0.3">套料编号</text><text x="-277.5" y="1094.2" font-size="6.8" text-anchor="start" dy="0.35em" font-weight="500">零件净重</text><text x="-224.5" y="1104.7" font-size="6.8" text-anchor="end" dy="0.35em" font-weight="500">/钢板重量</text><text x="-221.5" y="1053.2" font-size="13.5" text-anchor="start" dy="0.35em" font-weight="300" letter-spacing="0.25">0x2000x5000</text><text x="-118.5" y="1053.7" font-size="13.5" text-anchor="start" dy="0.35em" font-weight="300" letter-spacing="0.4">4985.2</text><text x="-221.5" y="1100.2" font-size="13.5" text-anchor="start" dy="0.35em" font-weight="300" letter-spacing="0.5">0.68</text><text x="-144.0" y="1099.7" font-size="16" text-anchor="start" dy="0.35em" font-weight="300">/</text><text x="-132.5" y="1100.2" font-size="13.5" text-anchor="start" dy="0.35em" font-weight="300" letter-spacing="0.5">0.785</text><text x="-40.5" y="1053.0" font-size="11.6" text-anchor="start" dy="0.35em" font-weight="300" letter-spacing="0.3">空走长度</text><text x="-40.5" y="1076.4" font-size="11.6" text-anchor="start" dy="0.35em" font-weight="300" letter-spacing="0.3">切割长度</text><text x="-40.5" y="1100.0" font-size="11.6" text-anchor="start" dy="0.35em" font-weight="300" letter-spacing="0.3">喷粉长度</text><text x="-40.5" y="1123.6" font-size="11.6" text-anchor="start" dy="0.35em" font-weight="300" letter-spacing="0.3">机动时间</text><text x="-40.5" y="1147.2" font-size="11.6" text-anchor="start" dy="0.35em" font-weight="300" letter-spacing="0.3">切割机型</text><text x="16.0" y="1052.7" font-size="13.2" text-anchor="start" dy="0.35em" font-weight="300" letter-spacing="0.45">69.939 m</text><text x="16.0" y="1076.1" font-size="13.2" text-anchor="start" dy="0.35em" font-weight="300" letter-spacing="0.45">116.698 m</text><text x="16.0" y="1099.7" font-size="13.2" text-anchor="start" dy="0.35em" font-weight="300" letter-spacing="0.45">0 m</text><text x="16.0" y="1123.3" font-size="13.2" text-anchor="start" dy="0.35em" font-weight="300" letter-spacing="0.45">216.64<tspan font-size="11.5" letter-spacing="1" dy="-0.5">分钟</tspan></text><text x="16.0" y="1146.9" font-size="13.2" text-anchor="start" dy="0.35em" font-weight="300" letter-spacing="0.45">1. <tspan font-size="11.5" letter-spacing="1" dy="-0.5">国际标准</tspan><tspan dy="0.5">EIA</tspan><tspan font-size="11.5" letter-spacing="1" dy="-0.5">代码</tspan></text><text x="95.5" y="1053.0" font-size="11.6" text-anchor="start" dy="0.35em" font-weight="300" letter-spacing="0.3">打孔数</text><text x="95.5" y="1076.4" font-size="11.6" text-anchor="start" dy="0.35em" font-weight="300" letter-spacing="0.3">利用率</text><text x="95.5" y="1100.0" font-size="11.6" text-anchor="start" dy="0.35em" font-weight="300" letter-spacing="0.3">利用率1</text><text x="95.5" y="1123.6" font-size="11.6" text-anchor="start" dy="0.35em" font-weight="300" letter-spacing="0.3">补偿</text><text x="147.0" y="1055.4" font-size="16.5" text-anchor="start" dy="0.35em" font-weight="300">150</text><text x="147.0" y="1078.8" font-size="16.5" text-anchor="start" dy="0.35em" font-weight="300">86.82%</text><text x="147.0" y="1100.2" font-size="16.5" text-anchor="start" dy="0.35em" font-weight="300">86.82%</text><text x="147.0" y="1126.0" font-size="16.5" text-anchor="start" dy="0.35em" font-weight="300">0</text><text x="215.0" y="1053.0" font-size="11.6" text-anchor="start" dy="0.35em" font-weight="300" letter-spacing="0.3">切割块数</text><text x="215.0" y="1076.4" font-size="11.6" text-anchor="start" dy="0.35em" font-weight="300" letter-spacing="0.3">割嘴数量</text><text x="215.0" y="1100.0" font-size="11.6" text-anchor="start" dy="0.35em" font-weight="300" letter-spacing="0.3">割嘴距离</text><text x="215.0" y="1123.6" font-size="11.6" text-anchor="start" dy="0.35em" font-weight="300" letter-spacing="0.3">切割次数</text><text x="215.0" y="1147.2" font-size="11.6" text-anchor="start" dy="0.35em" font-weight="300" letter-spacing="0.3">套料人</text><text x="267.0" y="1052.7" font-size="15" text-anchor="start" dy="0.35em" font-weight="300" letter-spacing="0.5">106</text><text x="267.0" y="1078.6" font-size="15" text-anchor="start" dy="0.35em" font-weight="300" letter-spacing="0.5">1</text><text x="267.0" y="1102.2" font-size="15" text-anchor="start" dy="0.35em" font-weight="300" letter-spacing="0.5">0</text><text x="267.0" y="1125.8" font-size="15" text-anchor="start" dy="0.35em" font-weight="300" letter-spacing="0.5">1</text><text x="269.5" y="1149.4" font-size="17.5" text-anchor="start" dy="0.35em" font-weight="300" letter-spacing="0.5">nester</text><text x="-258.0" y="1171.2" font-size="11.6" text-anchor="middle" dy="0.35em" font-weight="300" letter-spacing="0.3">代码文件</text><text x="-258.0" y="1194.8" font-size="11.6" text-anchor="middle" dy="0.35em" font-weight="300" letter-spacing="0.3">套料文件</text><text x="-258.0" y="1218.2" font-size="11.6" text-anchor="middle" dy="0.35em" font-weight="300" letter-spacing="0.3">钢板编号</text><text x="-269.0" y="1242.9" font-size="11.6" text-anchor="middle" dy="0.35em" font-weight="300" letter-spacing="0.3">炉号</text><text x="-221.5" y="1171.2" font-size="10.2" text-anchor="start" dy="0.35em" font-weight="300" letter-spacing="0.3">C:/Users/86181/Desktop/1/12.txt</text><text transform="translate(346.0,1100.2) scale(0.8,1)" font-size="12" text-anchor="start" dy="0.35em" font-weight="300">自由项1</text><text transform="translate(507.0,1100.2) scale(0.8,1)" font-size="12" text-anchor="start" dy="0.35em" font-weight="300">自由项5</text><text transform="translate(346.0,1123.8) scale(0.8,1)" font-size="12" text-anchor="start" dy="0.35em" font-weight="300">自由项2</text><text transform="translate(507.0,1123.8) scale(0.8,1)" font-size="12" text-anchor="start" dy="0.35em" font-weight="300">自由项6</text><text transform="translate(346.0,1147.4) scale(0.8,1)" font-size="12" text-anchor="start" dy="0.35em" font-weight="300">自由项3</text><text transform="translate(507.0,1147.4) scale(0.8,1)" font-size="12" text-anchor="start" dy="0.35em" font-weight="300">自由项7</text><text transform="translate(346.0,1171.2) scale(0.8,1)" font-size="12" text-anchor="start" dy="0.35em" font-weight="300">自由项4</text><text transform="translate(507.0,1171.2) scale(0.8,1)" font-size="12" text-anchor="start" dy="0.35em" font-weight="300">自由项8</text><text transform="translate(346.0,1194.8) scale(0.86,1)" font-size="12" text-anchor="start" dy="0.35em" font-weight="300">套料日期</text><text x="397.5" y="1195.3" font-size="10" text-anchor="start" dy="0.35em" font-weight="300" letter-spacing="0.45">2024-04-02 16:24:17</text><text x="507.5" y="1194.8" font-size="12.5" text-anchor="start" dy="0.35em" font-weight="300">页</text><text x="532.0" y="1194.8" font-size="12.5" text-anchor="start" dy="0.35em" font-weight="300">数</text><text x="550.0" y="1194.8" font-size="9.5" text-anchor="start" dy="0.35em" font-weight="300" letter-spacing="0.2">共6页,第3页</text><ellipse cx="364.5" cy="1064.2" rx="21" ry="12.3" fill="none" stroke="#fff" stroke-width="1"/><path d="M355.0,1055.7 h19 M364.5,1052.2 v5 M355.0,1072.7 h19 M364.5,1076.2 v-5" stroke="#fff" stroke-width="0.9" fill="none"/><text x="364.5" y="1064.5" font-size="11.5" text-anchor="middle" dy="0.35em" font-weight="700" letter-spacing="0.8" font-family="'Liberation Mono',monospace">ZCIT</text><text x="387.0" y="1064.2" font-size="11.5" text-anchor="start" dy="0.35em" font-weight="300" letter-spacing="0.6">上海卓畅信息技术有限公司</text><text x="774.0" y="1029.5" font-size="12.5" text-anchor="middle" dy="0.35em" font-weight="300" letter-spacing="1.6">钻 头 库</text><text x="815.7" y="1023.6" font-size="6" text-anchor="start" dy="0.35em" font-weight="300">1号位</text><text x="902.0" y="1023.6" font-size="6" text-anchor="start" dy="0.35em" font-weight="300">2号位</text><text x="992.8" y="1023.6" font-size="6" text-anchor="start" dy="0.35em" font-weight="300">3号位</text><text x="1083.0" y="1023.6" font-size="6" text-anchor="start" dy="0.35em" font-weight="300">4号位</text><text x="1174.1" y="1023.6" font-size="6" text-anchor="start" dy="0.35em" font-weight="300">5号位</text><text x="1264.9" y="1023.6" font-size="6" text-anchor="start" dy="0.35em" font-weight="300">6号位</text><text x="1354.9" y="1023.6" font-size="6" text-anchor="start" dy="0.35em" font-weight="300">7号位</text><text x="1445.9" y="1023.6" font-size="6" text-anchor="start" dy="0.35em" font-weight="300">8号位</text><text x="1536.5" y="1030.0" font-size="12" text-anchor="start" dy="0.35em" font-weight="300" letter-spacing="1.5">备注</text><text x="746.5" y="1067.5" font-size="15.5" text-anchor="middle" dy="0.35em" font-weight="300">板</text><text x="746.5" y="1131.5" font-size="15.5" text-anchor="middle" dy="0.35em" font-weight="300">材</text><text x="981.3" y="1066.5" font-size="17" text-anchor="middle" dy="0.35em" font-weight="300">套</text><text x="981.3" y="1087.5" font-size="17" text-anchor="middle" dy="0.35em" font-weight="300">料</text><text x="981.3" y="1110.0" font-size="17" text-anchor="middle" dy="0.35em" font-weight="300">信</text><text x="981.3" y="1131.0" font-size="17" text-anchor="middle" dy="0.35em" font-weight="300">息</text><text x="760.0" y="1053.0" font-size="11.6" text-anchor="start" dy="0.35em" font-weight="300" letter-spacing="0.3">钢板尺寸</text><text x="760.0" y="1076.4" font-size="11.6" text-anchor="start" dy="0.35em" font-weight="300" letter-spacing="0.3">材质</text><text x="760.0" y="1123.6" font-size="11.6" text-anchor="start" dy="0.35em" font-weight="300" letter-spacing="0.3">源板编号</text><text x="760.0" y="1147.2" font-size="11.6" text-anchor="start" dy="0.35em" font-weight="300" letter-spacing="0.3">套料编号</text><text x="759.5" y="1094.2" font-size="6.8" text-anchor="start" dy="0.35em" font-weight="500">零件净重</text><text x="812.5" y="1104.7" font-size="6.8" text-anchor="end" dy="0.35em" font-weight="500">/钢板重量</text><text x="815.5" y="1053.2" font-size="13.5" text-anchor="start" dy="0.35em" font-weight="300" letter-spacing="0.25">0x2000x5000</text><text x="918.5" y="1053.7" font-size="13.5" text-anchor="start" dy="0.35em" font-weight="300" letter-spacing="0.4">4970.8</text><text x="815.5" y="1100.2" font-size="13.5" text-anchor="start" dy="0.35em" font-weight="300" letter-spacing="0.5">0.71</text><text x="893.0" y="1099.7" font-size="16" text-anchor="start" dy="0.35em" font-weight="300">/</text><text x="904.5" y="1100.2" font-size="13.5" text-anchor="start" dy="0.35em" font-weight="300" letter-spacing="0.5">0.785</text><text x="996.5" y="1053.0" font-size="11.6" text-anchor="start" dy="0.35em" font-weight="300" letter-spacing="0.3">空走长度</text><text x="996.5" y="1076.4" font-size="11.6" text-anchor="start" dy="0.35em" font-weight="300" letter-spacing="0.3">切割长度</text><text x="996.5" y="1100.0" font-size="11.6" text-anchor="start" dy="0.35em" font-weight="300" letter-spacing="0.3">喷粉长度</text><text x="996.5" y="1123.6" font-size="11.6" text-anchor="start" dy="0.35em" font-weight="300" letter-spacing="0.3">机动时间</text><text x="996.5" y="1147.2" font-size="11.6" text-anchor="start" dy="0.35em" font-weight="300" letter-spacing="0.3">切割机型</text><text x="1053.0" y="1052.7" font-size="13.2" text-anchor="start" dy="0.35em" font-weight="300" letter-spacing="0.45">72.197 m</text><text x="1053.0" y="1076.1" font-size="13.2" text-anchor="start" dy="0.35em" font-weight="300" letter-spacing="0.45">110.676 m</text><text x="1053.0" y="1099.7" font-size="13.2" text-anchor="start" dy="0.35em" font-weight="300" letter-spacing="0.45">0 m</text><text x="1053.0" y="1123.3" font-size="13.2" text-anchor="start" dy="0.35em" font-weight="300" letter-spacing="0.45">208.37<tspan font-size="11.5" letter-spacing="1" dy="-0.5">分钟</tspan></text><text x="1053.0" y="1146.9" font-size="13.2" text-anchor="start" dy="0.35em" font-weight="300" letter-spacing="0.45">1. <tspan font-size="11.5" letter-spacing="1" dy="-0.5">国际标准</tspan><tspan dy="0.5">EIA</tspan><tspan font-size="11.5" letter-spacing="1" dy="-0.5">代码</tspan></text><text x="1132.5" y="1053.0" font-size="11.6" text-anchor="start" dy="0.35em" font-weight="300" letter-spacing="0.3">打孔数</text><text x="1132.5" y="1076.4" font-size="11.6" text-anchor="start" dy="0.35em" font-weight="300" letter-spacing="0.3">利用率</text><text x="1132.5" y="1100.0" font-size="11.6" text-anchor="start" dy="0.35em" font-weight="300" letter-spacing="0.3">利用率1</text><text x="1132.5" y="1123.6" font-size="11.6" text-anchor="start" dy="0.35em" font-weight="300" letter-spacing="0.3">补偿</text><text x="1184.0" y="1055.4" font-size="16.5" text-anchor="start" dy="0.35em" font-weight="300">153</text><text x="1184.0" y="1078.8" font-size="16.5" text-anchor="start" dy="0.35em" font-weight="300">90.06%</text><text x="1184.0" y="1100.2" font-size="16.5" text-anchor="start" dy="0.35em" font-weight="300">90.06%</text><text x="1184.0" y="1126.0" font-size="16.5" text-anchor="start" dy="0.35em" font-weight="300">0</text><text x="1252.0" y="1053.0" font-size="11.6" text-anchor="start" dy="0.35em" font-weight="300" letter-spacing="0.3">切割块数</text><text x="1252.0" y="1076.4" font-size="11.6" text-anchor="start" dy="0.35em" font-weight="300" letter-spacing="0.3">割嘴数量</text><text x="1252.0" y="1100.0" font-size="11.6" text-anchor="start" dy="0.35em" font-weight="300" letter-spacing="0.3">割嘴距离</text><text x="1252.0" y="1123.6" font-size="11.6" text-anchor="start" dy="0.35em" font-weight="300" letter-spacing="0.3">切割次数</text><text x="1252.0" y="1147.2" font-size="11.6" text-anchor="start" dy="0.35em" font-weight="300" letter-spacing="0.3">套料人</text><text x="1304.0" y="1052.7" font-size="15" text-anchor="start" dy="0.35em" font-weight="300" letter-spacing="0.5">98</text><text x="1304.0" y="1078.6" font-size="15" text-anchor="start" dy="0.35em" font-weight="300" letter-spacing="0.5">1</text><text x="1304.0" y="1102.2" font-size="15" text-anchor="start" dy="0.35em" font-weight="300" letter-spacing="0.5">0</text><text x="1304.0" y="1125.8" font-size="15" text-anchor="start" dy="0.35em" font-weight="300" letter-spacing="0.5">1</text><text x="1306.5" y="1149.4" font-size="17.5" text-anchor="start" dy="0.35em" font-weight="300" letter-spacing="0.5">nester</text><text x="779.0" y="1171.2" font-size="11.6" text-anchor="middle" dy="0.35em" font-weight="300" letter-spacing="0.3">代码文件</text><text x="779.0" y="1194.8" font-size="11.6" text-anchor="middle" dy="0.35em" font-weight="300" letter-spacing="0.3">套料文件</text><text x="779.0" y="1218.2" font-size="11.6" text-anchor="middle" dy="0.35em" font-weight="300" letter-spacing="0.3">钢板编号</text><text x="768.0" y="1242.9" font-size="11.6" text-anchor="middle" dy="0.35em" font-weight="300" letter-spacing="0.3">炉号</text><text x="815.5" y="1171.2" font-size="10.2" text-anchor="start" dy="0.35em" font-weight="300" letter-spacing="0.3">C:/Users/86181/Desktop/1/13.txt</text><text transform="translate(1383.0,1100.2) scale(0.8,1)" font-size="12" text-anchor="start" dy="0.35em" font-weight="300">自由项1</text><text transform="translate(1544.0,1100.2) scale(0.8,1)" font-size="12" text-anchor="start" dy="0.35em" font-weight="300">自由项5</text><text transform="translate(1383.0,1123.8) scale(0.8,1)" font-size="12" text-anchor="start" dy="0.35em" font-weight="300">自由项2</text><text transform="translate(1544.0,1123.8) scale(0.8,1)" font-size="12" text-anchor="start" dy="0.35em" font-weight="300">自由项6</text><text transform="translate(1383.0,1147.4) scale(0.8,1)" font-size="12" text-anchor="start" dy="0.35em" font-weight="300">自由项3</text><text transform="translate(1544.0,1147.4) scale(0.8,1)" font-size="12" text-anchor="start" dy="0.35em" font-weight="300">自由项7</text><text transform="translate(1383.0,1171.2) scale(0.8,1)" font-size="12" text-anchor="start" dy="0.35em" font-weight="300">自由项4</text><text transform="translate(1544.0,1171.2) scale(0.8,1)" font-size="12" text-anchor="start" dy="0.35em" font-weight="300">自由项8</text><text transform="translate(1383.0,1194.8) scale(0.86,1)" font-size="12" text-anchor="start" dy="0.35em" font-weight="300">套料日期</text><text x="1434.5" y="1195.3" font-size="10" text-anchor="start" dy="0.35em" font-weight="300" letter-spacing="0.45">2024-04-02 16:24:17</text><text x="1544.5" y="1194.8" font-size="12.5" text-anchor="start" dy="0.35em" font-weight="300">页</text><text x="1569.0" y="1194.8" font-size="12.5" text-anchor="start" dy="0.35em" font-weight="300">数</text><text x="1587.0" y="1194.8" font-size="9.5" text-anchor="start" dy="0.35em" font-weight="300" letter-spacing="0.2">共6页,第4页</text><ellipse cx="1401.5" cy="1064.2" rx="21" ry="12.3" fill="none" stroke="#fff" stroke-width="1"/><path d="M1392.0,1055.7 h19 M1401.5,1052.2 v5 M1392.0,1072.7 h19 M1401.5,1076.2 v-5" stroke="#fff" stroke-width="0.9" fill="none"/><text x="1401.5" y="1064.5" font-size="11.5" text-anchor="middle" dy="0.35em" font-weight="700" letter-spacing="0.8" font-family="'Liberation Mono',monospace">ZCIT</text><text x="1424.0" y="1064.2" font-size="11.5" text-anchor="start" dy="0.35em" font-weight="300" letter-spacing="0.6">上海卓畅信息技术有限公司</text><text x="1811.8" y="1029.5" font-size="12.5" text-anchor="middle" dy="0.35em" font-weight="300" letter-spacing="1.6">钻 头 库</text><text x="1853.5" y="1023.6" font-size="6" text-anchor="start" dy="0.35em" font-weight="300">1号位</text><text x="1939.8" y="1023.6" font-size="6" text-anchor="start" dy="0.35em" font-weight="300">2号位</text><text x="2030.6" y="1023.6" font-size="6" text-anchor="start" dy="0.35em" font-weight="300">3号位</text><text x="2120.8" y="1023.6" font-size="6" text-anchor="start" dy="0.35em" font-weight="300">4号位</text><text x="2211.9" y="1023.6" font-size="6" text-anchor="start" dy="0.35em" font-weight="300">5号位</text><text x="2302.7" y="1023.6" font-size="6" text-anchor="start" dy="0.35em" font-weight="300">6号位</text><text x="2392.7" y="1023.6" font-size="6" text-anchor="start" dy="0.35em" font-weight="300">7号位</text><text x="2483.7" y="1023.6" font-size="6" text-anchor="start" dy="0.35em" font-weight="300">8号位</text><text x="2574.3" y="1030.0" font-size="12" text-anchor="start" dy="0.35em" font-weight="300" letter-spacing="1.5">备注</text><text x="1784.3" y="1067.5" font-size="15.5" text-anchor="middle" dy="0.35em" font-weight="300">板</text><text x="1784.3" y="1131.5" font-size="15.5" text-anchor="middle" dy="0.35em" font-weight="300">材</text><text x="2019.1" y="1066.5" font-size="17" text-anchor="middle" dy="0.35em" font-weight="300">套</text><text x="2019.1" y="1087.5" font-size="17" text-anchor="middle" dy="0.35em" font-weight="300">料</text><text x="2019.1" y="1110.0" font-size="17" text-anchor="middle" dy="0.35em" font-weight="300">信</text><text x="2019.1" y="1131.0" font-size="17" text-anchor="middle" dy="0.35em" font-weight="300">息</text><text x="1797.8" y="1053.0" font-size="11.6" text-anchor="start" dy="0.35em" font-weight="300" letter-spacing="0.3">钢板尺寸</text><text x="1797.8" y="1076.4" font-size="11.6" text-anchor="start" dy="0.35em" font-weight="300" letter-spacing="0.3">材质</text><text x="1797.8" y="1123.6" font-size="11.6" text-anchor="start" dy="0.35em" font-weight="300" letter-spacing="0.3">源板编号</text><text x="1797.8" y="1147.2" font-size="11.6" text-anchor="start" dy="0.35em" font-weight="300" letter-spacing="0.3">套料编号</text><text x="1797.3" y="1094.2" font-size="6.8" text-anchor="start" dy="0.35em" font-weight="500">零件净重</text><text x="1850.3" y="1104.7" font-size="6.8" text-anchor="end" dy="0.35em" font-weight="500">/钢板重量</text><text x="1853.3" y="1053.2" font-size="13.5" text-anchor="start" dy="0.35em" font-weight="300" letter-spacing="0.25">0x2000x5000</text><text x="1956.3" y="1053.7" font-size="13.5" text-anchor="start" dy="0.35em" font-weight="300" letter-spacing="0.4">4990.5</text><text x="1853.3" y="1100.2" font-size="13.5" text-anchor="start" dy="0.35em" font-weight="300" letter-spacing="0.5">0.69</text><text x="1930.8" y="1099.7" font-size="16" text-anchor="start" dy="0.35em" font-weight="300">/</text><text x="1942.3" y="1100.2" font-size="13.5" text-anchor="start" dy="0.35em" font-weight="300" letter-spacing="0.5">0.785</text><text x="2034.3" y="1053.0" font-size="11.6" text-anchor="start" dy="0.35em" font-weight="300" letter-spacing="0.3">空走长度</text><text x="2034.3" y="1076.4" font-size="11.6" text-anchor="start" dy="0.35em" font-weight="300" letter-spacing="0.3">切割长度</text><text x="2034.3" y="1100.0" font-size="11.6" text-anchor="start" dy="0.35em" font-weight="300" letter-spacing="0.3">喷粉长度</text><text x="2034.3" y="1123.6" font-size="11.6" text-anchor="start" dy="0.35em" font-weight="300" letter-spacing="0.3">机动时间</text><text x="2034.3" y="1147.2" font-size="11.6" text-anchor="start" dy="0.35em" font-weight="300" letter-spacing="0.3">切割机型</text><text x="2090.8" y="1052.7" font-size="13.2" text-anchor="start" dy="0.35em" font-weight="300" letter-spacing="0.45">68.887 m</text><text x="2090.8" y="1076.1" font-size="13.2" text-anchor="start" dy="0.35em" font-weight="300" letter-spacing="0.45">148.825 m</text><text x="2090.8" y="1099.7" font-size="13.2" text-anchor="start" dy="0.35em" font-weight="300" letter-spacing="0.45">0 m</text><text x="2090.8" y="1123.3" font-size="13.2" text-anchor="start" dy="0.35em" font-weight="300" letter-spacing="0.45">255.38<tspan font-size="11.5" letter-spacing="1" dy="-0.5">分钟</tspan></text><text x="2090.8" y="1146.9" font-size="13.2" text-anchor="start" dy="0.35em" font-weight="300" letter-spacing="0.45">1. <tspan font-size="11.5" letter-spacing="1" dy="-0.5">国际标准</tspan><tspan dy="0.5">EIA</tspan><tspan font-size="11.5" letter-spacing="1" dy="-0.5">代码</tspan></text><text x="2170.3" y="1053.0" font-size="11.6" text-anchor="start" dy="0.35em" font-weight="300" letter-spacing="0.3">打孔数</text><text x="2170.3" y="1076.4" font-size="11.6" text-anchor="start" dy="0.35em" font-weight="300" letter-spacing="0.3">利用率</text><text x="2170.3" y="1100.0" font-size="11.6" text-anchor="start" dy="0.35em" font-weight="300" letter-spacing="0.3">利用率1</text><text x="2170.3" y="1123.6" font-size="11.6" text-anchor="start" dy="0.35em" font-weight="300" letter-spacing="0.3">补偿</text><text x="2221.8" y="1055.4" font-size="16.5" text-anchor="start" dy="0.35em" font-weight="300">226</text><text x="2221.8" y="1078.8" font-size="16.5" text-anchor="start" dy="0.35em" font-weight="300">87.66%</text><text x="2221.8" y="1100.2" font-size="16.5" text-anchor="start" dy="0.35em" font-weight="300">87.66%</text><text x="2221.8" y="1126.0" font-size="16.5" text-anchor="start" dy="0.35em" font-weight="300">0</text><text x="2289.8" y="1053.0" font-size="11.6" text-anchor="start" dy="0.35em" font-weight="300" letter-spacing="0.3">切割块数</text><text x="2289.8" y="1076.4" font-size="11.6" text-anchor="start" dy="0.35em" font-weight="300" letter-spacing="0.3">割嘴数量</text><text x="2289.8" y="1100.0" font-size="11.6" text-anchor="start" dy="0.35em" font-weight="300" letter-spacing="0.3">割嘴距离</text><text x="2289.8" y="1123.6" font-size="11.6" text-anchor="start" dy="0.35em" font-weight="300" letter-spacing="0.3">切割次数</text><text x="2289.8" y="1147.2" font-size="11.6" text-anchor="start" dy="0.35em" font-weight="300" letter-spacing="0.3">套料人</text><text x="2341.8" y="1052.7" font-size="15" text-anchor="start" dy="0.35em" font-weight="300" letter-spacing="0.5">102</text><text x="2341.8" y="1078.6" font-size="15" text-anchor="start" dy="0.35em" font-weight="300" letter-spacing="0.5">1</text><text x="2341.8" y="1102.2" font-size="15" text-anchor="start" dy="0.35em" font-weight="300" letter-spacing="0.5">0</text><text x="2341.8" y="1125.8" font-size="15" text-anchor="start" dy="0.35em" font-weight="300" letter-spacing="0.5">1</text><text x="2344.3" y="1149.4" font-size="17.5" text-anchor="start" dy="0.35em" font-weight="300" letter-spacing="0.5">nester</text><text x="1816.8" y="1171.2" font-size="11.6" text-anchor="middle" dy="0.35em" font-weight="300" letter-spacing="0.3">代码文件</text><text x="1816.8" y="1194.8" font-size="11.6" text-anchor="middle" dy="0.35em" font-weight="300" letter-spacing="0.3">套料文件</text><text x="1816.8" y="1218.2" font-size="11.6" text-anchor="middle" dy="0.35em" font-weight="300" letter-spacing="0.3">钢板编号</text><text x="1805.8" y="1242.9" font-size="11.6" text-anchor="middle" dy="0.35em" font-weight="300" letter-spacing="0.3">炉号</text><text x="1853.3" y="1171.2" font-size="10.2" text-anchor="start" dy="0.35em" font-weight="300" letter-spacing="0.3">C:/Users/86181/Desktop/1/14.txt</text><text transform="translate(2420.8,1100.2) scale(0.8,1)" font-size="12" text-anchor="start" dy="0.35em" font-weight="300">自由项1</text><text transform="translate(2581.8,1100.2) scale(0.8,1)" font-size="12" text-anchor="start" dy="0.35em" font-weight="300">自由项5</text><text transform="translate(2420.8,1123.8) scale(0.8,1)" font-size="12" text-anchor="start" dy="0.35em" font-weight="300">自由项2</text><text transform="translate(2581.8,1123.8) scale(0.8,1)" font-size="12" text-anchor="start" dy="0.35em" font-weight="300">自由项6</text><text transform="translate(2420.8,1147.4) scale(0.8,1)" font-size="12" text-anchor="start" dy="0.35em" font-weight="300">自由项3</text><text transform="translate(2581.8,1147.4) scale(0.8,1)" font-size="12" text-anchor="start" dy="0.35em" font-weight="300">自由项7</text><text transform="translate(2420.8,1171.2) scale(0.8,1)" font-size="12" text-anchor="start" dy="0.35em" font-weight="300">自由项4</text><text transform="translate(2581.8,1171.2) scale(0.8,1)" font-size="12" text-anchor="start" dy="0.35em" font-weight="300">自由项8</text><text transform="translate(2420.8,1194.8) scale(0.86,1)" font-size="12" text-anchor="start" dy="0.35em" font-weight="300">套料日期</text><text x="2472.3" y="1195.3" font-size="10" text-anchor="start" dy="0.35em" font-weight="300" letter-spacing="0.45">2024-04-02 16:24:17</text><text x="2582.3" y="1194.8" font-size="12.5" text-anchor="start" dy="0.35em" font-weight="300">页</text><text x="2606.8" y="1194.8" font-size="12.5" text-anchor="start" dy="0.35em" font-weight="300">数</text><text x="2624.8" y="1194.8" font-size="9.5" text-anchor="start" dy="0.35em" font-weight="300" letter-spacing="0.2">共6页,第5页</text><ellipse cx="2439.3" cy="1064.2" rx="21" ry="12.3" fill="none" stroke="#fff" stroke-width="1"/><path d="M2429.8,1055.7 h19 M2439.3,1052.2 v5 M2429.8,1072.7 h19 M2439.3,1076.2 v-5" stroke="#fff" stroke-width="0.9" fill="none"/><text x="2439.3" y="1064.5" font-size="11.5" text-anchor="middle" dy="0.35em" font-weight="700" letter-spacing="0.8" font-family="'Liberation Mono',monospace">ZCIT</text><text x="2461.8" y="1064.2" font-size="11.5" text-anchor="start" dy="0.35em" font-weight="300" letter-spacing="0.6">上海卓畅信息技术有限公司</text></g></svg>
<div style="left:2536.5px;top:745px;width:14px;height:241px;background:#222934;border:1.3px solid #aab0bb;border-radius:4px"></div>
<div style="left:38px;top:1244px;width:2495px;height:24.5px;border-bottom:1.3px solid #2b323f"></div>
<div style="left:684px;top:1246.5px;width:1069px;height:19.5px;background:#222934;border:1.3px solid #aab0bb;border-radius:5px"></div>
<!-- bottom -->
<svg style="left:1291.5px;top:1274px;" width="18" height="3" viewBox="0 0 18 3"><rect x="0.0" y="0" width="1.2" height="1.6" fill="#9aa1ad"/><rect x="2.2" y="0" width="1.2" height="1.6" fill="#9aa1ad"/><rect x="4.4" y="0" width="1.2" height="1.6" fill="#9aa1ad"/><rect x="6.6000000000000005" y="0" width="1.2" height="1.6" fill="#9aa1ad"/><rect x="8.8" y="0" width="1.2" height="1.6" fill="#9aa1ad"/><rect x="11.0" y="0" width="1.2" height="1.6" fill="#9aa1ad"/><rect x="13.200000000000001" y="0" width="1.2" height="1.6" fill="#9aa1ad"/></svg>
<svg style="left:48px;top:1281px;" width="18" height="37" viewBox="0 0 18 37"><rect x="0.8" y="0.9" width="15.2" height="17" fill="#fff"/><rect x="3.2" y="4" width="10.2" height="10.4" rx="2.2" fill="none" stroke="#555" stroke-width="0.9"/><path d="M5.8,6.6 L10.8,11.8 M10.8,6.6 L5.8,11.8" stroke="#555" stroke-width="1.7"/><rect x="0.8" y="18.8" width="15.2" height="17" fill="#fff"/><rect x="3.2" y="22" width="10.2" height="10.4" rx="2.2" fill="none" stroke="#555" stroke-width="0.9"/><rect x="5.4" y="25.6" width="4.2" height="4.2" rx="1" fill="none" stroke="#555" stroke-width="0.9"/><rect x="7.4" y="23.8" width="4.2" height="4.2" rx="1" fill="#fff" stroke="#555" stroke-width="0.9"/></svg>
<div style="left:82.4px;top:1287px;width:2470px;height:22.5px;border:1.3px solid #2f3644;overflow:hidden"><div class="t" style="left:4px;top:-12.5px;font-size:29.5px;line-height:34px">Action: <span style="font-size:27px">产生代码</span> (gcode, gc)</div></div>
<div style="left:2528.5px;top:1291px;width:20px;height:15.5px;background:#222934;border:1.3px solid #aab0bb;border-radius:4px"></div>
<div class="t" style="left:82.5px;top:1314.5px;font-size:27px;line-height:37px;color:#ffffff;">命令:</div>
<div style="left:82.4px;top:1351px;width:2470px;height:40.5px;border:2.2px solid #fff;border-radius:4px"></div>
<div class="t" style="left:20.5px;top:1327px;width:74px;height:34px;font-size:27px;line-height:34px;transform:rotate(-90deg);transform-origin:center;text-align:left">命<span style="letter-spacing:1px">…</span></div>
<div style="left:0px;top:1429.5px;width:2545px;height:6px;background:#222934"></div>
<svg style="left:-14.5px;top:1395.7px" width="40" height="34" viewBox="-20.0 -17.0 40 34"><rect x="-2.6" y="-9.0" width="1.4" height="1.4" fill="#7d8594"/><rect x="-2.6" y="-6.4" width="1.4" height="1.4" fill="#7d8594"/><rect x="-2.6" y="-3.8" width="1.4" height="1.4" fill="#7d8594"/><rect x="-2.6" y="-1.1999999999999993" width="1.4" height="1.4" fill="#7d8594"/><rect x="-2.6" y="1.4000000000000004" width="1.4" height="1.4" fill="#7d8594"/><rect x="-2.6" y="4.0" width="1.4" height="1.4" fill="#7d8594"/><rect x="-2.6" y="6.600000000000001" width="1.4" height="1.4" fill="#7d8594"/><rect x="0.0" y="-9.0" width="1.4" height="1.4" fill="#7d8594"/><rect x="0.0" y="-6.4" width="1.4" height="1.4" fill="#7d8594"/><rect x="0.0" y="-3.8" width="1.4" height="1.4" fill="#7d8594"/><rect x="0.0" y="-1.1999999999999993" width="1.4" height="1.4" fill="#7d8594"/><rect x="0.0" y="1.4000000000000004" width="1.4" height="1.4" fill="#7d8594"/><rect x="0.0" y="4.0" width="1.4" height="1.4" fill="#7d8594"/><rect x="0.0" y="6.600000000000001" width="1.4" height="1.4" fill="#7d8594"/></svg>
<div class="t" style="left:22px;top:1398.7px;font-size:22px;line-height:28px;color:#7d828c;font-family:'Liberation Serif',serif">Ex</div>
<svg style="left:57.5px;top:1395.7px" width="40" height="34" viewBox="-20.0 -17.0 40 34"><path d="M-8,0 H8 M0,-8.5 V8.5" stroke="#15181e" stroke-width="1" fill="none" stroke-dasharray="2 1.2"/></svg>
<svg style="left:101.2px;top:1395.7px" width="40" height="34" viewBox="-20.0 -17.0 40 34"><circle cx="0" cy="0" r="11.5" stroke="#c3c6cc" stroke-width="1.2" fill="none"/><path d="M-9,0 H9 M0,-9 V9" stroke="#c3c6cc" stroke-width="1" fill="none" /><path d="M-10,0 l3,-2 v4Z M10,0 l-3,-2 v4Z M0,-10 l-2,3 h4Z M0,10 l-2,-3 h4Z" fill="#52b0f0"/></svg>
<svg style="left:144.7px;top:1395.7px" width="40" height="34" viewBox="-20.0 -17.0 40 34"><path d="M-11,-11 V11.5 H11" stroke="#c3c6cc" stroke-width="1" fill="none" stroke-dasharray="3 2"/><path d="M-8,6 L4,-8 L9,-4 L-3,9 Z" fill="#52b0f0" stroke="#e8f4ff" stroke-width="1.2"/><path d="M5,-9.5 l2,-2 l5,4 l-2,2 Z" fill="#fff"/><path d="M-9.5,9.5 l1.5,-4 l3,3 Z" fill="#fff"/><path d="M-9,10.5 H2" stroke="#dde" stroke-width="2" fill="none" /></svg>
<div style="left:194.5px;top:1403.5px;width:1.2px;height:19px;background:#333a48"></div>
<svg style="left:203.0px;top:1395.7px" width="40" height="34" viewBox="-20.0 -17.0 40 34"><circle cx="-10" cy="-9.0" r="2" fill="#9aa" stroke="#f0a838" stroke-width="0.9"/><circle cx="-10" cy="-2.8" r="2" fill="#9aa" stroke="#f0a838" stroke-width="0.9"/><circle cx="-10" cy="3.4000000000000004" r="2" fill="#9aa" stroke="#f0a838" stroke-width="0.9"/><circle cx="-10" cy="9.600000000000001" r="2" fill="#9aa" stroke="#f0a838" stroke-width="0.9"/><circle cx="0" cy="-9.0" r="2" fill="#9aa" stroke="#f0a838" stroke-width="0.9"/><circle cx="0" cy="-2.8" r="2" fill="#9aa" stroke="#f0a838" stroke-width="0.9"/><circle cx="0" cy="3.4000000000000004" r="2" fill="#9aa" stroke="#f0a838" stroke-width="0.9"/><circle cx="0" cy="9.600000000000001" r="2" fill="#9aa" stroke="#f0a838" stroke-width="0.9"/><circle cx="10" cy="-9.0" r="2" fill="#9aa" stroke="#f0a838" stroke-width="0.9"/><circle cx="10" cy="-2.8" r="2" fill="#9aa" stroke="#f0a838" stroke-width="0.9"/><circle cx="10" cy="3.4000000000000004" r="2" fill="#9aa" stroke="#f0a838" stroke-width="0.9"/><circle cx="10" cy="9.600000000000001" r="2" fill="#9aa" stroke="#f0a838" stroke-width="0.9"/></svg>
<svg style="left:246.0px;top:1395.7px" width="40" height="34" viewBox="-20.0 -17.0 40 34"><path d="M-10,-1 C -2,-2 2,4 2,10 M-7,-7.5 C 0,-4 4,2 9.5,9" stroke="#c3c6cc" stroke-width="1.1" fill="none" /><circle cx="-7" cy="-7.5" r="2.3" fill="#52b0f0" stroke="#f0a838" stroke-width="0.9"/><circle cx="-10" cy="-1" r="2.3" fill="#52b0f0" stroke="#f0a838" stroke-width="0.9"/><circle cx="1.5" cy="10" r="2.3" fill="#52b0f0" stroke="#f0a838" stroke-width="0.9"/><circle cx="9.5" cy="9" r="2.3" fill="#52b0f0" stroke="#f0a838" stroke-width="0.9"/></svg>
<svg style="left:289.3px;top:1395.7px" width="40" height="34" viewBox="-20.0 -17.0 40 34"><path d="M-11,-2.5 C -3,-2 0,4 0,10 M-7,-10 C 0,-6 4,0 9.5,7" stroke="#c3c6cc" stroke-width="1" fill="none" stroke-dasharray="2 1.5"/><circle cx="-11" cy="-2.5" r="1.6" fill="#52b0f0" stroke="#f0a838" stroke-width="0.9"/><circle cx="-2.5" cy="2.5" r="1.6" fill="#52b0f0" stroke="#f0a838" stroke-width="0.9"/><circle cx="0" cy="10" r="1.6" fill="#52b0f0" stroke="#f0a838" stroke-width="0.9"/><circle cx="-7" cy="-10" r="1.6" fill="#52b0f0" stroke="#f0a838" stroke-width="0.9"/><circle cx="-2" cy="-4.5" r="1.6" fill="#52b0f0" stroke="#f0a838" stroke-width="0.9"/><circle cx="4.5" cy="2" r="1.6" fill="#52b0f0" stroke="#f0a838" stroke-width="0.9"/><circle cx="9.5" cy="7" r="1.6" fill="#52b0f0" stroke="#f0a838" stroke-width="0.9"/><circle cx="-7" cy="-3.5" r="1.6" fill="#52b0f0" stroke="#f0a838" stroke-width="0.9"/></svg>
<svg style="left:332.0px;top:1395.7px" width="40" height="34" viewBox="-20.0 -17.0 40 34"><path d="M-8,-11 L11,8 M-11,-4 C-2,-2 2,4 2.5,11" stroke="#c3c6cc" stroke-width="1.1" fill="none" /><circle cx="1.5" cy="-2.5" r="1.7" fill="#5a78c8"/><circle cx="-10" cy="9" r="1.7" fill="#5a78c8"/></svg>
<svg style="left:374.8px;top:1395.7px" width="40" height="34" viewBox="-20.0 -17.0 40 34"><path d="M-8,-11 L11,8 M-11,-4 C-2,-2 2,4 2.5,11" stroke="#c3c6cc" stroke-width="1.1" fill="none" /><circle cx="1.3" cy="-2.5" r="2" fill="#f0a838"/><circle cx="-1.2" cy="1.2" r="2" fill="#f0a838"/></svg>
<svg style="left:418.8px;top:1395.7px" width="40" height="34" viewBox="-20.0 -17.0 40 34"><path d="M-8,-11 L11,8 M-11,-4 C-2,-2 2,4 2.5,11" stroke="#c3c6cc" stroke-width="1.1" fill="none" /><circle cx="0.3" cy="-2.5" r="1.8" fill="#52b0f0"/><circle cx="0" cy="6" r="1.8" fill="#52b0f0"/><path d="M5,-6 l3,1.5 l-3,1.5Z M-7,5.5 l3,1.5 l-3,1.5Z" fill="#f0a838"/></svg>
<svg style="left:460.8px;top:1395.7px" width="40" height="34" viewBox="-20.0 -17.0 40 34"><path d="M-11,-11 L11,11 M11,-11 L-11,11" stroke="#c3c6cc" stroke-width="1.2" fill="none" /><circle r="2.6" fill="#52b0f0" stroke="#f0a838" stroke-width="0.8"/></svg>
<svg style="left:503.5px;top:1395.7px" width="40" height="34" viewBox="-20.0 -17.0 40 34"><circle cx="0" cy="0" r="10.5" stroke="#c3c6cc" stroke-width="1.2" fill="none"/><circle cx="0" cy="-10.5" r="1.8" fill="#52b0f0" stroke="#f0a838" stroke-width="0.9"/><circle cx="10.5" cy="0" r="1.8" fill="#52b0f0" stroke="#f0a838" stroke-width="0.9"/><circle cx="0" cy="10.5" r="1.8" fill="#52b0f0" stroke="#f0a838" stroke-width="0.9"/><circle cx="-10.5" cy="0" r="1.8" fill="#52b0f0" stroke="#f0a838" stroke-width="0.9"/></svg>
<svg style="left:547.0px;top:1395.7px" width="40" height="34" viewBox="-20.0 -17.0 40 34"><path d="M0,-11 V10 M-11,10 H11" stroke="#c3c6cc" stroke-width="1.2" fill="none" /><path d="M0,5 H5 V10" stroke="#c3c6cc" stroke-width="1" fill="none" /><circle cx="0" cy="10" r="1.5" stroke="#f0a838" stroke-width="0.8" fill="none"/></svg>
<div style="left:598.3px;top:1403.5px;width:1.2px;height:19px;background:#333a48"></div>
<svg style="left:605.6px;top:1395.7px" width="40" height="34" viewBox="-20.0 -17.0 40 34"><path d="M-11,-1.2 H11 M-11,1.2 H11 M-1.2,-11 V11 M1.2,-11 V11" stroke="#9a9da4" stroke-width="1" fill="none" /><path d="M-10,0 H10 M0,-10 V10" stroke="#b8a070" stroke-width="0.6" fill="none" /><circle cx="0" cy="0" r="1.4" stroke="#f0a838" stroke-width="0" fill="#f0a838"/></svg>
<div style="left:657px;top:1403.5px;width:1.2px;height:19px;background:#333a48"></div>
<svg style="left:649.4px;top:1395.7px" width="40" height="34" viewBox="-20.0 -17.0 40 34"><rect x="-2.6" y="-9.0" width="1.4" height="1.4" fill="#7d8594"/><rect x="-2.6" y="-6.4" width="1.4" height="1.4" fill="#7d8594"/><rect x="-2.6" y="-3.8" width="1.4" height="1.4" fill="#7d8594"/><rect x="-2.6" y="-1.1999999999999993" width="1.4" height="1.4" fill="#7d8594"/><rect x="-2.6" y="1.4000000000000004" width="1.4" height="1.4" fill="#7d8594"/><rect x="-2.6" y="4.0" width="1.4" height="1.4" fill="#7d8594"/><rect x="-2.6" y="6.600000000000001" width="1.4" height="1.4" fill="#7d8594"/><rect x="0.0" y="-9.0" width="1.4" height="1.4" fill="#7d8594"/><rect x="0.0" y="-6.4" width="1.4" height="1.4" fill="#7d8594"/><rect x="0.0" y="-3.8" width="1.4" height="1.4" fill="#7d8594"/><rect x="0.0" y="-1.1999999999999993" width="1.4" height="1.4" fill="#7d8594"/><rect x="0.0" y="1.4000000000000004" width="1.4" height="1.4" fill="#7d8594"/><rect x="0.0" y="4.0" width="1.4" height="1.4" fill="#7d8594"/><rect x="0.0" y="6.600000000000001" width="1.4" height="1.4" fill="#7d8594"/></svg>
<svg style="left:679.0px;top:1395.7px" width="40" height="34" viewBox="-20.0 -17.0 40 34"><rect x="-11.5" y="-11.5" width="10.5" height="10.5" rx="0" stroke="#c3c6cc" stroke-width="1" fill="none"/><rect x="1" y="1" width="10.5" height="10.5" rx="0" stroke="#c3c6cc" stroke-width="1" fill="none"/><text x="-6.2" y="-3.3" font-size="8" fill="#c3c6cc" text-anchor="middle" font-weight="bold" font-family="Liberation Sans,sans-serif">1</text><text x="6.3" y="9.3" font-size="8" fill="#c3c6cc" text-anchor="middle" font-weight="bold" font-family="Liberation Sans,sans-serif">2</text><path d="M3,-11 A 8 8 0 0 1 11,-3 M-3,11 A 8 8 0 0 1 -11,3" stroke="#c3c6cc" stroke-width="1.1" fill="none" /></svg>
<svg style="left:721.8px;top:1395.7px" width="40" height="34" viewBox="-20.0 -17.0 40 34"><rect x="-11" y="-11" width="22" height="22" rx="0" stroke="#c3c6cc" stroke-width="1.1" fill="none"/><text x="0" y="8.5" font-size="23" fill="#c3c6cc" text-anchor="middle" font-weight="normal" font-family="Liberation Sans,sans-serif">N</text></svg>
<svg style="left:764.8px;top:1395.7px" width="40" height="34" viewBox="-20.0 -17.0 40 34"><rect x="-11" y="-11" width="22" height="22" rx="0" stroke="#c3c6cc" stroke-width="1.1" fill="none"/><text x="0" y="8.5" font-size="23" fill="#c3c6cc" text-anchor="middle" font-weight="normal" font-family="Liberation Sans,sans-serif">1</text></svg>
<svg style="left:808.0px;top:1395.7px" width="40" height="34" viewBox="-20.0 -17.0 40 34"><rect x="-11.5" y="-11.5" width="23" height="23" rx="0" stroke="#c3c6cc" stroke-width="1.1" fill="none"/><rect x="-11.5" y="-11.5" width="23" height="23" fill="none" stroke="#fff" stroke-width="1.2" stroke-dasharray="2.5 1.8"/><rect x="-9" y="-9" width="18" height="18" rx="0" stroke="#c3c6cc" stroke-width="0.9" fill="none"/></svg>
<div style="left:852.6px;top:1397.7px;width:37.6px;height:30px;background:#666;border:2px solid #f4f4f4;border-radius:7px"></div>
<svg style="left:851.4px;top:1395.7px" width="40" height="34" viewBox="-20.0 -17.0 40 34"><circle cx="0" cy="0" r="10.5" stroke="#c3c6cc" stroke-width="1.1" fill="none"/><circle cx="0" cy="0" r="4.5" stroke="#c3c6cc" stroke-width="1.1" fill="none"/><path d="M-7,0 H7 M0,-7 V7" stroke="#c3c6cc" stroke-width="1.1" fill="none" /></svg>
<svg style="left:894.0px;top:1395.7px" width="40" height="34" viewBox="-20.0 -17.0 40 34"><path d="M-12,-4 H-3 V11 M12,-4 H3 V11 M-3,-12 V-4 M3,-12 V-4" stroke="#c3c6cc" stroke-width="1.2" fill="none" /><path d="M-2,-2 L2,-5 M-2,1.5 L2,-1.5 M-2,5 L2,2 M-2,8.5 L2,5.5 M-2,11 L2,8.5" stroke="#c3c6cc" stroke-width="0.9" fill="none" /></svg>
<svg style="left:936.9px;top:1395.7px" width="40" height="34" viewBox="-20.0 -17.0 40 34"><path d="M-12,0 V-11 H12 V0" stroke="#c3c6cc" stroke-width="1.1" fill="none" /><path d="M-11,2 L0,-7 L11,2" stroke="#c3c6cc" stroke-width="1.2" fill="none" /><path d="M-5.5,12 V-1.5 L0,-6 L5.5,-1.5 V12" stroke="#c3c6cc" stroke-width="1.1" fill="none" /></svg>
<svg style="left:980.0px;top:1395.7px" width="40" height="34" viewBox="-20.0 -17.0 40 34"><path d="M-5,-12 V-2 H5 V-12" stroke="#c3c6cc" stroke-width="1.2" fill="none" /><rect x="-11.5" y="3" width="23" height="6.5" rx="0" stroke="#c3c6cc" stroke-width="1.1" fill="none"/></svg>
<svg style="left:1022.4000000000001px;top:1395.7px" width="40" height="34" viewBox="-20.0 -17.0 40 34"><path d="M11,9 H-11 L4,-11" stroke="#c3c6cc" stroke-width="1.3" fill="none" /></svg>
<svg style="left:1065.6px;top:1395.7px" width="40" height="34" viewBox="-20.0 -17.0 40 34"><rect x="-10.5" y="-8.5" width="21" height="17" rx="2" stroke="#c3c6cc" stroke-width="1.1" fill="none"/><path d="M-2,-11 L1.5,-8.5 L-2,-6 M2,11 L-1.5,8.5 L2,6" stroke="#c3c6cc" stroke-width="1.1" fill="none" /></svg>
<div style="left:1110.2px;top:1397.7px;width:37.6px;height:30px;background:#666;border:2px solid #f4f4f4;border-radius:7px"></div>
<svg style="left:1109.0px;top:1395.7px" width="40" height="34" viewBox="-20.0 -17.0 40 34"><path d="M-7,-1 L-10.5,9 H10.5 L7,-1 Z" stroke="#c3c6cc" stroke-width="1.2" fill="none" /><rect x="-5.5" y="-8" width="11" height="4.5" rx="0" stroke="#c3c6cc" stroke-width="1.1" fill="none"/><path d="M-4,-3.5 V-1 M4,-3.5 V-1 M-6.5,3.5 H6.5" stroke="#c3c6cc" stroke-width="1.1" fill="none" /></svg>
<svg style="left:1152.4px;top:1395.7px" width="40" height="34" viewBox="-20.0 -17.0 40 34"><circle cx="-1" cy="-0.5" r="10.2" stroke="#c3c6cc" stroke-width="1.2" fill="none"/><text x="3" y="10.5" font-size="8.5" fill="#f4f4f4" text-anchor="middle" font-weight="bold" font-family="Liberation Sans,sans-serif">No</text></svg>
<div style="left:1196.2px;top:1397.7px;width:37.6px;height:30px;background:#666;border:2px solid #f4f4f4;border-radius:7px"></div>
<svg style="left:1195.0px;top:1395.7px" width="40" height="34" viewBox="-20.0 -17.0 40 34"><rect x="-10.5" y="-10.5" width="21" height="21" rx="0" stroke="#c3c6cc" stroke-width="1.1" fill="none"/><path d="M-10.5,-1.5 H-3 L0,1.5 L3,-1.5 H10.5" stroke="#c3c6cc" stroke-width="1.1" fill="none" /></svg>
<div style="left:1239.8px;top:1397.7px;width:37.6px;height:30px;background:#666;border:2px solid #f4f4f4;border-radius:7px"></div>
<svg style="left:1238.6px;top:1395.7px" width="40" height="34" viewBox="-20.0 -17.0 40 34"><rect x="-11.5" y="-11.5" width="23" height="23" rx="0" stroke="#c3c6cc" stroke-width="1" fill="none"/><rect x="-10" y="-10" width="20" height="20" rx="0" stroke="#c3c6cc" stroke-width="0.7" fill="none"/><text x="0" y="8.8" font-size="24" fill="#c3c6cc" text-anchor="middle" font-weight="normal" font-family="Liberation Sans,sans-serif">A</text></svg>
<svg style="left:1281.0px;top:1395.7px" width="40" height="34" viewBox="-20.0 -17.0 40 34"><circle cx="0" cy="0" r="11.2" stroke="#c3c6cc" stroke-width="1.1" fill="none"/><path d="M-9,0 H9 M0,-9 V9" stroke="#c3c6cc" stroke-width="1.1" fill="none" /><path d="M-7,-1.5 v3 M-4.5,-1.5 v3 M-2,-1.5 v3 M2,-1.5 v3 M4.5,-1.5 v3 M7,-1.5 v3 M-1.5,-7 h3 M-1.5,-4.5 h3 M-1.5,4.5 h3 M-1.5,7 h3" stroke="#c3c6cc" stroke-width="0.7" fill="none" /></svg>
<div style="left:1325.6000000000001px;top:1397.7px;width:37.6px;height:30px;background:#666;border:2px solid #f4f4f4;border-radius:7px"></div>
<svg style="left:1324.4px;top:1395.7px" width="40" height="34" viewBox="-20.0 -17.0 40 34"><rect x="-10.5" y="-10.5" width="21" height="21" rx="0" stroke="#c3c6cc" stroke-width="1.1" fill="none"/><path d="M-10.5,-3.5 H10.5 M-10.5,3.5 H-1.5 M1.5,3.5 H10.5" stroke="#c3c6cc" stroke-width="1.1" fill="none" /></svg>
<svg style="left:1367.0px;top:1395.7px" width="40" height="34" viewBox="-20.0 -17.0 40 34"><rect x="-10.5" y="-10.5" width="21" height="5.2" rx="0" stroke="#c3c6cc" stroke-width="1" fill="none"/><rect x="-10.5" y="-3" width="21" height="5.2" rx="0" stroke="#c3c6cc" stroke-width="1" fill="none"/><rect x="-10.5" y="4.5" width="21" height="6" rx="0" stroke="#e83838" stroke-width="1.1" fill="none"/></svg>
<svg style="left:1410.0px;top:1395.7px" width="40" height="34" viewBox="-20.0 -17.0 40 34"><path d="M11,11 H-11 V-11 H11" stroke="#c3c6cc" stroke-width="1" fill="none" /><path d="M11,-11 V11" stroke="#c3c6cc" stroke-width="0.9" fill="none" stroke-dasharray="2 1.5"/><path d="M-3,-3 L-1,-5 L8,4 L8,7 L5,7 Z" stroke="#c3c6cc" stroke-width="1" fill="none" /></svg>
<svg style="left:1452.4px;top:1395.7px" width="40" height="34" viewBox="-20.0 -17.0 40 34"><circle cx="-7.5" cy="-7.5" r="3.2" stroke="#c3c6cc" stroke-width="1.1" fill="none"/><circle cx="-7.5" cy="7.5" r="3.2" stroke="#c3c6cc" stroke-width="1.1" fill="none"/><path d="M-4.2,-7.5 H9 L-4.5,6.5" stroke="#c3c6cc" stroke-width="1.1" fill="none" /><path d="M4,9.5 V4.5 H6 V1 H8 V4.5 H11 V10 H5 Z" stroke="#c3c6cc" stroke-width="1" fill="none" /></svg>
<div style="left:1497.6000000000001px;top:1397.7px;width:37.6px;height:30px;background:#666;border:2px solid #f4f4f4;border-radius:7px"></div>
<svg style="left:1496.4px;top:1395.7px" width="40" height="34" viewBox="-20.0 -17.0 40 34"><rect x="-11" y="-11" width="22" height="22" rx="0" stroke="#c3c6cc" stroke-width="1.1" fill="none"/><rect x="-7.5" y="-7.5" width="15" height="15" rx="0" stroke="#c3c6cc" stroke-width="1.6" fill="none"/><path d="M-11,-11 L-7.5,-7.5 M11,-11 L7.5,-7.5 M-11,11 L-7.5,7.5 M11,11 L7.5,7.5" stroke="#c3c6cc" stroke-width="0.9" fill="none" /></svg>
<div style="left:1540.9px;top:1397.7px;width:37.6px;height:30px;background:#666;border:2px solid #f4f4f4;border-radius:7px"></div>
<svg style="left:1539.7px;top:1395.7px" width="40" height="34" viewBox="-20.0 -17.0 40 34"><path d="M-11,-5 V-11 H-4 V-6 H4 V-11 H11 V-5 M-11,5 V11 H-4 V6 H4 V11 H11 V5 M-11,2 H-4 V-2 H-11 M11,2 H4 V-2 H11" stroke="#c3c6cc" stroke-width="1.1" fill="none" /></svg>
<svg style="left:1582.0px;top:1395.7px" width="40" height="34" viewBox="-20.0 -17.0 40 34"><circle cx="5" cy="-3" r="6.2" stroke="#c3c6cc" stroke-width="1.2" fill="none"/><path d="M-11,3.2 H5.5 M-2,-3 V12" stroke="#c3c6cc" stroke-width="1.2" fill="none" /></svg>
<svg style="left:1625.2px;top:1395.7px" width="40" height="34" viewBox="-20.0 -17.0 40 34"><path d="M7.5,5 A 8.8 8.8 0 1 1 3,-7" stroke="#c3c6cc" stroke-width="1.5" fill="none" /><path d="M-2,3 L11,-9 M1,2.5 H11" stroke="#c3c6cc" stroke-width="1.3" fill="none" /></svg>
<svg style="left:1668.0px;top:1395.7px" width="40" height="34" viewBox="-20.0 -17.0 40 34"><path d="M-11,-8.5 H4 M-11,0 H0 M-11,8.5 H10" stroke="#c3c6cc" stroke-width="1.1" fill="none" stroke-dasharray="2.5 1.3"/><path d="M5,-8.5 H11 M7,-11 L0.5,0.5 H7.5 L2,11 M4.5,0 H11" stroke="#c3c6cc" stroke-width="1.1" fill="none" /></svg>
<div style="left:1712.6000000000001px;top:1397.7px;width:37.6px;height:30px;background:#666;border:2px solid #f4f4f4;border-radius:7px"></div>
<svg style="left:1711.4px;top:1395.7px" width="40" height="34" viewBox="-20.0 -17.0 40 34"><rect x="-10.5" y="-10.5" width="21" height="21" rx="0" stroke="#c3c6cc" stroke-width="1.1" fill="none"/><path d="M-10.5,-8 H10.5 M-10.5,2 H10.5 M3,2 V10.5 M3,6 H10.5" stroke="#c3c6cc" stroke-width="1" fill="none" /><circle cx="0" cy="-9.3" r="0.8" stroke="#c3c6cc" stroke-width="0.6" fill="none"/></svg>
<div style="left:1755.4px;top:1397.7px;width:37.6px;height:30px;background:#666;border:2px solid #f4f4f4;border-radius:7px"></div>
<svg style="left:1754.2px;top:1395.7px" width="40" height="34" viewBox="-20.0 -17.0 40 34"><rect x="-11.5" y="-10.5" width="23" height="21" fill="none" stroke="#c3c6cc" stroke-width="1" stroke-dasharray="1.2 1.2"/><rect x="-8" y="-8" width="6" height="16" rx="0" stroke="#c3c6cc" stroke-width="1.1" fill="none"/><rect x="1" y="-8" width="7" height="16" rx="0" stroke="#c3c6cc" stroke-width="1.1" fill="none"/><path d="M1,-8 L8,8" stroke="#c3c6cc" stroke-width="1" fill="none" /></svg>
<svg style="left:1797.0px;top:1395.7px" width="40" height="34" viewBox="-20.0 -17.0 40 34"><path d="M-11,0 H11" stroke="#c3c6cc" stroke-width="1.3" fill="none" /><path d="M-11,-8.5 H11 M-11,8.5 H11" stroke="#e83838" stroke-width="1.2" fill="none" stroke-dasharray="2 1.5"/></svg>
<svg style="left:1839.7px;top:1395.7px" width="40" height="34" viewBox="-20.0 -17.0 40 34"><path d="M-7,-10.5 H9.5 V8" stroke="#c3c6cc" stroke-width="1" fill="none" /><rect x="-9.5" y="-8" width="16.5" height="18.5" rx="0" stroke="#c3c6cc" stroke-width="1.1" fill="none"/><circle cx="-3" cy="-1" r="2.2" stroke="#c3c6cc" stroke-width="1" fill="none"/><path d="M-1.5,0.5 L3,5 M1,3 L2.5,1.5" stroke="#c3c6cc" stroke-width="1" fill="none" /></svg>
<svg style="left:1881.0px;top:1395.7px" width="40" height="34" viewBox="-20.0 -17.0 40 34"><path d="M11,9.5 H-10.5 L0,-2 M-2,0 L3.5,-8" stroke="#c3c6cc" stroke-width="1.2" fill="none" /><text x="2.5" y="6.5" font-size="8.5" fill="#c3c6cc" text-anchor="middle" font-weight="bold" font-family="Liberation Serif,serif">T</text></svg>
<div style="left:1934.3px;top:1403.5px;width:1.2px;height:19px;background:#333a48"></div>
<div style="left:1943.6000000000001px;top:1397.7px;width:37.6px;height:30px;background:#666;border:2px solid #f4f4f4;border-radius:7px"></div>
<svg style="left:1942.4px;top:1395.7px" width="40" height="34" viewBox="-20.0 -17.0 40 34"><path d="M-11.5,-11 V11 H11.5" stroke="#c3c6cc" stroke-width="1.1" fill="none" /><rect x="-3.5" y="-11" width="14" height="13" fill="#d8d8d8"/><path d="M-3,3 L-8,8 M-8,4.5 V8 H-4.5" stroke="#c3c6cc" stroke-width="1.1" fill="none" /><circle cx="1.5" cy="-3.5" r="7.8" stroke="#f04040" stroke-width="2" fill="none"/><path d="M-3.8,-9 L7,1.8" stroke="#f04040" stroke-width="2" fill="none" /></svg>
<svg style="left:1985.0px;top:1395.7px" width="40" height="34" viewBox="-20.0 -17.0 40 34"><rect x="-11.2" y="-11.2" width="9.8" height="9.8" rx="0" stroke="#c3c6cc" stroke-width="1.1" fill="none"/><rect x="1.4" y="-11.2" width="9.8" height="9.8" rx="0" stroke="#c3c6cc" stroke-width="1.1" fill="none"/><rect x="-11.2" y="1.4" width="9.8" height="9.8" rx="0" stroke="#c3c6cc" stroke-width="1.1" fill="none"/><rect x="1.4" y="1.4" width="9.8" height="9.8" rx="0" stroke="#c3c6cc" stroke-width="1.1" fill="none"/></svg>
<svg style="left:2027.9px;top:1395.7px" width="40" height="34" viewBox="-20.0 -17.0 40 34"><path d="M-9.5,-11 L11.5,-7 L8.5,11.5 L-11.5,8 Z" fill="#f6fafc"/><path d="M-11.5,0 H11.5" stroke="#f04818" stroke-width="1.2" fill="none" stroke-dasharray="2.5 1.6"/></svg>
<svg style="left:2071.0px;top:1395.7px" width="40" height="34" viewBox="-20.0 -17.0 40 34"><defs><linearGradient id="gbar" x1="0" x2="1"><stop offset="0" stop-color="#e8f0fa"/><stop offset="1" stop-color="#8cb8ea"/></linearGradient></defs><rect x="-10.3" y="-11.5" width="5" height="23" fill="url(#gbar)"/><circle cx="3.5" cy="0" r="6.2" fill="none" stroke="#d82020" stroke-width="1.6" stroke-dasharray="4 2.2"/><circle cx="3.5" cy="0" r="2.6" stroke="#8a8a8a" stroke-width="1.3" fill="none"/></svg>
<svg style="left:2113.9px;top:1395.7px" width="40" height="34" viewBox="-20.0 -17.0 40 34"><path d="M-9.5,-5 H-6 C 0,-5 0,5 6,5 H9" stroke="#52b0f0" stroke-width="2.4" fill="none" /><path d="M7,1 L11.5,5 L7,9 Z" fill="#52b0f0"/><path d="M-9.5,5 H-6 C 0,5 0,-5 6,-5 H8" stroke="#b8bcc4" stroke-width="2.4" fill="none" /><path d="M7,-9 L11.5,-5 L7,-1 Z" fill="#b8bcc4"/><path d="M-7.5,1.5 L-11.5,5 L-7.5,8.5 Z" fill="#b8bcc4"/><path d="M-7.5,-8.5 L-11.5,-5 L-7.5,-1.5 Z" fill="#52b0f0"/></svg>
</body></html>
